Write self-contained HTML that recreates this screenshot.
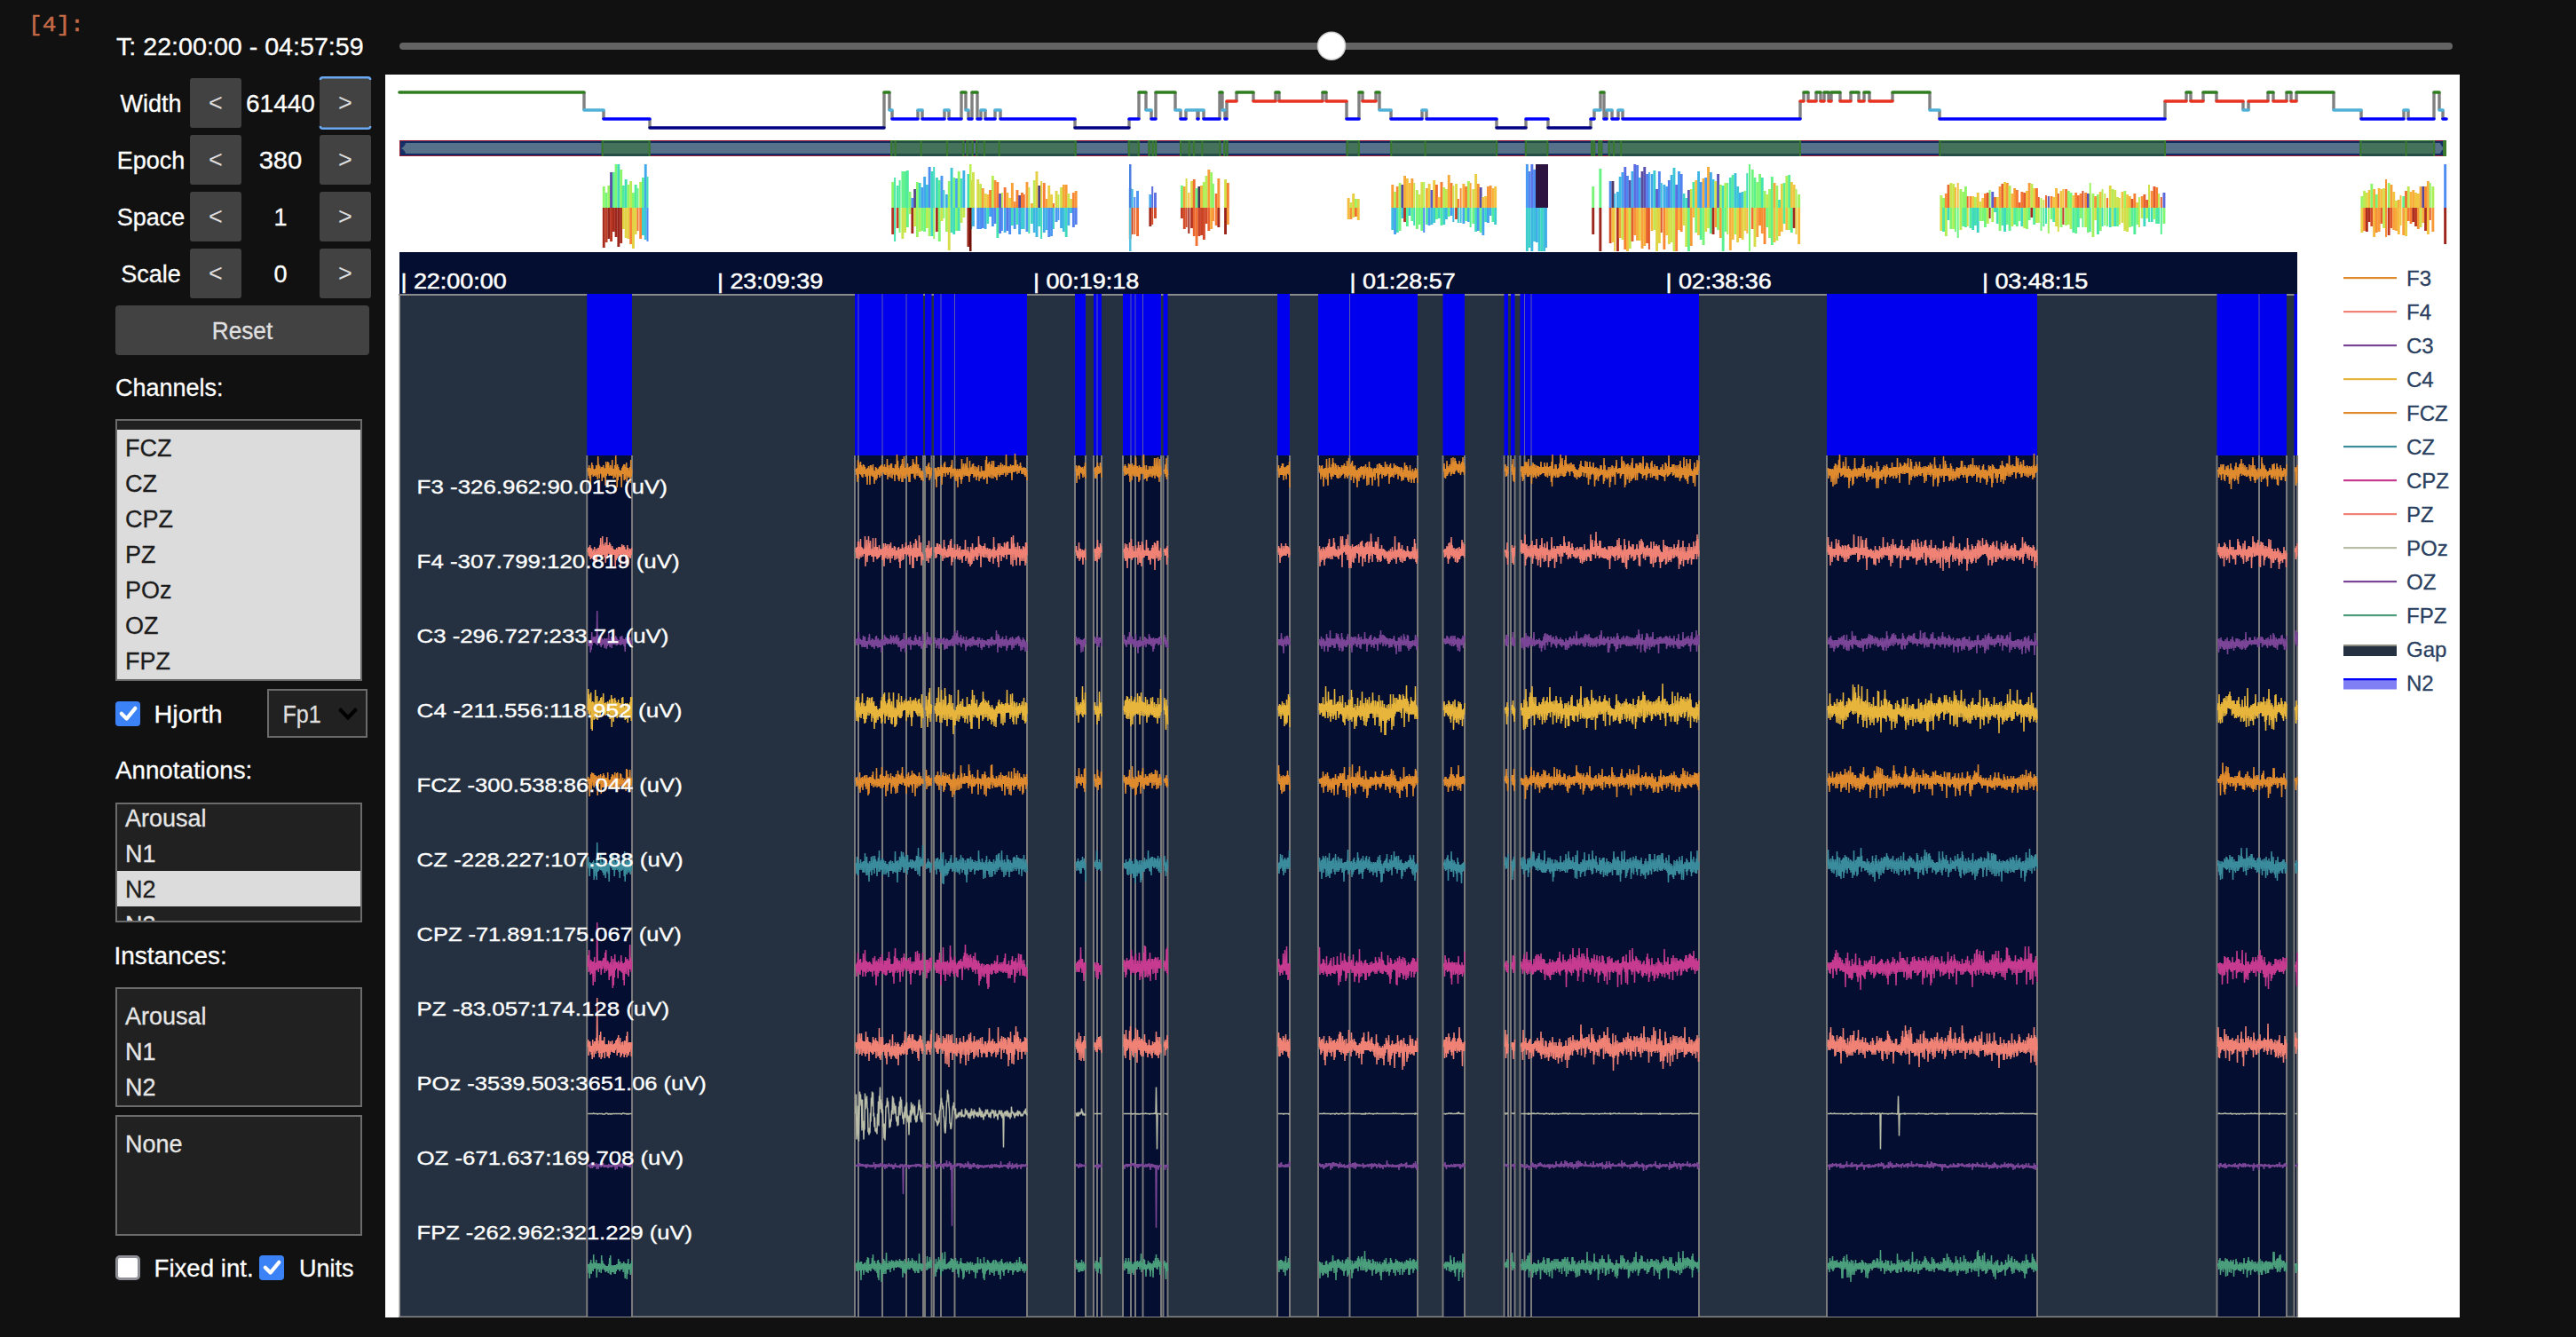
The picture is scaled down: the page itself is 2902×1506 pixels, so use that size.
<!DOCTYPE html><html><head><meta charset="utf-8"><style>html,body{margin:0;padding:0;background:#111111;width:2902px;height:1506px;overflow:hidden}svg{display:block}</style></head><body>
<svg width="2902" height="1506" viewBox="0 0 2902 1506">
<rect width="2902" height="1506" fill="#111111"/>
<text x="32" y="34.8" font-size="24.8" fill="#c46a47" font-family='"Liberation Mono", monospace' textLength="62.8" lengthAdjust="spacingAndGlyphs" stroke="#c46a47" stroke-width="0.5">[4]:</text>
<text x="131" y="62" font-size="27" fill="#ffffff" font-family='"Liberation Sans", sans-serif' stroke="#ffffff" stroke-width="0.3" textLength="278.7" lengthAdjust="spacingAndGlyphs" >T: 22:00:00 - 04:57:59</text>
<rect x="450" y="48" width="2313" height="8" rx="4" fill="#646464"/>
<circle cx="1500" cy="51.7" r="15.5" fill="#ffffff" stroke="#cfcfcf" stroke-width="1.5"/>
<text x="170" y="126.25" font-size="27" fill="#ffffff" font-family='"Liberation Sans", sans-serif' stroke="#ffffff" stroke-width="0.3" text-anchor="middle" >Width</text>
<rect x="214" y="88" width="58" height="56" rx="3" fill="#424242"/>
<rect x="360" y="88" width="58" height="56" rx="3" fill="#424242"/>
<text x="243" y="125.25" font-size="27" fill="#dddddd" font-family='"Liberation Sans", sans-serif' text-anchor="middle" >&lt;</text>
<text x="389" y="125.25" font-size="27" fill="#dddddd" font-family='"Liberation Sans", sans-serif' text-anchor="middle" >&gt;</text>
<text x="316" y="126.25" font-size="27" fill="#ffffff" font-family='"Liberation Sans", sans-serif' stroke="#ffffff" stroke-width="0.3" text-anchor="middle" textLength="77.9" lengthAdjust="spacingAndGlyphs" >61440</text>
<text x="170" y="190.25" font-size="27" fill="#ffffff" font-family='"Liberation Sans", sans-serif' stroke="#ffffff" stroke-width="0.3" text-anchor="middle" >Epoch</text>
<rect x="214" y="152" width="58" height="56" rx="3" fill="#424242"/>
<rect x="360" y="152" width="58" height="56" rx="3" fill="#424242"/>
<text x="243" y="189.25" font-size="27" fill="#dddddd" font-family='"Liberation Sans", sans-serif' text-anchor="middle" >&lt;</text>
<text x="389" y="189.25" font-size="27" fill="#dddddd" font-family='"Liberation Sans", sans-serif' text-anchor="middle" >&gt;</text>
<text x="316" y="190.25" font-size="27" fill="#ffffff" font-family='"Liberation Sans", sans-serif' stroke="#ffffff" stroke-width="0.3" text-anchor="middle" textLength="48.7" lengthAdjust="spacingAndGlyphs" >380</text>
<text x="170" y="254.25" font-size="27" fill="#ffffff" font-family='"Liberation Sans", sans-serif' stroke="#ffffff" stroke-width="0.3" text-anchor="middle" >Space</text>
<rect x="214" y="216" width="58" height="56" rx="3" fill="#424242"/>
<rect x="360" y="216" width="58" height="56" rx="3" fill="#424242"/>
<text x="243" y="253.25" font-size="27" fill="#dddddd" font-family='"Liberation Sans", sans-serif' text-anchor="middle" >&lt;</text>
<text x="389" y="253.25" font-size="27" fill="#dddddd" font-family='"Liberation Sans", sans-serif' text-anchor="middle" >&gt;</text>
<text x="316" y="254.25" font-size="27" fill="#ffffff" font-family='"Liberation Sans", sans-serif' stroke="#ffffff" stroke-width="0.3" text-anchor="middle" >1</text>
<text x="170" y="318.25" font-size="27" fill="#ffffff" font-family='"Liberation Sans", sans-serif' stroke="#ffffff" stroke-width="0.3" text-anchor="middle" >Scale</text>
<rect x="214" y="280" width="58" height="56" rx="3" fill="#424242"/>
<rect x="360" y="280" width="58" height="56" rx="3" fill="#424242"/>
<text x="243" y="317.25" font-size="27" fill="#dddddd" font-family='"Liberation Sans", sans-serif' text-anchor="middle" >&lt;</text>
<text x="389" y="317.25" font-size="27" fill="#dddddd" font-family='"Liberation Sans", sans-serif' text-anchor="middle" >&gt;</text>
<text x="316" y="318.25" font-size="27" fill="#ffffff" font-family='"Liberation Sans", sans-serif' stroke="#ffffff" stroke-width="0.3" text-anchor="middle" >0</text>
<path d="M360.8 90 Q360.8 87.3 363.5 87.3 H414.5 Q417.2 87.3 417.2 90 M360.8 142 Q360.8 144.7 363.5 144.7 H414.5 Q417.2 144.7 417.2 142" stroke="#6aa8f0" stroke-width="2.4" fill="none"/>
<rect x="360" y="86.5" width="58" height="59" rx="3" fill="none" stroke="#6aa8f0" stroke-width="0" />
<rect x="130" y="344" width="286" height="56" rx="4" fill="#424242"/>
<text x="273" y="382" font-size="27" fill="#e0e0e0" font-family='"Liberation Sans", sans-serif' stroke="#e0e0e0" stroke-width="0.3" text-anchor="middle" textLength="68.5" lengthAdjust="spacingAndGlyphs" >Reset</text>
<text x="130" y="446" font-size="27" fill="#ffffff" font-family='"Liberation Sans", sans-serif' stroke="#ffffff" stroke-width="0.3" >Channels:</text>
<rect x="131" y="473" width="276" height="293" fill="#dcdcdc" stroke="#6b6b6b" stroke-width="2"/>
<rect x="132" y="474" width="274" height="10" fill="#202020"/>
<text x="141" y="514" font-size="27" fill="#1c1c1c" font-family='"Liberation Sans", sans-serif' stroke="#1c1c1c" stroke-width="0.3" >FCZ</text>
<text x="141" y="554" font-size="27" fill="#1c1c1c" font-family='"Liberation Sans", sans-serif' stroke="#1c1c1c" stroke-width="0.3" >CZ</text>
<text x="141" y="594" font-size="27" fill="#1c1c1c" font-family='"Liberation Sans", sans-serif' stroke="#1c1c1c" stroke-width="0.3" >CPZ</text>
<text x="141" y="634" font-size="27" fill="#1c1c1c" font-family='"Liberation Sans", sans-serif' stroke="#1c1c1c" stroke-width="0.3" >PZ</text>
<text x="141" y="674" font-size="27" fill="#1c1c1c" font-family='"Liberation Sans", sans-serif' stroke="#1c1c1c" stroke-width="0.3" >POz</text>
<text x="141" y="714" font-size="27" fill="#1c1c1c" font-family='"Liberation Sans", sans-serif' stroke="#1c1c1c" stroke-width="0.3" >OZ</text>
<text x="141" y="754" font-size="27" fill="#1c1c1c" font-family='"Liberation Sans", sans-serif' stroke="#1c1c1c" stroke-width="0.3" >FPZ</text>
<rect x="130" y="790" width="28" height="28" rx="4" fill="#3b82f6"/>
<path d="M136.8 803.8 L142.6 809.6 L152.3 797.8" stroke="#ffffff" stroke-width="4.2" fill="none" stroke-linecap="round" stroke-linejoin="round"/>
<text x="173.5" y="814" font-size="27" fill="#ffffff" font-family='"Liberation Sans", sans-serif' stroke="#ffffff" stroke-width="0.3" textLength="77" lengthAdjust="spacingAndGlyphs" >Hjorth</text>
<rect x="302" y="777" width="111" height="53" fill="#212121" stroke="#6b6b6b" stroke-width="2"/>
<text x="318.5" y="814" font-size="27" fill="#dddddd" font-family='"Liberation Sans", sans-serif' stroke="#dddddd" stroke-width="0.3" textLength="43.3" lengthAdjust="spacingAndGlyphs" >Fp1</text>
<path d="M382.5 798.5 L392 808.5 L401.5 798.5" stroke="#000000" stroke-width="4" fill="none"/>
<text x="130" y="877" font-size="27" fill="#ffffff" font-family='"Liberation Sans", sans-serif' stroke="#ffffff" stroke-width="0.3" textLength="154.2" lengthAdjust="spacingAndGlyphs" >Annotations:</text>
<rect x="131" y="905" width="276" height="133" fill="#212121" stroke="#6b6b6b" stroke-width="2"/>
<svg x="132" y="906" width="274" height="131"><rect x="0" y="75" width="274" height="40" fill="#dcdcdc"/>
<text x="9" y="25" font-size="27" fill="#e6e6e6" font-family='"Liberation Sans", sans-serif' stroke="#e6e6e6" stroke-width="0.3" >Arousal</text>
<text x="9" y="65" font-size="27" fill="#e6e6e6" font-family='"Liberation Sans", sans-serif' stroke="#e6e6e6" stroke-width="0.3" >N1</text>
<text x="9" y="105" font-size="27" fill="#1c1c1c" font-family='"Liberation Sans", sans-serif' stroke="#1c1c1c" stroke-width="0.3" >N2</text>
<text x="9" y="145" font-size="27" fill="#e6e6e6" font-family='"Liberation Sans", sans-serif' stroke="#e6e6e6" stroke-width="0.3" >N3</text>
</svg>
<text x="128.5" y="1086" font-size="27" fill="#ffffff" font-family='"Liberation Sans", sans-serif' stroke="#ffffff" stroke-width="0.3" textLength="127.2" lengthAdjust="spacingAndGlyphs" >Instances:</text>
<rect x="131" y="1113" width="276" height="133" fill="#212121" stroke="#6b6b6b" stroke-width="2"/>
<text x="141" y="1154" font-size="27" fill="#e6e6e6" font-family='"Liberation Sans", sans-serif' stroke="#e6e6e6" stroke-width="0.3" >Arousal</text>
<text x="141" y="1194" font-size="27" fill="#e6e6e6" font-family='"Liberation Sans", sans-serif' stroke="#e6e6e6" stroke-width="0.3" >N1</text>
<text x="141" y="1234" font-size="27" fill="#e6e6e6" font-family='"Liberation Sans", sans-serif' stroke="#e6e6e6" stroke-width="0.3" >N2</text>
<rect x="131" y="1257" width="276" height="134" fill="#212121" stroke="#6b6b6b" stroke-width="2"/>
<text x="141" y="1298" font-size="27" fill="#e6e6e6" font-family='"Liberation Sans", sans-serif' stroke="#e6e6e6" stroke-width="0.3" >None</text>
<rect x="131.5" y="1415.5" width="25" height="25" rx="3.5" fill="#ffffff" stroke="#8e8e96" stroke-width="3"/>
<text x="173.5" y="1438" font-size="27" fill="#ffffff" font-family='"Liberation Sans", sans-serif' stroke="#ffffff" stroke-width="0.3" textLength="112.2" lengthAdjust="spacingAndGlyphs" >Fixed int.</text>
<rect x="292" y="1414" width="28" height="28" rx="4" fill="#3b82f6"/>
<path d="M298.8 1427.8 L304.6 1433.6 L314.3 1421.8" stroke="#ffffff" stroke-width="4.2" fill="none" stroke-linecap="round" stroke-linejoin="round"/>
<text x="337" y="1438" font-size="27" fill="#ffffff" font-family='"Liberation Sans", sans-serif' stroke="#ffffff" stroke-width="0.3" >Units</text>
<rect x="434" y="84" width="2337" height="1400" fill="#ffffff"/>
<rect x="450" y="284" width="2138" height="47" fill="#030e30"/>
<rect x="450" y="331" width="2138" height="1152" fill="#253141"/>
<rect x="449" y="331" width="2139" height="2" fill="#8a8a8a"/>
<rect x="449.5" y="331" width="1.5" height="1153" fill="#8a8a8a"/>
<rect x="449.5" y="1482.5" width="2139" height="1.5" fill="#8a8a8a"/>
<rect x="661.25" y="331" width="50.75" height="182" fill="#0000ee"/>
<rect x="661.25" y="513" width="50.75" height="970" fill="#030e30"/>
<rect x="963" y="331" width="77" height="182" fill="#0000ee"/>
<rect x="963" y="513" width="77" height="970" fill="#030e30"/>
<rect x="1042" y="331" width="7.5" height="182" fill="#0000ee"/>
<rect x="1042" y="513" width="7.5" height="970" fill="#030e30"/>
<rect x="1052" y="331" width="105" height="182" fill="#0000ee"/>
<rect x="1052" y="513" width="105" height="970" fill="#030e30"/>
<rect x="1211" y="331" width="12" height="182" fill="#0000ee"/>
<rect x="1211" y="513" width="12" height="970" fill="#030e30"/>
<rect x="1232" y="331" width="9" height="182" fill="#0000ee"/>
<rect x="1232" y="513" width="9" height="970" fill="#030e30"/>
<rect x="1265" y="331" width="43" height="182" fill="#0000ee"/>
<rect x="1265" y="513" width="43" height="970" fill="#030e30"/>
<rect x="1310.5" y="331" width="5.0" height="182" fill="#0000ee"/>
<rect x="1310.5" y="513" width="5.0" height="970" fill="#030e30"/>
<rect x="1439" y="331" width="14" height="182" fill="#0000ee"/>
<rect x="1439" y="513" width="14" height="970" fill="#030e30"/>
<rect x="1485" y="331" width="112" height="182" fill="#0000ee"/>
<rect x="1485" y="513" width="112" height="970" fill="#030e30"/>
<rect x="1625.5" y="331" width="24.5" height="182" fill="#0000ee"/>
<rect x="1625.5" y="513" width="24.5" height="970" fill="#030e30"/>
<rect x="1694.5" y="331" width="4.5" height="182" fill="#0000ee"/>
<rect x="1694.5" y="513" width="4.5" height="970" fill="#030e30"/>
<rect x="1702" y="331" width="4.5" height="182" fill="#0000ee"/>
<rect x="1702" y="513" width="4.5" height="970" fill="#030e30"/>
<rect x="1712.5" y="331" width="201.5" height="182" fill="#0000ee"/>
<rect x="1712.5" y="513" width="201.5" height="970" fill="#030e30"/>
<rect x="2058" y="331" width="237" height="182" fill="#0000ee"/>
<rect x="2058" y="513" width="237" height="970" fill="#030e30"/>
<rect x="2497.5" y="331" width="78.5" height="182" fill="#0000ee"/>
<rect x="2497.5" y="513" width="78.5" height="970" fill="#030e30"/>
<rect x="2584.5" y="331" width="3.5" height="182" fill="#0000ee"/>
<rect x="2584.5" y="513" width="3.5" height="970" fill="#030e30"/>
<rect x="660.25" y="513" width="2" height="970" fill="#7a7a7a"/>
<rect x="711" y="513" width="2" height="970" fill="#7a7a7a"/>
<rect x="962" y="513" width="2" height="970" fill="#7a7a7a"/>
<rect x="1039" y="513" width="2" height="970" fill="#7a7a7a"/>
<rect x="966" y="513" width="2" height="970" fill="#7a7a7a"/>
<rect x="993" y="513" width="2" height="970" fill="#7a7a7a"/>
<rect x="1020" y="513" width="2" height="970" fill="#7a7a7a"/>
<rect x="966.5" y="331" width="1" height="182" fill="#5a5aa8"/>
<rect x="993.5" y="331" width="1" height="182" fill="#5a5aa8"/>
<rect x="1020.5" y="331" width="1" height="182" fill="#5a5aa8"/>
<rect x="1041" y="513" width="2" height="970" fill="#7a7a7a"/>
<rect x="1048.5" y="513" width="2" height="970" fill="#7a7a7a"/>
<rect x="1051" y="513" width="2" height="970" fill="#7a7a7a"/>
<rect x="1156" y="513" width="2" height="970" fill="#7a7a7a"/>
<rect x="1059" y="513" width="2" height="970" fill="#7a7a7a"/>
<rect x="1074.5" y="513" width="2" height="970" fill="#7a7a7a"/>
<rect x="1059.5" y="331" width="1" height="182" fill="#5a5aa8"/>
<rect x="1075.0" y="331" width="1" height="182" fill="#5a5aa8"/>
<rect x="1210" y="513" width="2" height="970" fill="#7a7a7a"/>
<rect x="1222" y="513" width="2" height="970" fill="#7a7a7a"/>
<rect x="1231" y="513" width="2" height="970" fill="#7a7a7a"/>
<rect x="1240" y="513" width="2" height="970" fill="#7a7a7a"/>
<rect x="1235" y="513" width="2" height="970" fill="#7a7a7a"/>
<rect x="1235.5" y="331" width="1" height="182" fill="#5a5aa8"/>
<rect x="1264" y="513" width="2" height="970" fill="#7a7a7a"/>
<rect x="1307" y="513" width="2" height="970" fill="#7a7a7a"/>
<rect x="1273" y="513" width="2" height="970" fill="#7a7a7a"/>
<rect x="1278" y="513" width="2" height="970" fill="#7a7a7a"/>
<rect x="1286.5" y="513" width="2" height="970" fill="#7a7a7a"/>
<rect x="1273.5" y="331" width="1" height="182" fill="#5a5aa8"/>
<rect x="1278.5" y="331" width="1" height="182" fill="#5a5aa8"/>
<rect x="1287.0" y="331" width="1" height="182" fill="#5a5aa8"/>
<rect x="1309.5" y="513" width="2" height="970" fill="#7a7a7a"/>
<rect x="1314.5" y="513" width="2" height="970" fill="#7a7a7a"/>
<rect x="1438" y="513" width="2" height="970" fill="#7a7a7a"/>
<rect x="1452" y="513" width="2" height="970" fill="#7a7a7a"/>
<rect x="1484" y="513" width="2" height="970" fill="#7a7a7a"/>
<rect x="1596" y="513" width="2" height="970" fill="#7a7a7a"/>
<rect x="1519.5" y="513" width="2" height="970" fill="#7a7a7a"/>
<rect x="1520.0" y="331" width="1" height="182" fill="#5a5aa8"/>
<rect x="1624.5" y="513" width="2" height="970" fill="#7a7a7a"/>
<rect x="1649" y="513" width="2" height="970" fill="#7a7a7a"/>
<rect x="1693.5" y="513" width="2" height="970" fill="#7a7a7a"/>
<rect x="1698" y="513" width="2" height="970" fill="#7a7a7a"/>
<rect x="1701" y="513" width="2" height="970" fill="#7a7a7a"/>
<rect x="1705.5" y="513" width="2" height="970" fill="#7a7a7a"/>
<rect x="1711.5" y="513" width="2" height="970" fill="#7a7a7a"/>
<rect x="1913" y="513" width="2" height="970" fill="#7a7a7a"/>
<rect x="1716.5" y="513" width="2" height="970" fill="#7a7a7a"/>
<rect x="1724" y="513" width="2" height="970" fill="#7a7a7a"/>
<rect x="1717.0" y="331" width="1" height="182" fill="#5a5aa8"/>
<rect x="1724.5" y="331" width="1" height="182" fill="#5a5aa8"/>
<rect x="2057" y="513" width="2" height="970" fill="#7a7a7a"/>
<rect x="2294" y="513" width="2" height="970" fill="#7a7a7a"/>
<rect x="2496.5" y="513" width="2" height="970" fill="#7a7a7a"/>
<rect x="2575" y="513" width="2" height="970" fill="#7a7a7a"/>
<rect x="2544" y="513" width="2" height="970" fill="#7a7a7a"/>
<rect x="2544.5" y="331" width="1" height="182" fill="#5a5aa8"/>
<rect x="2583.5" y="513" width="2" height="970" fill="#7a7a7a"/>
<rect x="2587" y="513" width="2" height="970" fill="#7a7a7a"/>
<text x="451.4" y="325.3" font-size="24" fill="#ffffff" font-family='"Liberation Sans", sans-serif' stroke="#ffffff" stroke-width="0.5" textLength="119.4" lengthAdjust="spacingAndGlyphs" >| 22:00:00</text>
<text x="807.9" y="325.3" font-size="24" fill="#ffffff" font-family='"Liberation Sans", sans-serif' stroke="#ffffff" stroke-width="0.5" textLength="119.4" lengthAdjust="spacingAndGlyphs" >| 23:09:39</text>
<text x="1163.9" y="325.3" font-size="24" fill="#ffffff" font-family='"Liberation Sans", sans-serif' stroke="#ffffff" stroke-width="0.5" textLength="119.4" lengthAdjust="spacingAndGlyphs" >| 00:19:18</text>
<text x="1520.4" y="325.3" font-size="24" fill="#ffffff" font-family='"Liberation Sans", sans-serif' stroke="#ffffff" stroke-width="0.5" textLength="119.4" lengthAdjust="spacingAndGlyphs" >| 01:28:57</text>
<text x="1876.4" y="325.3" font-size="24" fill="#ffffff" font-family='"Liberation Sans", sans-serif' stroke="#ffffff" stroke-width="0.5" textLength="119.4" lengthAdjust="spacingAndGlyphs" >| 02:38:36</text>
<text x="2232.9" y="325.3" font-size="24" fill="#ffffff" font-family='"Liberation Sans", sans-serif' stroke="#ffffff" stroke-width="0.5" textLength="119.4" lengthAdjust="spacingAndGlyphs" >| 03:48:15</text>
<path d="M658.0 104V124M680.0 124V134M732.0 134V144M996.0 144V104M1002.0 104V124M1005.0 124V134M1034.0 134V124M1039.0 124V134M1064.0 134V124M1069.0 124V134M1083.0 134V104M1088.0 104V124M1091.0 124V134M1095.0 134V104M1101.0 104V134M1105.0 134V124M1110.0 124V134M1121.0 134V124M1127.0 124V134M1211.0 134V144M1272.0 144V134M1283.0 134V104M1291.0 104V124M1297.0 124V134M1302.0 134V104M1324.0 104V124M1330.0 124V134M1336.0 134V124M1349.0 124V134M1350.0 134V124M1356.0 124V134M1374.0 134V104M1377.0 104V124M1380.0 124V134M1382.0 134V114M1393.0 114V104M1412.0 104V114M1437.0 114V104M1441.0 104V114M1490.0 114V104M1494.0 104V114M1517.0 114V134M1531.0 134V104M1535.0 104V114M1550.0 114V104M1554.0 104V124M1567.0 124V134M1602.0 134V124M1607.0 124V134M1686.0 134V144M1719.0 144V134M1744.0 134V144M1792.0 144V134M1796.0 134V124M1803.0 124V104M1807.0 104V134M1810.0 134V124M1816.0 124V134M1823.0 134V124M1828.0 124V134M2028.0 134V114M2032.0 114V104M2037.0 104V114M2046.0 114V104M2051.0 104V114M2055.0 114V104M2060.0 104V114M2063.0 114V104M2073.0 104V114M2085.0 114V104M2094.0 104V114M2100.0 114V104M2106.0 104V114M2132.0 114V104M2174.0 104V124M2185.0 124V134M2439.0 134V114M2463.0 114V104M2468.0 104V114M2482.0 114V104M2497.0 104V114M2527.0 114V124M2533.0 124V114M2555.0 114V104M2561.0 104V114M2576.0 114V104M2581.0 104V114M2587.0 114V104M2629.0 104V124M2660.0 124V134M2708.0 134V124M2713.0 124V134M2742.0 134V104M2748.0 104V124M2752.0 124V134" stroke="#808080" stroke-width="3.4" fill="none"/>
<path d="M450.0 104H658.0M996.0 104H1002.0M1083.0 104H1088.0M1095.0 104H1101.0M1283.0 104H1291.0M1302.0 104H1324.0M1374.0 104H1377.0M1393.0 104H1412.0M1437.0 104H1441.0M1490.0 104H1494.0M1531.0 104H1535.0M1550.0 104H1554.0M1803.0 104H1807.0M2032.0 104H2037.0M2046.0 104H2051.0M2055.0 104H2060.0M2063.0 104H2073.0M2085.0 104H2094.0M2100.0 104H2106.0M2132.0 104H2174.0M2463.0 104H2468.0M2482.0 104H2497.0M2555.0 104H2561.0M2576.0 104H2581.0M2587.0 104H2629.0M2742.0 104H2748.0" stroke="#2e7d1f" stroke-width="3.6" fill="none" stroke-linecap="round"/>
<path d="M1382.0 114H1393.0M1412.0 114H1437.0M1441.0 114H1490.0M1494.0 114H1517.0M1535.0 114H1550.0M2028.0 114H2032.0M2037.0 114H2046.0M2051.0 114H2055.0M2060.0 114H2063.0M2073.0 114H2085.0M2094.0 114H2100.0M2106.0 114H2132.0M2439.0 114H2463.0M2468.0 114H2482.0M2497.0 114H2527.0M2533.0 114H2555.0M2561.0 114H2576.0M2581.0 114H2587.0" stroke="#e8321f" stroke-width="3.6" fill="none" stroke-linecap="round"/>
<path d="M658.0 124H680.0M1002.0 124H1005.0M1034.0 124H1039.0M1064.0 124H1069.0M1088.0 124H1091.0M1105.0 124H1110.0M1121.0 124H1127.0M1291.0 124H1297.0M1324.0 124H1330.0M1336.0 124H1349.0M1350.0 124H1356.0M1377.0 124H1380.0M1554.0 124H1567.0M1602.0 124H1607.0M1796.0 124H1803.0M1810.0 124H1816.0M1823.0 124H1828.0M2174.0 124H2185.0M2527.0 124H2533.0M2629.0 124H2660.0M2708.0 124H2713.0M2748.0 124H2752.0" stroke="#4fb0d8" stroke-width="3.6" fill="none" stroke-linecap="round"/>
<path d="M680.0 134H732.0M1005.0 134H1034.0M1039.0 134H1064.0M1069.0 134H1083.0M1091.0 134H1095.0M1101.0 134H1105.0M1110.0 134H1121.0M1127.0 134H1211.0M1272.0 134H1283.0M1297.0 134H1302.0M1330.0 134H1336.0M1349.0 134H1350.0M1356.0 134H1374.0M1380.0 134H1382.0M1517.0 134H1531.0M1567.0 134H1602.0M1607.0 134H1686.0M1719.0 134H1744.0M1792.0 134H1796.0M1807.0 134H1810.0M1816.0 134H1823.0M1828.0 134H2028.0M2185.0 134H2439.0M2660.0 134H2708.0M2713.0 134H2742.0M2752.0 134H2756.0" stroke="#0000ff" stroke-width="3.6" fill="none" stroke-linecap="round"/>
<path d="M732.0 144H996.0M1211.0 144H1272.0M1686.0 144H1719.0M1744.0 144H1792.0" stroke="#000080" stroke-width="3.6" fill="none" stroke-linecap="round"/>
<rect x="450" y="158" width="2306" height="18" fill="#9a1b32"/>
<rect x="451" y="159" width="2304" height="16" fill="#0f2b62"/>
<rect x="452" y="161" width="2302" height="12" fill="#567189"/>
<path d="M451 161 H457 Q456 165 452 167 Q456 169 457 173 H451 Z" fill="#17306a"/>
<path d="M2755 161 H2749 Q2750 165 2754 167 Q2750 169 2749 173 H2755 Z" fill="#17306a"/>
<rect x="677.8" y="158" width="54.7" height="18" fill="#244d45"/>
<rect x="677.8" y="161" width="54.7" height="12" fill="#44725a"/>
<rect x="677.8" y="158" width="54.7" height="1" fill="#3a7a2e"/>
<rect x="677.8" y="158" width="2" height="18" fill="#3a7a2e"/>
<rect x="730.6" y="158" width="2" height="18" fill="#3a7a2e"/>
<rect x="1003.3" y="158" width="83.1" height="18" fill="#244d45"/>
<rect x="1003.3" y="161" width="83.1" height="12" fill="#44725a"/>
<rect x="1003.3" y="158" width="83.1" height="1" fill="#3a7a2e"/>
<rect x="1003.3" y="158" width="2" height="18" fill="#3a7a2e"/>
<rect x="1084.4" y="158" width="2" height="18" fill="#3a7a2e"/>
<rect x="1007.6" y="158" width="2" height="18" fill="#3a7a2e"/>
<rect x="1036.7" y="158" width="2" height="18" fill="#3a7a2e"/>
<rect x="1065.9" y="158" width="2" height="18" fill="#3a7a2e"/>
<rect x="1088.5" y="158" width="8.1" height="18" fill="#244d45"/>
<rect x="1088.5" y="161" width="8.1" height="12" fill="#44725a"/>
<rect x="1088.5" y="158" width="8.1" height="1" fill="#3a7a2e"/>
<rect x="1088.5" y="158" width="2" height="18" fill="#3a7a2e"/>
<rect x="1094.6" y="158" width="2" height="18" fill="#3a7a2e"/>
<rect x="1099.3" y="158" width="113.3" height="18" fill="#244d45"/>
<rect x="1099.3" y="161" width="113.3" height="12" fill="#44725a"/>
<rect x="1099.3" y="158" width="113.3" height="1" fill="#3a7a2e"/>
<rect x="1099.3" y="158" width="2" height="18" fill="#3a7a2e"/>
<rect x="1210.6" y="158" width="2" height="18" fill="#3a7a2e"/>
<rect x="1107.9" y="158" width="2" height="18" fill="#3a7a2e"/>
<rect x="1124.7" y="158" width="2" height="18" fill="#3a7a2e"/>
<rect x="1270.8" y="158" width="12.9" height="18" fill="#244d45"/>
<rect x="1270.8" y="161" width="12.9" height="12" fill="#44725a"/>
<rect x="1270.8" y="158" width="12.9" height="1" fill="#3a7a2e"/>
<rect x="1270.8" y="158" width="2" height="18" fill="#3a7a2e"/>
<rect x="1281.7" y="158" width="2" height="18" fill="#3a7a2e"/>
<rect x="1293.4" y="158" width="9.7" height="18" fill="#244d45"/>
<rect x="1293.4" y="161" width="9.7" height="12" fill="#44725a"/>
<rect x="1293.4" y="158" width="9.7" height="1" fill="#3a7a2e"/>
<rect x="1293.4" y="158" width="2" height="18" fill="#3a7a2e"/>
<rect x="1301.2" y="158" width="2" height="18" fill="#3a7a2e"/>
<rect x="1297.8" y="158" width="2" height="18" fill="#3a7a2e"/>
<rect x="1329.0" y="158" width="46.4" height="18" fill="#244d45"/>
<rect x="1329.0" y="161" width="46.4" height="12" fill="#44725a"/>
<rect x="1329.0" y="158" width="46.4" height="1" fill="#3a7a2e"/>
<rect x="1329.0" y="158" width="2" height="18" fill="#3a7a2e"/>
<rect x="1373.4" y="158" width="2" height="18" fill="#3a7a2e"/>
<rect x="1338.7" y="158" width="2" height="18" fill="#3a7a2e"/>
<rect x="1344.1" y="158" width="2" height="18" fill="#3a7a2e"/>
<rect x="1353.3" y="158" width="2" height="18" fill="#3a7a2e"/>
<rect x="1378.1" y="158" width="5.4" height="18" fill="#244d45"/>
<rect x="1378.1" y="161" width="5.4" height="12" fill="#44725a"/>
<rect x="1378.1" y="158" width="5.4" height="1" fill="#3a7a2e"/>
<rect x="1378.1" y="158" width="2" height="18" fill="#3a7a2e"/>
<rect x="1381.5" y="158" width="2" height="18" fill="#3a7a2e"/>
<rect x="1516.7" y="158" width="15.1" height="18" fill="#244d45"/>
<rect x="1516.7" y="161" width="15.1" height="12" fill="#44725a"/>
<rect x="1516.7" y="158" width="15.1" height="1" fill="#3a7a2e"/>
<rect x="1516.7" y="158" width="2" height="18" fill="#3a7a2e"/>
<rect x="1529.8" y="158" width="2" height="18" fill="#3a7a2e"/>
<rect x="1566.3" y="158" width="120.8" height="18" fill="#244d45"/>
<rect x="1566.3" y="161" width="120.8" height="12" fill="#44725a"/>
<rect x="1566.3" y="158" width="120.8" height="1" fill="#3a7a2e"/>
<rect x="1566.3" y="158" width="2" height="18" fill="#3a7a2e"/>
<rect x="1685.1" y="158" width="2" height="18" fill="#3a7a2e"/>
<rect x="1604.6" y="158" width="2" height="18" fill="#3a7a2e"/>
<rect x="1717.9" y="158" width="26.4" height="18" fill="#244d45"/>
<rect x="1717.9" y="161" width="26.4" height="12" fill="#44725a"/>
<rect x="1717.9" y="158" width="26.4" height="1" fill="#3a7a2e"/>
<rect x="1717.9" y="158" width="2" height="18" fill="#3a7a2e"/>
<rect x="1742.3" y="158" width="2" height="18" fill="#3a7a2e"/>
<rect x="1792.3" y="158" width="4.9" height="18" fill="#244d45"/>
<rect x="1792.3" y="161" width="4.9" height="12" fill="#44725a"/>
<rect x="1792.3" y="158" width="4.9" height="1" fill="#3a7a2e"/>
<rect x="1792.3" y="158" width="2" height="18" fill="#3a7a2e"/>
<rect x="1795.1" y="158" width="2" height="18" fill="#3a7a2e"/>
<rect x="1800.4" y="158" width="4.9" height="18" fill="#244d45"/>
<rect x="1800.4" y="161" width="4.9" height="12" fill="#44725a"/>
<rect x="1800.4" y="158" width="4.9" height="1" fill="#3a7a2e"/>
<rect x="1800.4" y="158" width="2" height="18" fill="#3a7a2e"/>
<rect x="1803.2" y="158" width="2" height="18" fill="#3a7a2e"/>
<rect x="1811.7" y="158" width="217.3" height="18" fill="#244d45"/>
<rect x="1811.7" y="161" width="217.3" height="12" fill="#44725a"/>
<rect x="1811.7" y="158" width="217.3" height="1" fill="#3a7a2e"/>
<rect x="1811.7" y="158" width="2" height="18" fill="#3a7a2e"/>
<rect x="2027.0" y="158" width="2" height="18" fill="#3a7a2e"/>
<rect x="1817.1" y="158" width="2" height="18" fill="#3a7a2e"/>
<rect x="1825.2" y="158" width="2" height="18" fill="#3a7a2e"/>
<rect x="2184.4" y="158" width="255.6" height="18" fill="#244d45"/>
<rect x="2184.4" y="161" width="255.6" height="12" fill="#44725a"/>
<rect x="2184.4" y="158" width="255.6" height="1" fill="#3a7a2e"/>
<rect x="2184.4" y="158" width="2" height="18" fill="#3a7a2e"/>
<rect x="2438.0" y="158" width="2" height="18" fill="#3a7a2e"/>
<rect x="2658.4" y="158" width="84.7" height="18" fill="#244d45"/>
<rect x="2658.4" y="161" width="84.7" height="12" fill="#44725a"/>
<rect x="2658.4" y="158" width="84.7" height="1" fill="#3a7a2e"/>
<rect x="2658.4" y="158" width="2" height="18" fill="#3a7a2e"/>
<rect x="2741.1" y="158" width="2" height="18" fill="#3a7a2e"/>
<rect x="2709.6" y="158" width="2" height="18" fill="#3a7a2e"/>
<rect x="2752.2" y="158" width="3.8" height="18" fill="#244d45"/>
<rect x="2752.2" y="161" width="3.8" height="12" fill="#44725a"/>
<rect x="2752.2" y="158" width="3.8" height="1" fill="#3a7a2e"/>
<rect x="2752.2" y="158" width="2" height="18" fill="#3a7a2e"/>
<rect x="2754.0" y="158" width="2" height="18" fill="#3a7a2e"/>
<rect x="678.8" y="210" width="2.9" height="24" fill="#8cf569"/><rect x="678.8" y="234" width="2.9" height="45" fill="#a82c1e"/><rect x="681.6" y="217" width="2.9" height="17" fill="#73f57a"/><rect x="681.6" y="234" width="2.9" height="39" fill="#c13c24"/><rect x="684.4" y="209" width="2.9" height="25" fill="#98f463"/><rect x="684.4" y="234" width="2.9" height="35" fill="#97261c"/><rect x="687.1" y="194" width="2.9" height="40" fill="#594da8"/><rect x="687.1" y="234" width="2.9" height="38" fill="#ba3722"/><rect x="689.9" y="194" width="2.9" height="40" fill="#5af091"/><rect x="689.9" y="234" width="2.9" height="27" fill="#a72b1d"/><rect x="692.6" y="185" width="2.9" height="49" fill="#7bf674"/><rect x="692.6" y="234" width="2.9" height="33" fill="#9d271c"/><rect x="695.4" y="185" width="2.9" height="49" fill="#40dcb9"/><rect x="695.4" y="234" width="2.9" height="44" fill="#99251c"/><rect x="698.2" y="191" width="2.9" height="43" fill="#89f56b"/><rect x="698.2" y="234" width="2.9" height="40" fill="#a82c1e"/><rect x="700.9" y="209" width="2.9" height="25" fill="#4fea9e"/><rect x="700.9" y="234" width="2.9" height="24" fill="#e3d244"/><rect x="703.7" y="202" width="2.9" height="32" fill="#41deb6"/><rect x="703.7" y="234" width="2.9" height="34" fill="#e1d545"/><rect x="706.4" y="208" width="2.9" height="26" fill="#90f567"/><rect x="706.4" y="234" width="2.9" height="35" fill="#e7cf43"/><rect x="709.2" y="204" width="2.9" height="30" fill="#b8eb54"/><rect x="709.2" y="234" width="2.9" height="41" fill="#f78534"/><rect x="712.0" y="217" width="2.9" height="17" fill="#81f670"/><rect x="712.0" y="234" width="2.9" height="46" fill="#e4d143"/><rect x="714.7" y="208" width="2.9" height="26" fill="#51ec9a"/><rect x="714.7" y="234" width="2.9" height="30" fill="#e2d444"/><rect x="717.5" y="212" width="2.0" height="22" fill="#64f386"/><rect x="717.5" y="234" width="2.0" height="26" fill="#f27231"/><rect x="720.2" y="205" width="2.9" height="29" fill="#aeef58"/><rect x="720.2" y="234" width="2.9" height="35" fill="#f78333"/><rect x="723.0" y="200" width="2.9" height="34" fill="#57ef93"/><rect x="723.0" y="234" width="2.9" height="31" fill="#3ccdcd"/><rect x="725.8" y="185" width="2.9" height="49" fill="#42a8ec"/><rect x="725.8" y="234" width="2.9" height="36" fill="#3cc0db"/><rect x="728.5" y="199" width="2.0" height="35" fill="#43dfb3"/><rect x="728.5" y="234" width="2.0" height="38" fill="#4e8bf1"/><rect x="1004.3" y="205" width="2.9" height="29" fill="#88f56c"/><rect x="1004.3" y="234" width="2.9" height="30" fill="#b53421"/><rect x="1007.1" y="200" width="2.0" height="34" fill="#48e6a8"/><rect x="1007.1" y="234" width="2.0" height="38" fill="#45e2ae"/><rect x="1009.8" y="209" width="2.9" height="25" fill="#4ae7a5"/><rect x="1009.8" y="234" width="2.9" height="23" fill="#c64025"/><rect x="1012.6" y="203" width="2.0" height="31" fill="#51ec9b"/><rect x="1012.6" y="234" width="2.0" height="28" fill="#77f577"/><rect x="1015.4" y="193" width="2.9" height="41" fill="#62f289"/><rect x="1015.4" y="234" width="2.9" height="35" fill="#c9e44d"/><rect x="1018.1" y="193" width="2.9" height="41" fill="#58ef92"/><rect x="1018.1" y="234" width="2.9" height="28" fill="#c9e44d"/><rect x="1020.9" y="192" width="2.9" height="42" fill="#4feb9d"/><rect x="1020.9" y="234" width="2.9" height="22" fill="#65f385"/><rect x="1023.6" y="216" width="2.9" height="18" fill="#7ff671"/><rect x="1023.6" y="234" width="2.9" height="7" fill="#a8f05b"/><rect x="1026.4" y="223" width="2.9" height="11" fill="#4997f1"/><rect x="1026.4" y="234" width="2.9" height="29" fill="#a1291c"/><rect x="1029.2" y="213" width="2.9" height="21" fill="#534287"/><rect x="1029.2" y="234" width="2.9" height="21" fill="#cde24c"/><rect x="1031.9" y="205" width="2.9" height="29" fill="#85f66d"/><rect x="1031.9" y="234" width="2.9" height="33" fill="#9af362"/><rect x="1034.7" y="206" width="2.9" height="28" fill="#3dd4c3"/><rect x="1034.7" y="234" width="2.9" height="27" fill="#b7ec54"/><rect x="1037.4" y="211" width="2.9" height="23" fill="#44a1ef"/><rect x="1037.4" y="234" width="2.9" height="26" fill="#7af675"/><rect x="1040.2" y="199" width="2.9" height="35" fill="#42a8ec"/><rect x="1040.2" y="234" width="2.9" height="27" fill="#71f57b"/><rect x="1043.0" y="208" width="2.9" height="26" fill="#3bc2d8"/><rect x="1043.0" y="234" width="2.9" height="23" fill="#bee951"/><rect x="1045.7" y="188" width="2.9" height="46" fill="#4d8ef1"/><rect x="1045.7" y="234" width="2.9" height="32" fill="#a4f15d"/><rect x="1048.5" y="193" width="2.9" height="41" fill="#3ed8bf"/><rect x="1048.5" y="234" width="2.9" height="32" fill="#3ed7c0"/><rect x="1051.2" y="188" width="2.0" height="46" fill="#3ed7c0"/><rect x="1051.2" y="234" width="2.0" height="35" fill="#94f465"/><rect x="1054.0" y="200" width="2.9" height="34" fill="#40dabb"/><rect x="1054.0" y="234" width="2.9" height="27" fill="#a82c1d"/><rect x="1056.8" y="203" width="2.9" height="31" fill="#5af090"/><rect x="1056.8" y="234" width="2.9" height="38" fill="#7ef672"/><rect x="1059.5" y="198" width="2.9" height="36" fill="#4997f1"/><rect x="1059.5" y="234" width="2.9" height="15" fill="#cfe14b"/><rect x="1062.3" y="214" width="2.0" height="20" fill="#3cccce"/><rect x="1062.3" y="234" width="2.0" height="12" fill="#88f56c"/><rect x="1065.0" y="219" width="2.9" height="15" fill="#40afe8"/><rect x="1065.0" y="234" width="2.9" height="27" fill="#a6f15b"/><rect x="1067.8" y="204" width="2.9" height="30" fill="#97f463"/><rect x="1067.8" y="234" width="2.9" height="48" fill="#d7dc48"/><rect x="1070.6" y="189" width="2.9" height="45" fill="#3bc8d3"/><rect x="1070.6" y="234" width="2.9" height="28" fill="#41deb6"/><rect x="1073.3" y="200" width="2.9" height="34" fill="#70f57c"/><rect x="1073.3" y="234" width="2.9" height="30" fill="#40dcb9"/><rect x="1076.1" y="201" width="2.9" height="33" fill="#44a4ee"/><rect x="1076.1" y="234" width="2.9" height="26" fill="#7df672"/><rect x="1078.8" y="193" width="2.9" height="41" fill="#8ff567"/><rect x="1078.8" y="234" width="2.9" height="26" fill="#42deb5"/><rect x="1081.6" y="201" width="2.9" height="33" fill="#43e0b1"/><rect x="1081.6" y="234" width="2.9" height="17" fill="#bfe951"/><rect x="1084.4" y="192" width="2.9" height="42" fill="#3fafe8"/><rect x="1084.4" y="234" width="2.9" height="11" fill="#c0e850"/><rect x="1089.5" y="196" width="2.9" height="38" fill="#42deb5"/><rect x="1089.5" y="234" width="2.9" height="44" fill="#97261c"/><rect x="1092.3" y="203" width="2.9" height="31" fill="#f0c540"/><rect x="1092.3" y="234" width="2.9" height="24" fill="#3bcbcf"/><rect x="1095.0" y="194" width="2.9" height="40" fill="#d0e04b"/><rect x="1095.0" y="234" width="2.9" height="21" fill="#3fb2e6"/><rect x="1100.3" y="202" width="2.9" height="32" fill="#d8db48"/><rect x="1100.3" y="234" width="2.9" height="24" fill="#4d8ef1"/><rect x="1103.1" y="207" width="2.9" height="27" fill="#c2e750"/><rect x="1103.1" y="234" width="2.9" height="24" fill="#4b93f2"/><rect x="1105.8" y="212" width="2.9" height="22" fill="#f79e38"/><rect x="1105.8" y="234" width="2.9" height="23" fill="#5184f0"/><rect x="1108.6" y="218" width="2.9" height="16" fill="#e1d445"/><rect x="1108.6" y="234" width="2.9" height="24" fill="#41abea"/><rect x="1111.3" y="219" width="2.9" height="15" fill="#f4bf3e"/><rect x="1111.3" y="234" width="2.9" height="18" fill="#3fdabb"/><rect x="1114.1" y="214" width="2.9" height="20" fill="#f77f33"/><rect x="1114.1" y="234" width="2.9" height="10" fill="#469ef0"/><rect x="1116.9" y="198" width="2.9" height="36" fill="#b6ec54"/><rect x="1116.9" y="234" width="2.9" height="21" fill="#4a94f1"/><rect x="1119.6" y="203" width="2.9" height="31" fill="#f79336"/><rect x="1119.6" y="234" width="2.9" height="18" fill="#5185f0"/><rect x="1122.4" y="205" width="2.9" height="29" fill="#f77d32"/><rect x="1122.4" y="234" width="2.9" height="34" fill="#46e3ac"/><rect x="1125.1" y="218" width="2.9" height="16" fill="#5b53b7"/><rect x="1125.1" y="234" width="2.9" height="29" fill="#547ded"/><rect x="1127.9" y="217" width="2.0" height="17" fill="#c0e850"/><rect x="1127.9" y="234" width="2.0" height="26" fill="#4c8ff2"/><rect x="1130.7" y="211" width="2.9" height="23" fill="#f47631"/><rect x="1130.7" y="234" width="2.9" height="28" fill="#3fb1e7"/><rect x="1133.4" y="217" width="2.9" height="17" fill="#f7b43c"/><rect x="1133.4" y="234" width="2.9" height="26" fill="#5775e7"/><rect x="1136.2" y="223" width="2.9" height="11" fill="#e5d143"/><rect x="1136.2" y="234" width="2.9" height="30" fill="#4d8ef1"/><rect x="1138.9" y="206" width="2.9" height="28" fill="#f7a238"/><rect x="1138.9" y="234" width="2.9" height="20" fill="#40dbba"/><rect x="1141.7" y="227" width="2.9" height="7" fill="#f79036"/><rect x="1141.7" y="234" width="2.9" height="24" fill="#4997f1"/><rect x="1144.5" y="214" width="2.9" height="20" fill="#f78033"/><rect x="1144.5" y="234" width="2.9" height="19" fill="#41ddb7"/><rect x="1147.2" y="220" width="2.9" height="14" fill="#564693"/><rect x="1147.2" y="234" width="2.9" height="30" fill="#44a2ee"/><rect x="1150.0" y="217" width="2.9" height="17" fill="#f47731"/><rect x="1150.0" y="234" width="2.9" height="24" fill="#3bc9d2"/><rect x="1152.7" y="219" width="2.0" height="15" fill="#ef6d30"/><rect x="1152.7" y="234" width="2.0" height="24" fill="#3bc6d5"/><rect x="1155.5" y="205" width="2.9" height="29" fill="#f79c37"/><rect x="1155.5" y="234" width="2.9" height="27" fill="#4997f1"/><rect x="1158.3" y="211" width="2.0" height="23" fill="#cce24c"/><rect x="1158.3" y="234" width="2.0" height="29" fill="#42dfb4"/><rect x="1161.0" y="229" width="2.9" height="5" fill="#f7ae3a"/><rect x="1161.0" y="234" width="2.9" height="18" fill="#3ed7c0"/><rect x="1163.8" y="203" width="2.9" height="31" fill="#bbea52"/><rect x="1163.8" y="234" width="2.9" height="28" fill="#3fb2e6"/><rect x="1166.5" y="193" width="2.9" height="41" fill="#e7cf43"/><rect x="1166.5" y="234" width="2.9" height="33" fill="#3db9e1"/><rect x="1169.3" y="209" width="2.9" height="25" fill="#503e79"/><rect x="1169.3" y="234" width="2.9" height="21" fill="#3ccecc"/><rect x="1172.1" y="204" width="2.0" height="30" fill="#e3d344"/><rect x="1172.1" y="234" width="2.0" height="35" fill="#42deb5"/><rect x="1174.8" y="206" width="2.9" height="28" fill="#f77e33"/><rect x="1174.8" y="234" width="2.9" height="28" fill="#40ade9"/><rect x="1177.6" y="224" width="2.9" height="10" fill="#f79f38"/><rect x="1177.6" y="234" width="2.9" height="25" fill="#3fb2e6"/><rect x="1180.3" y="209" width="2.9" height="25" fill="#ecca41"/><rect x="1180.3" y="234" width="2.9" height="33" fill="#4c8ff2"/><rect x="1183.1" y="219" width="2.9" height="15" fill="#ecca41"/><rect x="1183.1" y="234" width="2.9" height="32" fill="#4997f1"/><rect x="1185.9" y="229" width="2.0" height="5" fill="#f47631"/><rect x="1185.9" y="234" width="2.0" height="24" fill="#3ccfca"/><rect x="1188.6" y="215" width="2.9" height="19" fill="#ded645"/><rect x="1188.6" y="234" width="2.9" height="16" fill="#4899f1"/><rect x="1191.4" y="219" width="2.0" height="15" fill="#c1e850"/><rect x="1191.4" y="234" width="2.0" height="14" fill="#4996f1"/><rect x="1194.1" y="211" width="2.9" height="23" fill="#d0e04b"/><rect x="1194.1" y="234" width="2.9" height="23" fill="#40ade9"/><rect x="1196.9" y="208" width="2.9" height="26" fill="#f7a739"/><rect x="1196.9" y="234" width="2.9" height="27" fill="#3cbcdf"/><rect x="1199.7" y="208" width="2.9" height="26" fill="#f79b37"/><rect x="1199.7" y="234" width="2.9" height="33" fill="#3fd9bd"/><rect x="1202.4" y="218" width="2.9" height="16" fill="#c6e64e"/><rect x="1202.4" y="234" width="2.9" height="20" fill="#40ace9"/><rect x="1205.2" y="224" width="2.9" height="10" fill="#d9da47"/><rect x="1205.2" y="234" width="2.9" height="6" fill="#3cbbdf"/><rect x="1207.9" y="217" width="2.9" height="17" fill="#f78434"/><rect x="1207.9" y="234" width="2.9" height="22" fill="#547eed"/><rect x="1210.7" y="215" width="2.9" height="19" fill="#f79636"/><rect x="1210.7" y="234" width="2.9" height="19" fill="#547eed"/><rect x="1271.8" y="212" width="2.9" height="22" fill="#3db8e2"/><rect x="1271.8" y="234" width="2.9" height="35" fill="#f47631"/><rect x="1274.6" y="213" width="2.0" height="21" fill="#3db9e1"/><rect x="1274.6" y="234" width="2.0" height="30" fill="#cc4627"/><rect x="1277.3" y="222" width="2.0" height="12" fill="#4e8cf1"/><rect x="1277.3" y="234" width="2.0" height="30" fill="#f17030"/><rect x="1280.1" y="215" width="2.9" height="19" fill="#4b93f1"/><rect x="1280.1" y="234" width="2.9" height="32" fill="#eb682f"/><rect x="1294.4" y="219" width="2.9" height="15" fill="#42a7ec"/><rect x="1294.4" y="234" width="2.9" height="21" fill="#a2291c"/><rect x="1297.2" y="210" width="2.0" height="24" fill="#5a6add"/><rect x="1297.2" y="234" width="2.0" height="19" fill="#d54e29"/><rect x="1300.0" y="217" width="2.9" height="17" fill="#596fe2"/><rect x="1300.0" y="234" width="2.9" height="12" fill="#d04928"/><rect x="1330.0" y="209" width="2.9" height="25" fill="#70f57c"/><rect x="1330.0" y="234" width="2.9" height="12" fill="#c13d24"/><rect x="1332.8" y="210" width="2.9" height="24" fill="#f7a539"/><rect x="1332.8" y="234" width="2.9" height="24" fill="#d44d29"/><rect x="1335.6" y="201" width="2.0" height="33" fill="#d9da47"/><rect x="1335.6" y="234" width="2.0" height="22" fill="#d24a28"/><rect x="1338.3" y="217" width="2.0" height="17" fill="#f6bb3d"/><rect x="1338.3" y="234" width="2.0" height="29" fill="#a0281c"/><rect x="1341.1" y="204" width="2.9" height="30" fill="#dfd645"/><rect x="1341.1" y="234" width="2.9" height="23" fill="#b43321"/><rect x="1343.8" y="202" width="2.9" height="32" fill="#f06f30"/><rect x="1343.8" y="234" width="2.9" height="32" fill="#ea652e"/><rect x="1346.6" y="212" width="2.9" height="22" fill="#6af481"/><rect x="1346.6" y="234" width="2.9" height="43" fill="#f17131"/><rect x="1349.4" y="210" width="2.9" height="24" fill="#453655"/><rect x="1349.4" y="234" width="2.9" height="32" fill="#ca4326"/><rect x="1352.1" y="209" width="2.9" height="25" fill="#f7b03b"/><rect x="1352.1" y="234" width="2.9" height="31" fill="#c84226"/><rect x="1354.9" y="205" width="2.9" height="29" fill="#acef59"/><rect x="1354.9" y="234" width="2.9" height="36" fill="#d04928"/><rect x="1357.6" y="198" width="2.9" height="36" fill="#b4ed55"/><rect x="1357.6" y="234" width="2.9" height="18" fill="#d04928"/><rect x="1360.4" y="191" width="2.9" height="43" fill="#f79d38"/><rect x="1360.4" y="234" width="2.9" height="26" fill="#e9642e"/><rect x="1363.2" y="194" width="2.9" height="40" fill="#98f463"/><rect x="1363.2" y="234" width="2.9" height="24" fill="#f7a739"/><rect x="1365.9" y="207" width="2.0" height="27" fill="#82f66f"/><rect x="1365.9" y="234" width="2.0" height="15" fill="#f78d35"/><rect x="1368.7" y="218" width="2.9" height="16" fill="#f06f30"/><rect x="1368.7" y="234" width="2.9" height="20" fill="#f57932"/><rect x="1371.4" y="201" width="2.9" height="33" fill="#f79236"/><rect x="1371.4" y="234" width="2.9" height="22" fill="#a42a1c"/><rect x="1379.1" y="202" width="2.9" height="32" fill="#d4de49"/><rect x="1379.1" y="234" width="2.9" height="30" fill="#98251c"/><rect x="1381.9" y="206" width="2.9" height="28" fill="#f78133"/><rect x="1381.9" y="234" width="2.9" height="19" fill="#f79937"/><rect x="1517.7" y="223" width="2.9" height="11" fill="#f6bb3d"/><rect x="1517.7" y="234" width="2.9" height="13" fill="#f5bd3e"/><rect x="1520.5" y="228" width="2.9" height="6" fill="#cae34d"/><rect x="1520.5" y="234" width="2.9" height="13" fill="#f79336"/><rect x="1523.2" y="218" width="2.9" height="16" fill="#e9cc42"/><rect x="1523.2" y="234" width="2.9" height="11" fill="#dcd846"/><rect x="1526.0" y="224" width="2.9" height="10" fill="#9df360"/><rect x="1526.0" y="234" width="2.9" height="10" fill="#ef6e30"/><rect x="1528.8" y="224" width="2.9" height="10" fill="#dfd645"/><rect x="1528.8" y="234" width="2.9" height="14" fill="#f4bf3e"/><rect x="1567.3" y="208" width="2.9" height="26" fill="#f79e38"/><rect x="1567.3" y="234" width="2.9" height="25" fill="#3cbdde"/><rect x="1570.1" y="216" width="2.9" height="18" fill="#aeef58"/><rect x="1570.1" y="234" width="2.9" height="30" fill="#469ef0"/><rect x="1572.8" y="210" width="2.9" height="24" fill="#f78b35"/><rect x="1572.8" y="234" width="2.9" height="28" fill="#42dfb4"/><rect x="1575.6" y="206" width="2.9" height="28" fill="#aaf05a"/><rect x="1575.6" y="234" width="2.9" height="26" fill="#6cf480"/><rect x="1578.4" y="208" width="2.9" height="26" fill="#57499c"/><rect x="1578.4" y="234" width="2.9" height="12" fill="#3cbddd"/><rect x="1581.1" y="198" width="2.9" height="36" fill="#f7aa3a"/><rect x="1581.1" y="234" width="2.9" height="16" fill="#b13120"/><rect x="1583.9" y="201" width="2.9" height="33" fill="#f2c23f"/><rect x="1583.9" y="234" width="2.9" height="21" fill="#57ef94"/><rect x="1586.6" y="206" width="2.9" height="28" fill="#f5bc3d"/><rect x="1586.6" y="234" width="2.9" height="9" fill="#3cc0da"/><rect x="1589.4" y="201" width="2.9" height="33" fill="#f7a038"/><rect x="1589.4" y="234" width="2.9" height="15" fill="#5ef18c"/><rect x="1592.2" y="206" width="2.0" height="28" fill="#cbe34c"/><rect x="1592.2" y="234" width="2.0" height="20" fill="#41ddb7"/><rect x="1594.9" y="214" width="2.9" height="20" fill="#b4ed55"/><rect x="1594.9" y="234" width="2.9" height="24" fill="#75f578"/><rect x="1597.7" y="219" width="2.9" height="15" fill="#cfe14b"/><rect x="1597.7" y="234" width="2.9" height="19" fill="#6af481"/><rect x="1600.4" y="205" width="2.9" height="29" fill="#d3de49"/><rect x="1600.4" y="234" width="2.9" height="26" fill="#68f483"/><rect x="1603.2" y="205" width="2.0" height="29" fill="#abf059"/><rect x="1603.2" y="234" width="2.0" height="28" fill="#4e8bf1"/><rect x="1606.0" y="212" width="2.9" height="22" fill="#f7a839"/><rect x="1606.0" y="234" width="2.9" height="19" fill="#50eb9c"/><rect x="1608.7" y="207" width="2.9" height="27" fill="#edc840"/><rect x="1608.7" y="234" width="2.9" height="20" fill="#469fef"/><rect x="1611.5" y="214" width="2.9" height="20" fill="#5c5bc7"/><rect x="1611.5" y="234" width="2.9" height="19" fill="#3cbddd"/><rect x="1614.2" y="203" width="2.9" height="31" fill="#edc840"/><rect x="1614.2" y="234" width="2.9" height="17" fill="#3bc9d2"/><rect x="1617.0" y="208" width="2.9" height="26" fill="#ef6e30"/><rect x="1617.0" y="234" width="2.9" height="13" fill="#5ef18c"/><rect x="1619.8" y="222" width="2.9" height="12" fill="#f3c03e"/><rect x="1619.8" y="234" width="2.9" height="12" fill="#3ed7c0"/><rect x="1622.5" y="205" width="2.9" height="29" fill="#f77f33"/><rect x="1622.5" y="234" width="2.9" height="20" fill="#50eb9d"/><rect x="1625.3" y="211" width="2.9" height="23" fill="#b4ed55"/><rect x="1625.3" y="234" width="2.9" height="19" fill="#3ccdcc"/><rect x="1628.0" y="213" width="2.9" height="21" fill="#cae34d"/><rect x="1628.0" y="234" width="2.9" height="13" fill="#3db9e1"/><rect x="1630.8" y="197" width="2.9" height="37" fill="#f7a93a"/><rect x="1630.8" y="234" width="2.9" height="10" fill="#63f288"/><rect x="1633.6" y="206" width="2.9" height="28" fill="#f77f33"/><rect x="1633.6" y="234" width="2.9" height="9" fill="#4997f1"/><rect x="1636.3" y="209" width="2.0" height="25" fill="#cbe34c"/><rect x="1636.3" y="234" width="2.0" height="16" fill="#3db8e1"/><rect x="1639.1" y="207" width="2.9" height="27" fill="#ded746"/><rect x="1639.1" y="234" width="2.9" height="13" fill="#c53f25"/><rect x="1641.8" y="224" width="2.0" height="10" fill="#f17130"/><rect x="1641.8" y="234" width="2.0" height="17" fill="#3cd1c8"/><rect x="1644.6" y="212" width="2.0" height="22" fill="#f78a35"/><rect x="1644.6" y="234" width="2.0" height="17" fill="#3cc0da"/><rect x="1647.4" y="207" width="2.9" height="27" fill="#f7af3b"/><rect x="1647.4" y="234" width="2.9" height="18" fill="#42a7ec"/><rect x="1650.1" y="210" width="2.9" height="24" fill="#f77f33"/><rect x="1650.1" y="234" width="2.9" height="15" fill="#63f387"/><rect x="1652.9" y="204" width="2.9" height="30" fill="#abef59"/><rect x="1652.9" y="234" width="2.9" height="16" fill="#41acea"/><rect x="1655.6" y="206" width="2.0" height="28" fill="#f7a93a"/><rect x="1655.6" y="234" width="2.0" height="22" fill="#57ef93"/><rect x="1658.4" y="213" width="2.9" height="21" fill="#d5dd49"/><rect x="1658.4" y="234" width="2.9" height="18" fill="#6df47f"/><rect x="1661.2" y="196" width="2.9" height="38" fill="#eacc42"/><rect x="1661.2" y="234" width="2.9" height="27" fill="#3ed7bf"/><rect x="1663.9" y="207" width="2.9" height="27" fill="#f79136"/><rect x="1663.9" y="234" width="2.9" height="26" fill="#4a95f1"/><rect x="1666.7" y="211" width="2.9" height="23" fill="#594da7"/><rect x="1666.7" y="234" width="2.9" height="28" fill="#68f483"/><rect x="1669.4" y="222" width="2.9" height="12" fill="#f1c33f"/><rect x="1669.4" y="234" width="2.9" height="31" fill="#43a5ed"/><rect x="1672.2" y="221" width="2.9" height="13" fill="#f2c13f"/><rect x="1672.2" y="234" width="2.9" height="16" fill="#3dd5c3"/><rect x="1675.0" y="210" width="2.9" height="24" fill="#f79536"/><rect x="1675.0" y="234" width="2.9" height="17" fill="#44a2ee"/><rect x="1677.7" y="209" width="2.9" height="25" fill="#f79336"/><rect x="1677.7" y="234" width="2.9" height="9" fill="#40aee8"/><rect x="1680.5" y="212" width="2.9" height="22" fill="#f7b43c"/><rect x="1680.5" y="234" width="2.9" height="16" fill="#4eeaa0"/><rect x="1683.2" y="210" width="2.9" height="24" fill="#f0c43f"/><rect x="1683.2" y="234" width="2.9" height="19" fill="#3bccce"/><rect x="1718.9" y="185" width="2.9" height="49" fill="#479af1"/><rect x="1718.9" y="234" width="2.9" height="49" fill="#3cccce"/><rect x="1721.6" y="193" width="2.9" height="41" fill="#5184ef"/><rect x="1721.6" y="234" width="2.9" height="45" fill="#3cd1c8"/><rect x="1724.4" y="185" width="2.9" height="49" fill="#5677e9"/><rect x="1724.4" y="234" width="2.9" height="49" fill="#3db7e2"/><rect x="1727.1" y="191" width="2.9" height="43" fill="#4e8cf1"/><rect x="1727.1" y="234" width="2.9" height="38" fill="#3cc0db"/><rect x="1729.9" y="212" width="2.9" height="22" fill="#3cbcde"/><rect x="1729.9" y="234" width="2.9" height="39" fill="#40afe8"/><rect x="1732.7" y="200" width="2.9" height="34" fill="#5774e7"/><rect x="1732.7" y="234" width="2.9" height="49" fill="#3cc2d9"/><rect x="1735.4" y="185" width="2.9" height="49" fill="#41abea"/><rect x="1735.4" y="234" width="2.9" height="49" fill="#3ed8be"/><rect x="1738.2" y="191" width="2.9" height="43" fill="#3db8e1"/><rect x="1738.2" y="234" width="2.9" height="49" fill="#3cc0db"/><rect x="1740.9" y="185" width="2.0" height="49" fill="#45a1ef"/><rect x="1740.9" y="234" width="2.0" height="45" fill="#42a8ec"/><rect x="1793.3" y="210" width="2.9" height="24" fill="#78f576"/><rect x="1793.3" y="234" width="2.9" height="30" fill="#9b261c"/><rect x="1801.4" y="190" width="2.9" height="44" fill="#67f383"/><rect x="1801.4" y="234" width="2.9" height="49" fill="#9a261c"/><rect x="1812.7" y="204" width="2.9" height="30" fill="#4d8cf1"/><rect x="1812.7" y="234" width="2.9" height="40" fill="#d9512a"/><rect x="1815.5" y="204" width="2.9" height="30" fill="#4b3a69"/><rect x="1815.5" y="234" width="2.9" height="39" fill="#f4bf3e"/><rect x="1818.2" y="218" width="2.0" height="16" fill="#3fb2e6"/><rect x="1818.2" y="234" width="2.0" height="49" fill="#e9cd42"/><rect x="1821.0" y="216" width="2.9" height="18" fill="#3eb4e5"/><rect x="1821.0" y="234" width="2.9" height="49" fill="#b13120"/><rect x="1823.7" y="199" width="2.9" height="35" fill="#3dbae0"/><rect x="1823.7" y="234" width="2.9" height="34" fill="#f7a639"/><rect x="1826.5" y="194" width="2.9" height="40" fill="#44a2ee"/><rect x="1826.5" y="234" width="2.9" height="36" fill="#c3e74f"/><rect x="1829.3" y="188" width="2.9" height="46" fill="#5870e3"/><rect x="1829.3" y="234" width="2.9" height="47" fill="#f78133"/><rect x="1832.0" y="198" width="2.9" height="36" fill="#5086f0"/><rect x="1832.0" y="234" width="2.9" height="49" fill="#f6bb3d"/><rect x="1834.8" y="203" width="2.9" height="31" fill="#5a50ae"/><rect x="1834.8" y="234" width="2.9" height="46" fill="#c1e850"/><rect x="1837.5" y="193" width="2.9" height="41" fill="#40ace9"/><rect x="1837.5" y="234" width="2.9" height="38" fill="#e45e2d"/><rect x="1840.3" y="185" width="2.9" height="49" fill="#5a6cdf"/><rect x="1840.3" y="234" width="2.9" height="31" fill="#f79236"/><rect x="1843.1" y="186" width="2.9" height="48" fill="#557aeb"/><rect x="1843.1" y="234" width="2.9" height="37" fill="#f7a93a"/><rect x="1845.8" y="200" width="2.9" height="34" fill="#41acea"/><rect x="1845.8" y="234" width="2.9" height="37" fill="#e5d043"/><rect x="1848.6" y="193" width="2.9" height="41" fill="#57489a"/><rect x="1848.6" y="234" width="2.9" height="46" fill="#f7a038"/><rect x="1851.3" y="188" width="2.9" height="46" fill="#5b52b3"/><rect x="1851.3" y="234" width="2.9" height="43" fill="#f7aa3a"/><rect x="1854.1" y="196" width="2.9" height="38" fill="#547ded"/><rect x="1854.1" y="234" width="2.9" height="40" fill="#e8632e"/><rect x="1856.9" y="194" width="2.0" height="40" fill="#43a5ed"/><rect x="1856.9" y="234" width="2.0" height="47" fill="#df582b"/><rect x="1859.6" y="196" width="2.9" height="38" fill="#43a6ed"/><rect x="1859.6" y="234" width="2.9" height="26" fill="#f7b83c"/><rect x="1862.4" y="192" width="2.9" height="42" fill="#3bcad0"/><rect x="1862.4" y="234" width="2.9" height="25" fill="#c4e64f"/><rect x="1865.1" y="213" width="2.9" height="21" fill="#5c60ce"/><rect x="1865.1" y="234" width="2.9" height="49" fill="#ded645"/><rect x="1867.9" y="193" width="2.9" height="41" fill="#5184f0"/><rect x="1867.9" y="234" width="2.9" height="40" fill="#e5d043"/><rect x="1870.7" y="206" width="2.0" height="28" fill="#3cc1da"/><rect x="1870.7" y="234" width="2.0" height="28" fill="#dd552b"/><rect x="1873.4" y="208" width="2.9" height="26" fill="#3fb0e7"/><rect x="1873.4" y="234" width="2.9" height="47" fill="#f78834"/><rect x="1876.2" y="210" width="2.9" height="24" fill="#469df0"/><rect x="1876.2" y="234" width="2.9" height="31" fill="#f4be3e"/><rect x="1878.9" y="203" width="2.9" height="31" fill="#557aeb"/><rect x="1878.9" y="234" width="2.9" height="41" fill="#dcd846"/><rect x="1881.7" y="197" width="2.9" height="37" fill="#3fb1e7"/><rect x="1881.7" y="234" width="2.9" height="39" fill="#d1df4a"/><rect x="1884.5" y="189" width="2.9" height="45" fill="#3bc6d5"/><rect x="1884.5" y="234" width="2.9" height="49" fill="#c7e54e"/><rect x="1887.2" y="208" width="2.9" height="26" fill="#596fe2"/><rect x="1887.2" y="234" width="2.9" height="49" fill="#f78233"/><rect x="1890.0" y="193" width="2.9" height="41" fill="#469ef0"/><rect x="1890.0" y="234" width="2.9" height="25" fill="#f7b63c"/><rect x="1892.7" y="196" width="2.9" height="38" fill="#5282ef"/><rect x="1892.7" y="234" width="2.9" height="27" fill="#f78b35"/><rect x="1895.5" y="218" width="2.9" height="16" fill="#3cd1c8"/><rect x="1895.5" y="234" width="2.9" height="20" fill="#d5dd49"/><rect x="1898.3" y="223" width="2.9" height="11" fill="#3dd3c5"/><rect x="1898.3" y="234" width="2.9" height="44" fill="#c6e54e"/><rect x="1901.0" y="214" width="2.9" height="20" fill="#5b52b5"/><rect x="1901.0" y="234" width="2.9" height="49" fill="#60f28b"/><rect x="1903.8" y="213" width="2.9" height="21" fill="#d5dd49"/><rect x="1903.8" y="234" width="2.9" height="43" fill="#f79937"/><rect x="1906.5" y="205" width="2.9" height="29" fill="#4de9a0"/><rect x="1906.5" y="234" width="2.9" height="11" fill="#f5bd3e"/><rect x="1909.3" y="203" width="2.9" height="31" fill="#f5bd3e"/><rect x="1909.3" y="234" width="2.9" height="28" fill="#83f66f"/><rect x="1912.1" y="193" width="2.9" height="41" fill="#3fb3e6"/><rect x="1912.1" y="234" width="2.9" height="31" fill="#e9cc42"/><rect x="1914.8" y="205" width="2.9" height="29" fill="#4996f1"/><rect x="1914.8" y="234" width="2.9" height="36" fill="#53ed98"/><rect x="1917.6" y="201" width="2.9" height="33" fill="#f7aa3a"/><rect x="1917.6" y="234" width="2.9" height="42" fill="#75f579"/><rect x="1920.3" y="200" width="2.9" height="34" fill="#4898f1"/><rect x="1920.3" y="234" width="2.9" height="27" fill="#d9da47"/><rect x="1923.1" y="188" width="2.9" height="46" fill="#f7ab3a"/><rect x="1923.1" y="234" width="2.9" height="23" fill="#bcea52"/><rect x="1925.9" y="194" width="2.9" height="40" fill="#41abea"/><rect x="1925.9" y="234" width="2.9" height="29" fill="#56ee95"/><rect x="1928.6" y="202" width="2.9" height="32" fill="#3bc5d6"/><rect x="1928.6" y="234" width="2.9" height="30" fill="#a52a1d"/><rect x="1931.4" y="204" width="2.9" height="30" fill="#d6dd48"/><rect x="1931.4" y="234" width="2.9" height="22" fill="#f79c37"/><rect x="1934.1" y="196" width="2.9" height="38" fill="#5b55ba"/><rect x="1934.1" y="234" width="2.9" height="25" fill="#82f66f"/><rect x="1936.9" y="208" width="2.9" height="26" fill="#a3f25d"/><rect x="1936.9" y="234" width="2.9" height="34" fill="#f7a038"/><rect x="1939.7" y="209" width="2.9" height="25" fill="#42deb5"/><rect x="1939.7" y="234" width="2.9" height="49" fill="#5af091"/><rect x="1942.4" y="206" width="2.9" height="28" fill="#acef59"/><rect x="1942.4" y="234" width="2.9" height="27" fill="#6ef57e"/><rect x="1945.2" y="206" width="2.0" height="28" fill="#6cf47f"/><rect x="1945.2" y="234" width="2.0" height="30" fill="#b1ee57"/><rect x="1947.9" y="200" width="2.9" height="34" fill="#42deb5"/><rect x="1947.9" y="234" width="2.9" height="48" fill="#f7af3b"/><rect x="1950.7" y="197" width="2.9" height="37" fill="#52ec9a"/><rect x="1950.7" y="234" width="2.9" height="36" fill="#f6ba3d"/><rect x="1953.5" y="195" width="2.9" height="39" fill="#3cbedd"/><rect x="1953.5" y="234" width="2.9" height="30" fill="#a3f25d"/><rect x="1956.2" y="210" width="2.9" height="24" fill="#3bc6d5"/><rect x="1956.2" y="234" width="2.9" height="39" fill="#e8ce42"/><rect x="1959.0" y="217" width="2.9" height="17" fill="#41aaeb"/><rect x="1959.0" y="234" width="2.9" height="34" fill="#f79937"/><rect x="1961.7" y="216" width="2.9" height="18" fill="#3bcad0"/><rect x="1961.7" y="234" width="2.9" height="36" fill="#e5d143"/><rect x="1964.5" y="215" width="2.9" height="19" fill="#8bf56a"/><rect x="1964.5" y="234" width="2.9" height="26" fill="#e3d244"/><rect x="1967.3" y="195" width="2.0" height="39" fill="#41ddb8"/><rect x="1967.3" y="234" width="2.0" height="29" fill="#f7b33b"/><rect x="1970.0" y="185" width="2.0" height="49" fill="#68f482"/><rect x="1970.0" y="234" width="2.0" height="49" fill="#7ef672"/><rect x="1972.8" y="191" width="2.9" height="43" fill="#6ff57d"/><rect x="1972.8" y="234" width="2.9" height="24" fill="#f06f30"/><rect x="1975.5" y="200" width="2.9" height="34" fill="#5df18d"/><rect x="1975.5" y="234" width="2.9" height="44" fill="#d6dd48"/><rect x="1978.3" y="205" width="2.9" height="29" fill="#7ef672"/><rect x="1978.3" y="234" width="2.9" height="33" fill="#f7a639"/><rect x="1981.1" y="196" width="2.9" height="38" fill="#7cf674"/><rect x="1981.1" y="234" width="2.9" height="20" fill="#f78734"/><rect x="1983.8" y="200" width="2.9" height="34" fill="#45e3ad"/><rect x="1983.8" y="234" width="2.9" height="29" fill="#f79236"/><rect x="1986.6" y="215" width="2.9" height="19" fill="#94f465"/><rect x="1986.6" y="234" width="2.9" height="41" fill="#f78834"/><rect x="1989.3" y="219" width="2.9" height="15" fill="#bde952"/><rect x="1989.3" y="234" width="2.9" height="22" fill="#73f57a"/><rect x="1992.1" y="213" width="2.9" height="21" fill="#99f362"/><rect x="1992.1" y="234" width="2.9" height="34" fill="#8bf56a"/><rect x="1994.9" y="199" width="2.9" height="35" fill="#61f289"/><rect x="1994.9" y="234" width="2.9" height="42" fill="#62f288"/><rect x="1997.6" y="206" width="2.9" height="28" fill="#f7aa3a"/><rect x="1997.6" y="234" width="2.9" height="39" fill="#f4be3e"/><rect x="2000.4" y="209" width="2.9" height="25" fill="#99f362"/><rect x="2000.4" y="234" width="2.9" height="37" fill="#b7ec54"/><rect x="2003.1" y="225" width="2.9" height="9" fill="#45e3ad"/><rect x="2003.1" y="234" width="2.9" height="32" fill="#f6bb3d"/><rect x="2005.9" y="207" width="2.9" height="27" fill="#e4d143"/><rect x="2005.9" y="234" width="2.9" height="27" fill="#f2c13f"/><rect x="2008.7" y="206" width="2.9" height="28" fill="#5cf08e"/><rect x="2008.7" y="234" width="2.9" height="18" fill="#53ed98"/><rect x="2011.4" y="198" width="2.9" height="36" fill="#b1ee57"/><rect x="2011.4" y="234" width="2.9" height="25" fill="#f2c23f"/><rect x="2014.2" y="197" width="2.9" height="37" fill="#55ee96"/><rect x="2014.2" y="234" width="2.9" height="25" fill="#9ef360"/><rect x="2016.9" y="205" width="2.9" height="29" fill="#eec740"/><rect x="2016.9" y="234" width="2.9" height="28" fill="#58ef92"/><rect x="2019.7" y="208" width="2.9" height="26" fill="#eec640"/><rect x="2019.7" y="234" width="2.9" height="23" fill="#a0281c"/><rect x="2022.5" y="213" width="2.0" height="21" fill="#a8f05b"/><rect x="2022.5" y="234" width="2.0" height="30" fill="#e6d043"/><rect x="2025.2" y="219" width="2.9" height="15" fill="#a0f25e"/><rect x="2025.2" y="234" width="2.9" height="41" fill="#f6bc3d"/><rect x="2185.4" y="220" width="2.9" height="14" fill="#b4ed55"/><rect x="2185.4" y="234" width="2.9" height="26" fill="#d9db47"/><rect x="2188.1" y="223" width="2.9" height="11" fill="#90f567"/><rect x="2188.1" y="234" width="2.9" height="27" fill="#48e6a8"/><rect x="2190.9" y="218" width="2.9" height="16" fill="#f79036"/><rect x="2190.9" y="234" width="2.9" height="32" fill="#b1ee56"/><rect x="2193.6" y="208" width="2.9" height="26" fill="#ec682f"/><rect x="2193.6" y="234" width="2.9" height="14" fill="#3ed7c0"/><rect x="2196.4" y="206" width="2.9" height="28" fill="#cae44d"/><rect x="2196.4" y="234" width="2.9" height="24" fill="#7cf674"/><rect x="2199.2" y="207" width="2.9" height="27" fill="#c8e54d"/><rect x="2199.2" y="234" width="2.9" height="24" fill="#b2ee56"/><rect x="2201.9" y="211" width="2.0" height="23" fill="#f7b83c"/><rect x="2201.9" y="234" width="2.0" height="27" fill="#73f57a"/><rect x="2204.7" y="206" width="2.0" height="28" fill="#f4be3e"/><rect x="2204.7" y="234" width="2.0" height="34" fill="#69f482"/><rect x="2207.4" y="213" width="2.9" height="21" fill="#a3f15d"/><rect x="2207.4" y="234" width="2.9" height="25" fill="#baeb53"/><rect x="2210.2" y="216" width="2.9" height="18" fill="#97f463"/><rect x="2210.2" y="234" width="2.9" height="21" fill="#59ef92"/><rect x="2213.0" y="210" width="2.9" height="24" fill="#8ff568"/><rect x="2213.0" y="234" width="2.9" height="22" fill="#53ed98"/><rect x="2215.7" y="221" width="2.0" height="13" fill="#ed6a2f"/><rect x="2215.7" y="234" width="2.0" height="21" fill="#d2df4a"/><rect x="2218.5" y="221" width="2.9" height="13" fill="#f78e35"/><rect x="2218.5" y="234" width="2.9" height="23" fill="#53ed99"/><rect x="2221.2" y="221" width="2.9" height="13" fill="#e9cd42"/><rect x="2221.2" y="234" width="2.9" height="25" fill="#3fdabc"/><rect x="2224.0" y="222" width="2.9" height="12" fill="#b6ec55"/><rect x="2224.0" y="234" width="2.9" height="20" fill="#43dfb3"/><rect x="2226.8" y="217" width="2.9" height="17" fill="#efc640"/><rect x="2226.8" y="234" width="2.9" height="28" fill="#3dd5c2"/><rect x="2229.5" y="227" width="2.9" height="7" fill="#d8db48"/><rect x="2229.5" y="234" width="2.9" height="15" fill="#8df568"/><rect x="2232.3" y="223" width="2.9" height="11" fill="#f0c43f"/><rect x="2232.3" y="234" width="2.9" height="15" fill="#7df672"/><rect x="2235.0" y="218" width="2.9" height="16" fill="#f78033"/><rect x="2235.0" y="234" width="2.9" height="22" fill="#6df47f"/><rect x="2237.8" y="217" width="2.9" height="17" fill="#db542b"/><rect x="2237.8" y="234" width="2.9" height="18" fill="#bcea52"/><rect x="2240.6" y="214" width="2.0" height="20" fill="#89f56b"/><rect x="2240.6" y="234" width="2.0" height="12" fill="#a0281c"/><rect x="2243.3" y="216" width="2.9" height="18" fill="#5c60cf"/><rect x="2243.3" y="234" width="2.9" height="16" fill="#adef59"/><rect x="2246.1" y="222" width="2.9" height="12" fill="#e8632e"/><rect x="2246.1" y="234" width="2.9" height="5" fill="#41ddb7"/><rect x="2248.8" y="222" width="2.9" height="12" fill="#e7cf43"/><rect x="2248.8" y="234" width="2.9" height="18" fill="#44e1b0"/><rect x="2251.6" y="210" width="2.9" height="24" fill="#f79f38"/><rect x="2251.6" y="234" width="2.9" height="26" fill="#83f66e"/><rect x="2254.4" y="207" width="2.9" height="27" fill="#e7622e"/><rect x="2254.4" y="234" width="2.9" height="20" fill="#4de9a0"/><rect x="2257.1" y="205" width="2.9" height="29" fill="#edc941"/><rect x="2257.1" y="234" width="2.9" height="27" fill="#3ed8bf"/><rect x="2259.9" y="206" width="2.9" height="28" fill="#f79a37"/><rect x="2259.9" y="234" width="2.9" height="19" fill="#66f384"/><rect x="2262.6" y="209" width="2.9" height="25" fill="#b0ee57"/><rect x="2262.6" y="234" width="2.9" height="26" fill="#5ff28b"/><rect x="2265.4" y="218" width="2.9" height="16" fill="#f7b43c"/><rect x="2265.4" y="234" width="2.9" height="21" fill="#bee951"/><rect x="2268.2" y="212" width="2.9" height="22" fill="#f79837"/><rect x="2268.2" y="234" width="2.9" height="19" fill="#50eb9d"/><rect x="2270.9" y="214" width="2.9" height="20" fill="#f57932"/><rect x="2270.9" y="234" width="2.9" height="21" fill="#64f386"/><rect x="2273.7" y="228" width="2.9" height="6" fill="#e9652e"/><rect x="2273.7" y="234" width="2.9" height="15" fill="#72f57b"/><rect x="2276.4" y="216" width="2.9" height="18" fill="#f37431"/><rect x="2276.4" y="234" width="2.9" height="21" fill="#3fd8be"/><rect x="2279.2" y="217" width="2.9" height="17" fill="#e25b2c"/><rect x="2279.2" y="234" width="2.9" height="23" fill="#afee57"/><rect x="2282.0" y="215" width="2.9" height="19" fill="#f5bc3d"/><rect x="2282.0" y="234" width="2.9" height="24" fill="#90f567"/><rect x="2284.7" y="206" width="2.9" height="28" fill="#f79a37"/><rect x="2284.7" y="234" width="2.9" height="14" fill="#62f288"/><rect x="2287.5" y="207" width="2.9" height="27" fill="#c0e850"/><rect x="2287.5" y="234" width="2.9" height="11" fill="#a52a1c"/><rect x="2290.2" y="212" width="2.9" height="22" fill="#eec640"/><rect x="2290.2" y="234" width="2.9" height="19" fill="#55ee96"/><rect x="2293.0" y="212" width="2.9" height="22" fill="#f17130"/><rect x="2293.0" y="234" width="2.9" height="17" fill="#c1e850"/><rect x="2295.8" y="222" width="2.0" height="12" fill="#e8622e"/><rect x="2295.8" y="234" width="2.0" height="17" fill="#b1ee57"/><rect x="2298.5" y="223" width="2.0" height="11" fill="#b8eb54"/><rect x="2298.5" y="234" width="2.0" height="26" fill="#71f57b"/><rect x="2301.3" y="225" width="2.0" height="9" fill="#d5dd49"/><rect x="2301.3" y="234" width="2.0" height="21" fill="#50eb9d"/><rect x="2304.0" y="220" width="2.0" height="14" fill="#eb672f"/><rect x="2304.0" y="234" width="2.0" height="18" fill="#43e0b3"/><rect x="2306.8" y="221" width="2.0" height="13" fill="#5b54b9"/><rect x="2306.8" y="234" width="2.0" height="29" fill="#9bf361"/><rect x="2309.6" y="221" width="2.9" height="13" fill="#f78333"/><rect x="2309.6" y="234" width="2.9" height="13" fill="#7ef672"/><rect x="2312.3" y="222" width="2.9" height="12" fill="#f1c43f"/><rect x="2312.3" y="234" width="2.9" height="16" fill="#4ce8a3"/><rect x="2315.1" y="212" width="2.9" height="22" fill="#f7b83c"/><rect x="2315.1" y="234" width="2.9" height="21" fill="#d6dc48"/><rect x="2317.8" y="218" width="2.0" height="16" fill="#e45e2d"/><rect x="2317.8" y="234" width="2.0" height="27" fill="#d7dc48"/><rect x="2320.6" y="215" width="2.9" height="19" fill="#efc540"/><rect x="2320.6" y="234" width="2.9" height="22" fill="#8cf569"/><rect x="2323.4" y="213" width="2.0" height="21" fill="#f3c03e"/><rect x="2323.4" y="234" width="2.0" height="19" fill="#bf3b24"/><rect x="2326.1" y="213" width="2.9" height="21" fill="#f57832"/><rect x="2326.1" y="234" width="2.9" height="20" fill="#a0f25f"/><rect x="2328.9" y="215" width="2.9" height="19" fill="#8cf569"/><rect x="2328.9" y="234" width="2.9" height="19" fill="#b5ec55"/><rect x="2331.6" y="217" width="2.9" height="17" fill="#7ef672"/><rect x="2331.6" y="234" width="2.9" height="24" fill="#b0ee57"/><rect x="2334.4" y="220" width="2.9" height="14" fill="#eacc42"/><rect x="2334.4" y="234" width="2.9" height="28" fill="#50eb9d"/><rect x="2337.2" y="217" width="2.9" height="17" fill="#f78333"/><rect x="2337.2" y="234" width="2.9" height="29" fill="#5df18d"/><rect x="2339.9" y="220" width="2.9" height="14" fill="#ef6c30"/><rect x="2339.9" y="234" width="2.9" height="22" fill="#4ae7a5"/><rect x="2342.7" y="218" width="2.9" height="16" fill="#f78133"/><rect x="2342.7" y="234" width="2.9" height="12" fill="#82f66f"/><rect x="2345.4" y="215" width="2.0" height="19" fill="#da522a"/><rect x="2345.4" y="234" width="2.0" height="22" fill="#63f387"/><rect x="2348.2" y="217" width="2.9" height="17" fill="#f78233"/><rect x="2348.2" y="234" width="2.9" height="22" fill="#b3ed56"/><rect x="2351.0" y="218" width="2.9" height="16" fill="#5a4fae"/><rect x="2351.0" y="234" width="2.9" height="28" fill="#76f578"/><rect x="2353.7" y="206" width="2.0" height="28" fill="#a0f25e"/><rect x="2353.7" y="234" width="2.0" height="27" fill="#4ce9a1"/><rect x="2356.5" y="218" width="2.9" height="16" fill="#a0f25f"/><rect x="2356.5" y="234" width="2.9" height="33" fill="#a5f15c"/><rect x="2359.2" y="221" width="2.9" height="13" fill="#f79136"/><rect x="2359.2" y="234" width="2.9" height="14" fill="#d2df4a"/><rect x="2362.0" y="219" width="2.9" height="15" fill="#8df569"/><rect x="2362.0" y="234" width="2.9" height="30" fill="#4ae7a5"/><rect x="2364.8" y="216" width="2.9" height="18" fill="#f4be3e"/><rect x="2364.8" y="234" width="2.9" height="26" fill="#82f66f"/><rect x="2367.5" y="213" width="2.0" height="21" fill="#b6ec55"/><rect x="2367.5" y="234" width="2.0" height="21" fill="#41ddb7"/><rect x="2370.3" y="218" width="2.0" height="16" fill="#d1e04a"/><rect x="2370.3" y="234" width="2.0" height="20" fill="#87f56c"/><rect x="2373.0" y="223" width="2.0" height="11" fill="#f37431"/><rect x="2373.0" y="234" width="2.0" height="21" fill="#74f579"/><rect x="2375.8" y="209" width="2.9" height="25" fill="#e0d545"/><rect x="2375.8" y="234" width="2.9" height="22" fill="#3fdabb"/><rect x="2378.6" y="213" width="2.9" height="21" fill="#b5ec55"/><rect x="2378.6" y="234" width="2.9" height="21" fill="#b6ec55"/><rect x="2381.3" y="214" width="2.9" height="20" fill="#cae34d"/><rect x="2381.3" y="234" width="2.9" height="21" fill="#3fd9bd"/><rect x="2384.1" y="222" width="2.9" height="12" fill="#cde24b"/><rect x="2384.1" y="234" width="2.9" height="21" fill="#61f289"/><rect x="2386.8" y="223" width="2.0" height="11" fill="#d1e04a"/><rect x="2386.8" y="234" width="2.0" height="19" fill="#cce34c"/><rect x="2389.6" y="216" width="2.9" height="18" fill="#f2c23f"/><rect x="2389.6" y="234" width="2.9" height="17" fill="#d8db48"/><rect x="2392.4" y="215" width="2.9" height="19" fill="#a4f15c"/><rect x="2392.4" y="234" width="2.9" height="26" fill="#d2df4a"/><rect x="2395.1" y="219" width="2.9" height="15" fill="#f0c43f"/><rect x="2395.1" y="234" width="2.9" height="27" fill="#cde24b"/><rect x="2397.9" y="221" width="2.9" height="13" fill="#f7b43c"/><rect x="2397.9" y="234" width="2.9" height="22" fill="#94f465"/><rect x="2400.6" y="224" width="2.9" height="10" fill="#de572b"/><rect x="2400.6" y="234" width="2.9" height="21" fill="#56ee95"/><rect x="2403.4" y="218" width="2.9" height="16" fill="#f78033"/><rect x="2403.4" y="234" width="2.9" height="30" fill="#52ec99"/><rect x="2406.2" y="228" width="2.9" height="6" fill="#efc540"/><rect x="2406.2" y="234" width="2.9" height="19" fill="#77f577"/><rect x="2408.9" y="222" width="2.0" height="12" fill="#b4ed56"/><rect x="2408.9" y="234" width="2.0" height="22" fill="#bde952"/><rect x="2411.7" y="221" width="2.9" height="13" fill="#f79536"/><rect x="2411.7" y="234" width="2.9" height="12" fill="#b8eb54"/><rect x="2414.4" y="219" width="2.9" height="15" fill="#e8622e"/><rect x="2414.4" y="234" width="2.9" height="21" fill="#3ed7c0"/><rect x="2417.2" y="225" width="2.9" height="9" fill="#e55f2d"/><rect x="2417.2" y="234" width="2.9" height="12" fill="#97f463"/><rect x="2420.0" y="208" width="2.0" height="26" fill="#cce34c"/><rect x="2420.0" y="234" width="2.0" height="16" fill="#4ae7a5"/><rect x="2422.7" y="215" width="2.9" height="19" fill="#f79136"/><rect x="2422.7" y="234" width="2.9" height="16" fill="#40dbba"/><rect x="2425.5" y="210" width="2.9" height="24" fill="#e35d2d"/><rect x="2425.5" y="234" width="2.9" height="13" fill="#96f464"/><rect x="2428.2" y="211" width="2.9" height="23" fill="#f78033"/><rect x="2428.2" y="234" width="2.9" height="18" fill="#4feb9d"/><rect x="2431.0" y="218" width="2.0" height="16" fill="#c3e74f"/><rect x="2431.0" y="234" width="2.0" height="18" fill="#4ae7a4"/><rect x="2433.8" y="222" width="2.0" height="12" fill="#e9642e"/><rect x="2433.8" y="234" width="2.0" height="30" fill="#57ef93"/><rect x="2436.5" y="217" width="2.9" height="17" fill="#5a69dc"/><rect x="2436.5" y="234" width="2.9" height="18" fill="#7ef672"/><rect x="2659.4" y="221" width="2.9" height="13" fill="#9bf361"/><rect x="2659.4" y="234" width="2.9" height="28" fill="#e9cd42"/><rect x="2662.1" y="215" width="2.9" height="19" fill="#b8eb54"/><rect x="2662.1" y="234" width="2.9" height="26" fill="#f78534"/><rect x="2664.9" y="217" width="2.9" height="17" fill="#d5dd49"/><rect x="2664.9" y="234" width="2.9" height="27" fill="#aa2d1e"/><rect x="2667.7" y="214" width="2.9" height="20" fill="#f3c03e"/><rect x="2667.7" y="234" width="2.9" height="16" fill="#ae2f1f"/><rect x="2670.4" y="207" width="2.9" height="27" fill="#8bf56a"/><rect x="2670.4" y="234" width="2.9" height="21" fill="#d44d29"/><rect x="2673.2" y="213" width="2.9" height="21" fill="#f7ae3b"/><rect x="2673.2" y="234" width="2.9" height="33" fill="#f7b53c"/><rect x="2675.9" y="219" width="2.9" height="15" fill="#76f578"/><rect x="2675.9" y="234" width="2.9" height="28" fill="#f79136"/><rect x="2678.7" y="212" width="2.9" height="22" fill="#f7b53c"/><rect x="2678.7" y="234" width="2.9" height="27" fill="#f79a37"/><rect x="2681.5" y="213" width="2.9" height="21" fill="#f4bf3e"/><rect x="2681.5" y="234" width="2.9" height="18" fill="#e5602d"/><rect x="2684.2" y="212" width="2.9" height="22" fill="#d5dd49"/><rect x="2684.2" y="234" width="2.9" height="23" fill="#c1e850"/><rect x="2687.0" y="202" width="2.0" height="32" fill="#f79136"/><rect x="2687.0" y="234" width="2.0" height="33" fill="#f78f35"/><rect x="2689.7" y="206" width="2.9" height="28" fill="#93f465"/><rect x="2689.7" y="234" width="2.9" height="31" fill="#be3a23"/><rect x="2692.5" y="208" width="2.9" height="26" fill="#f79f38"/><rect x="2692.5" y="234" width="2.9" height="23" fill="#e0592c"/><rect x="2695.3" y="216" width="2.9" height="18" fill="#f1c43f"/><rect x="2695.3" y="234" width="2.9" height="25" fill="#f7a138"/><rect x="2698.0" y="226" width="2.9" height="8" fill="#d0e04a"/><rect x="2698.0" y="234" width="2.9" height="26" fill="#f7a93a"/><rect x="2700.8" y="225" width="2.9" height="9" fill="#f7ab3a"/><rect x="2700.8" y="234" width="2.9" height="30" fill="#f6ba3d"/><rect x="2703.5" y="220" width="2.0" height="14" fill="#f4be3e"/><rect x="2703.5" y="234" width="2.0" height="20" fill="#edc840"/><rect x="2706.3" y="221" width="2.9" height="13" fill="#61f289"/><rect x="2706.3" y="234" width="2.9" height="31" fill="#f79f38"/><rect x="2709.1" y="215" width="2.9" height="19" fill="#f06e30"/><rect x="2709.1" y="234" width="2.9" height="32" fill="#e8cd42"/><rect x="2711.8" y="210" width="2.9" height="24" fill="#c1e850"/><rect x="2711.8" y="234" width="2.9" height="15" fill="#f47531"/><rect x="2714.6" y="216" width="2.9" height="18" fill="#f7b33b"/><rect x="2714.6" y="234" width="2.9" height="18" fill="#f77c32"/><rect x="2717.3" y="214" width="2.9" height="20" fill="#f7ae3b"/><rect x="2717.3" y="234" width="2.9" height="16" fill="#ab2e1e"/><rect x="2720.1" y="217" width="2.9" height="17" fill="#f1c33f"/><rect x="2720.1" y="234" width="2.9" height="21" fill="#b73522"/><rect x="2722.9" y="218" width="2.9" height="16" fill="#eec740"/><rect x="2722.9" y="234" width="2.9" height="24" fill="#f79536"/><rect x="2725.6" y="210" width="2.9" height="24" fill="#f7a739"/><rect x="2725.6" y="234" width="2.9" height="22" fill="#cfe14b"/><rect x="2728.4" y="210" width="2.9" height="24" fill="#564796"/><rect x="2728.4" y="234" width="2.9" height="17" fill="#f7ad3a"/><rect x="2731.1" y="210" width="2.9" height="24" fill="#f78c35"/><rect x="2731.1" y="234" width="2.9" height="26" fill="#af301f"/><rect x="2733.9" y="204" width="2.9" height="30" fill="#f7ab3a"/><rect x="2733.9" y="234" width="2.9" height="30" fill="#f3c13e"/><rect x="2736.7" y="206" width="2.0" height="28" fill="#91f566"/><rect x="2736.7" y="234" width="2.0" height="14" fill="#e15b2c"/><rect x="2739.4" y="210" width="2.9" height="24" fill="#acef59"/><rect x="2739.4" y="234" width="2.9" height="27" fill="#f79937"/><rect x="2753.2" y="185" width="2.9" height="49" fill="#4e8cf1"/><rect x="2753.2" y="234" width="2.9" height="41" fill="#99251c"/><rect x="1730" y="185" width="14" height="49" fill="#2d1340"/><rect x="1092" y="185" width="2.5" height="49" fill="#b8f050"/><rect x="1092" y="234" width="2.5" height="49" fill="#700e08"/><rect x="1272" y="185" width="2.5" height="49" fill="#4a80e0"/><rect x="1272" y="234" width="2.5" height="49" fill="#58c0e0"/>
<path d="M662.2 531l.5 -4l.5 9l.5 -12l.5 15l.5 -12l.5 22l.5 -21l.5 7l.5 -14l.5 13l.5 -10l.5 13l.5 -9l.5 8l.5 -7l.5 6l.5 -7l.5 9l.5 -13l.5 11l.5 -8l.5 13l.5 -26l.5 20l.5 -11l.5 16l.5 -14l.5 8l.5 -5l.5 6l.5 -8l.5 16l.5 -16l.5 11l.5 -13l.5 14l.5 -11l.5 7l.5 -6l.5 19l.5 -27l.5 16l.5 -13l.5 10l.5 -13l.5 14l.5 -13l.5 15l.5 -9l.5 8l.5 -11l.5 12l.5 -9l.5 9l.5 -18l.5 17l.5 -7l.5 11l.5 -11l.5 8l.5 -12l.5 14l.5 -25l.5 21l.5 -9l.5 24l.5 -26l.5 18l.5 -15l.5 9l.5 -6l.5 8l.5 -7l.5 6l.5 -6l.5 19l.5 -22l.5 7l.5 -9l.5 9l.5 -11l.5 18l.5 -18l.5 17l.5 -14l.5 9l.5 -14l.5 22l.5 -16l.5 9l.5 -9l.5 11l.5 -8l.5 7l.5 -11l.5 18l.5 -26l.5 19l.5 -8M964.0 531l.5 -3l.5 7l.5 -8l.5 16l.5 -25l.5 21l.5 -18l.5 13l.5 -10l.5 10l.5 -14l.5 15l.5 -11l.5 13l.5 -11l.5 12l.5 -15l.5 11l.5 -10l.5 10l.5 -8l.5 11l.5 -8l.5 6l.5 -7l.5 18l.5 -19l.5 9l.5 -11l.5 8l.5 -5l.5 18l.5 -22l.5 12l.5 -12l.5 11l.5 -8l.5 10l.5 -14l.5 14l.5 -7l.5 15l.5 -14l.5 8l.5 -13l.5 15l.5 -14l.5 12l.5 -10l.5 5l.5 -6l.5 7l.5 -9l.5 12l.5 -13l.5 8l.5 -9l.5 12l.5 -13l.5 9l.5 -7l.5 7l.5 -6l.5 8l.5 -11l.5 12l.5 -9l.5 9l.5 -8l.5 5l.5 -15l.5 23l.5 -16l.5 13l.5 -9l.5 6l.5 -10l.5 14l.5 -16l.5 11l.5 -11l.5 17l.5 -12l.5 6l.5 -6l.5 8l.5 -7l.5 14l.5 -19l.5 12l.5 -7l.5 6l.5 -22l.5 24l.5 -17l.5 21l.5 -13l.5 15l.5 -13l.5 10l.5 -14l.5 9l.5 -11l.5 20l.5 -26l.5 26l.5 -17l.5 10l.5 -22l.5 25l.5 -12l.5 12l.5 -12l.5 8l.5 -9l.5 8l.5 -12l.5 15l.5 -10l.5 16l.5 -17l.5 17l.5 -18l.5 9l.5 -6l.5 5l.5 -9l.5 10l.5 -17l.5 16l.5 -12l.5 17l.5 -15l.5 17l.5 -17l.5 10l.5 -19l.5 22l.5 -9l.5 6l.5 -10l.5 13l.5 -7l.5 9l.5 -11l.5 11l.5 -7l.5 10l.5 -11l.5 9l.5 -8l.5 11M1043.0 531l.5 -6l.5 13l.5 -11l.5 7l.5 -11l.5 11l.5 -13l.5 20l.5 -15l.5 13l.5 -9l.5 6l.5 -9M1053.0 531l.5 -4l.5 13l.5 -13l.5 22l.5 -19l.5 6l.5 -10l.5 11l.5 -11l.5 10l.5 -7l.5 7l.5 -10l.5 8l.5 -10l.5 22l.5 -20l.5 11l.5 -10l.5 6l.5 -11l.5 11l.5 -13l.5 17l.5 -11l.5 6l.5 -5l.5 6l.5 -7l.5 9l.5 -8l.5 5l.5 -6l.5 6l.5 -6l.5 13l.5 -15l.5 9l.5 -15l.5 19l.5 -9l.5 5l.5 -5l.5 8l.5 -9l.5 13l.5 -12l.5 14l.5 -12l.5 5l.5 -7l.5 21l.5 -19l.5 7l.5 -9l.5 9l.5 -9l.5 12l.5 -10l.5 15l.5 -28l.5 23l.5 -14l.5 8l.5 -12l.5 15l.5 -9l.5 7l.5 -13l.5 14l.5 -11l.5 11l.5 -21l.5 21l.5 -9l.5 10l.5 -7l.5 13l.5 -24l.5 17l.5 -9l.5 7l.5 -8l.5 8l.5 -11l.5 11l.5 -12l.5 16l.5 -8l.5 6l.5 -11l.5 12l.5 -7l.5 11l.5 -15l.5 11l.5 -9l.5 7l.5 -11l.5 18l.5 -11l.5 7l.5 -6l.5 7l.5 -14l.5 12l.5 -6l.5 5l.5 -6l.5 10l.5 -9l.5 9l.5 -10l.5 8l.5 -20l.5 20l.5 -24l.5 31l.5 -22l.5 13l.5 -14l.5 15l.5 -17l.5 18l.5 -11l.5 7l.5 -11l.5 16l.5 -20l.5 16l.5 -10l.5 14l.5 -20l.5 17l.5 -8l.5 9l.5 -11l.5 12l.5 -12l.5 15l.5 -15l.5 9l.5 -11l.5 9l.5 -6l.5 10l.5 -13l.5 11l.5 -14l.5 14l.5 -7l.5 5l.5 -10l.5 12l.5 -10l.5 8l.5 -9l.5 8l.5 -6l.5 11l.5 -25l.5 20l.5 -7l.5 10l.5 -9l.5 6l.5 -7l.5 8l.5 -7l.5 5l.5 -8l.5 10l.5 -8l.5 16l.5 -17l.5 8l.5 -8l.5 7l.5 -6l.5 7l.5 -21l.5 20l.5 -13l.5 12l.5 -5l.5 9l.5 -11l.5 7l.5 -4l.5 7l.5 -8l.5 5l.5 -9l.5 9l.5 -5l.5 9l.5 -7l.5 7l.5 -7l.5 5l.5 -6l.5 9l.5 -8l.5 10l.5 -10l.5 8l.5 -6l.5 12M1212.0 531l.5 -7l.5 20l.5 -16l.5 8l.5 -11l.5 10l.5 -11l.5 16l.5 -15l.5 8l.5 -7l.5 6l.5 -5l.5 7l.5 -8l.5 12l.5 -10l.5 6l.5 -9l.5 12l.5 -16l.5 18M1233.0 531l.5 -4l.5 12l.5 -13l.5 13l.5 -14l.5 10l.5 -14l.5 12l.5 -8l.5 9l.5 -7l.5 6l.5 -12l.5 11l.5 -6l.5 12M1266.0 531l.5 -6l.5 11l.5 -13l.5 11l.5 -9l.5 10l.5 -8l.5 7l.5 -7l.5 6l.5 -11l.5 14l.5 -13l.5 20l.5 -20l.5 12l.5 -10l.5 16l.5 -19l.5 12l.5 -8l.5 10l.5 -12l.5 13l.5 -13l.5 10l.5 -19l.5 21l.5 -11l.5 12l.5 -12l.5 12l.5 -10l.5 16l.5 -19l.5 17l.5 -15l.5 7l.5 -7l.5 8l.5 -6l.5 4l.5 -6l.5 8l.5 -22l.5 28l.5 -16l.5 15l.5 -10l.5 10l.5 -15l.5 18l.5 -13l.5 9l.5 -9l.5 8l.5 -12l.5 9l.5 -6l.5 9l.5 -12l.5 9l.5 -6l.5 10l.5 -13l.5 11l.5 -10l.5 9l.5 -19l.5 23l.5 -10l.5 5l.5 -18l.5 20l.5 -9l.5 10l.5 -22l.5 23l.5 -12l.5 17l.5 -26l.5 20l.5 -12l.5 10M1311.5 531l.5 -2l.5 5l.5 -11l.5 14l.5 -21l.5 24l.5 -11l.5 6M1440.0 531l.5 -7l.5 14l.5 -10l.5 7l.5 -8l.5 8l.5 -10l.5 10l.5 -13l.5 13l.5 -13l.5 19l.5 -15l.5 10l.5 -9l.5 7l.5 -8l.5 14l.5 -15l.5 9l.5 -10l.5 9l.5 -9l.5 11l.5 -15l.5 29M1486.0 531l.5 -7l.5 9l.5 -5l.5 12l.5 -15l.5 10l.5 -11l.5 13l.5 -9l.5 20l.5 -20l.5 10l.5 -11l.5 10l.5 -10l.5 13l.5 -23l.5 16l.5 -5l.5 19l.5 -20l.5 6l.5 -17l.5 17l.5 -7l.5 11l.5 -10l.5 13l.5 -17l.5 13l.5 -20l.5 21l.5 -16l.5 13l.5 -5l.5 6l.5 -13l.5 13l.5 -11l.5 14l.5 -9l.5 10l.5 -15l.5 15l.5 -13l.5 8l.5 -8l.5 12l.5 -10l.5 8l.5 -12l.5 11l.5 -10l.5 8l.5 -9l.5 10l.5 -12l.5 17l.5 -14l.5 10l.5 -10l.5 12l.5 -18l.5 20l.5 -13l.5 10l.5 -20l.5 19l.5 -6l.5 5l.5 -11l.5 18l.5 -20l.5 16l.5 -18l.5 16l.5 -10l.5 19l.5 -18l.5 10l.5 -12l.5 14l.5 -9l.5 11l.5 -10l.5 19l.5 -20l.5 9l.5 -11l.5 15l.5 -14l.5 8l.5 -10l.5 12l.5 -13l.5 10l.5 -9l.5 8l.5 -8l.5 14l.5 -15l.5 14l.5 -10l.5 4l.5 -10l.5 13l.5 -9l.5 20l.5 -21l.5 9l.5 -6l.5 17l.5 -26l.5 17l.5 -11l.5 12l.5 -10l.5 10l.5 -11l.5 20l.5 -15l.5 4l.5 -8l.5 9l.5 -10l.5 14l.5 -13l.5 5l.5 -6l.5 6l.5 -10l.5 16l.5 -11l.5 20l.5 -26l.5 13l.5 -13l.5 12l.5 -10l.5 8l.5 -8l.5 15l.5 -13l.5 9l.5 -9l.5 9l.5 -7l.5 9l.5 -17l.5 16l.5 -9l.5 9l.5 -13l.5 11l.5 -8l.5 7l.5 -7l.5 19l.5 -21l.5 14l.5 -16l.5 15l.5 -10l.5 10l.5 -9l.5 7l.5 -8l.5 11l.5 -16l.5 10l.5 -7l.5 10l.5 -11l.5 10l.5 -8l.5 6l.5 -7l.5 15l.5 -14l.5 8l.5 -8l.5 10l.5 -6l.5 7l.5 -11l.5 16l.5 -15l.5 13l.5 -8l.5 9l.5 -12l.5 7l.5 -15l.5 17l.5 -13l.5 12l.5 -13l.5 14l.5 -12l.5 15l.5 -11l.5 13l.5 -13l.5 7l.5 -13l.5 16l.5 -10l.5 14l.5 -12l.5 5l.5 -9l.5 12l.5 -8l.5 12l.5 -14l.5 9l.5 -12l.5 11l.5 -8l.5 8l.5 -10l.5 16M1626.5 531l.5 -9l.5 16l.5 -10l.5 11l.5 -11l.5 8l.5 -17l.5 17l.5 -11l.5 9l.5 -7l.5 5l.5 -9l.5 8l.5 -5l.5 10l.5 -20l.5 18l.5 -10l.5 8l.5 -17l.5 19l.5 -14l.5 14l.5 -18l.5 15l.5 -12l.5 10l.5 -7l.5 8l.5 -7l.5 9l.5 -9l.5 10l.5 -14l.5 11l.5 -6l.5 11l.5 -13l.5 10l.5 -12l.5 11l.5 -16l.5 17l.5 -11l.5 14l.5 -10M1695.5 531l.5 -8l.5 14l.5 -9l.5 8l.5 -11l.5 9l.5 -8M1703.0 531l.5 -8l.5 12l.5 -18l.5 25l.5 -13l.5 14l.5 -17M1713.5 531l.5 -6l.5 12l.5 -11l.5 16l.5 -17l.5 15l.5 -13l.5 6l.5 -13l.5 15l.5 -14l.5 12l.5 -13l.5 17l.5 -14l.5 14l.5 -20l.5 20l.5 -10l.5 8l.5 -10l.5 7l.5 -8l.5 21l.5 -19l.5 7l.5 -12l.5 17l.5 -15l.5 12l.5 -12l.5 14l.5 -10l.5 12l.5 -15l.5 9l.5 -8l.5 11l.5 -11l.5 12l.5 -11l.5 8l.5 -8l.5 9l.5 -15l.5 14l.5 -8l.5 7l.5 -7l.5 7l.5 -7l.5 7l.5 -12l.5 15l.5 -11l.5 12l.5 -11l.5 9l.5 -14l.5 17l.5 -12l.5 6l.5 -6l.5 10l.5 -11l.5 7l.5 -7l.5 18l.5 -23l.5 28l.5 -36l.5 26l.5 -10l.5 7l.5 -7l.5 8l.5 -13l.5 15l.5 -15l.5 11l.5 -5l.5 9l.5 -10l.5 10l.5 -11l.5 10l.5 -15l.5 11l.5 -21l.5 24l.5 -13l.5 10l.5 -17l.5 20l.5 -12l.5 13l.5 -11l.5 11l.5 -19l.5 18l.5 -23l.5 20l.5 -11l.5 8l.5 -6l.5 7l.5 -8l.5 9l.5 -10l.5 14l.5 -11l.5 6l.5 -10l.5 10l.5 -7l.5 7l.5 -8l.5 10l.5 -10l.5 14l.5 -11l.5 12l.5 -10l.5 7l.5 -6l.5 11l.5 -11l.5 8l.5 -7l.5 7l.5 -10l.5 11l.5 -15l.5 14l.5 -18l.5 17l.5 -11l.5 7l.5 -7l.5 7l.5 -6l.5 11l.5 -11l.5 7l.5 -14l.5 14l.5 -7l.5 12l.5 -18l.5 13l.5 -7l.5 20l.5 -20l.5 8l.5 -14l.5 20l.5 -15l.5 10l.5 -9l.5 8l.5 -6l.5 5l.5 -12l.5 14l.5 -8l.5 21l.5 -21l.5 14l.5 -15l.5 14l.5 -12l.5 8l.5 -9l.5 15l.5 -12l.5 7l.5 -9l.5 8l.5 -12l.5 11l.5 -11l.5 10l.5 -5l.5 6l.5 -6l.5 16l.5 -29l.5 26l.5 -18l.5 14l.5 -7l.5 7l.5 -9l.5 11l.5 -9l.5 7l.5 -12l.5 10l.5 -7l.5 20l.5 -23l.5 17l.5 -15l.5 7l.5 -11l.5 13l.5 -12l.5 10l.5 -6l.5 8l.5 -10l.5 19l.5 -21l.5 7l.5 -14l.5 14l.5 -4l.5 6l.5 -6l.5 5l.5 -6l.5 6l.5 -6l.5 12l.5 -11l.5 8l.5 -22l.5 20l.5 -8l.5 8l.5 -15l.5 15l.5 -13l.5 28l.5 -23l.5 20l.5 -23l.5 14l.5 -14l.5 17l.5 -18l.5 12l.5 -8l.5 18l.5 -20l.5 11l.5 -8l.5 15l.5 -21l.5 19l.5 -24l.5 23l.5 -12l.5 11l.5 -10l.5 6l.5 -7l.5 14l.5 -19l.5 11l.5 -11l.5 19l.5 -16l.5 8l.5 -9l.5 8l.5 -11l.5 12l.5 -12l.5 13l.5 -12l.5 12l.5 -7l.5 12l.5 -25l.5 22l.5 -6l.5 5l.5 -7l.5 7l.5 -10l.5 16l.5 -20l.5 17l.5 -16l.5 12l.5 -8l.5 7l.5 -5l.5 5l.5 -5l.5 10l.5 -17l.5 12l.5 -14l.5 19l.5 -12l.5 10l.5 -8l.5 8l.5 -13l.5 13l.5 -7l.5 11l.5 -15l.5 11l.5 -11l.5 16l.5 -12l.5 4l.5 -4l.5 6l.5 -6l.5 6l.5 -9l.5 10l.5 -8l.5 8l.5 -13l.5 14l.5 -8l.5 8l.5 -8l.5 13l.5 -21l.5 14l.5 -13l.5 11l.5 -5l.5 9l.5 -12l.5 11l.5 -23l.5 22l.5 -9l.5 8l.5 -8l.5 6l.5 -6l.5 6l.5 -9l.5 13l.5 -13l.5 12l.5 -12l.5 10l.5 -4l.5 9l.5 -14l.5 13l.5 -9l.5 10l.5 -14l.5 14l.5 -9l.5 7l.5 -13l.5 19l.5 -23l.5 20l.5 -13l.5 12l.5 -11l.5 8l.5 -5l.5 5l.5 -20l.5 23l.5 -13l.5 15l.5 -13l.5 12l.5 -22l.5 25l.5 -13l.5 16l.5 -23l.5 15l.5 -8l.5 6l.5 -18l.5 19l.5 -8l.5 8l.5 -6l.5 6l.5 -5l.5 13l.5 -16l.5 9l.5 -16l.5 27l.5 -19l.5 3l.5 -6l.5 9l.5 -17l.5 17l.5 -12l.5 7l.5 -11M2059.0 531l.5 -4l.5 12l.5 -11l.5 7l.5 -7l.5 8l.5 -8l.5 15l.5 -14l.5 9l.5 -10l.5 20l.5 -19l.5 10l.5 -14l.5 21l.5 -24l.5 13l.5 -12l.5 22l.5 -18l.5 5l.5 -8l.5 15l.5 -21l.5 14l.5 -20l.5 21l.5 -6l.5 10l.5 -9l.5 8l.5 -9l.5 8l.5 -15l.5 14l.5 -9l.5 13l.5 -10l.5 9l.5 -22l.5 22l.5 -9l.5 10l.5 -10l.5 10l.5 -13l.5 25l.5 -22l.5 14l.5 -14l.5 10l.5 -8l.5 4l.5 -4l.5 17l.5 -19l.5 17l.5 -15l.5 6l.5 -20l.5 21l.5 -10l.5 9l.5 -8l.5 11l.5 -9l.5 6l.5 -9l.5 10l.5 -10l.5 8l.5 -7l.5 9l.5 -10l.5 9l.5 -11l.5 8l.5 -10l.5 15l.5 -22l.5 17l.5 -6l.5 6l.5 -7l.5 12l.5 -9l.5 14l.5 -15l.5 7l.5 -10l.5 16l.5 -11l.5 7l.5 -9l.5 9l.5 -13l.5 12l.5 -11l.5 15l.5 -8l.5 6l.5 -6l.5 7l.5 -12l.5 12l.5 -9l.5 8l.5 -8l.5 20l.5 -30l.5 16l.5 -8l.5 22l.5 -25l.5 15l.5 -9l.5 8l.5 -8l.5 7l.5 -9l.5 12l.5 -12l.5 5l.5 -8l.5 11l.5 -13l.5 10l.5 -6l.5 17l.5 -20l.5 13l.5 -15l.5 14l.5 -11l.5 8l.5 -4l.5 5l.5 -8l.5 11l.5 -11l.5 10l.5 -10l.5 9l.5 -15l.5 15l.5 -9l.5 12l.5 -13l.5 9l.5 -9l.5 10l.5 -10l.5 13l.5 -13l.5 12l.5 -22l.5 17l.5 -6l.5 8l.5 -9l.5 18l.5 -23l.5 12l.5 -10l.5 10l.5 -7l.5 8l.5 -9l.5 6l.5 -7l.5 10l.5 -13l.5 13l.5 -12l.5 10l.5 -7l.5 8l.5 -11l.5 11l.5 -17l.5 16l.5 -6l.5 20l.5 -19l.5 8l.5 -18l.5 24l.5 -21l.5 17l.5 -9l.5 6l.5 -5l.5 7l.5 -11l.5 13l.5 -9l.5 7l.5 -16l.5 16l.5 -13l.5 14l.5 -10l.5 8l.5 -10l.5 9l.5 -14l.5 16l.5 -10l.5 10l.5 -8l.5 5l.5 -7l.5 7l.5 -5l.5 9l.5 -12l.5 19l.5 -17l.5 9l.5 -11l.5 17l.5 -16l.5 9l.5 -9l.5 6l.5 -8l.5 11l.5 -9l.5 9l.5 -14l.5 16l.5 -12l.5 8l.5 -10l.5 12l.5 -7l.5 20l.5 -20l.5 7l.5 -20l.5 25l.5 -16l.5 14l.5 -11l.5 9l.5 -8l.5 20l.5 -21l.5 17l.5 -15l.5 6l.5 -12l.5 13l.5 -7l.5 9l.5 -10l.5 7l.5 -7l.5 8l.5 -22l.5 29l.5 -14l.5 7l.5 -17l.5 17l.5 -13l.5 13l.5 -7l.5 6l.5 -8l.5 10l.5 -10l.5 15l.5 -13l.5 12l.5 -19l.5 18l.5 -15l.5 11l.5 -5l.5 11l.5 -14l.5 11l.5 -8l.5 5l.5 -5l.5 10l.5 -13l.5 10l.5 -12l.5 10l.5 -9l.5 11l.5 -11l.5 12l.5 -12l.5 9l.5 -10l.5 7l.5 -14l.5 16l.5 -16l.5 16l.5 -6l.5 9l.5 -12l.5 9l.5 -11l.5 10l.5 -8l.5 12l.5 -10l.5 16l.5 -17l.5 10l.5 -13l.5 12l.5 -9l.5 7l.5 -11l.5 13l.5 -13l.5 13l.5 -7l.5 9l.5 -22l.5 20l.5 -8l.5 8l.5 -12l.5 10l.5 -7l.5 7l.5 -10l.5 19l.5 -17l.5 9l.5 -8l.5 11l.5 -14l.5 13l.5 -8l.5 15l.5 -14l.5 9l.5 -10l.5 8l.5 -12l.5 13l.5 -15l.5 16l.5 -9l.5 10l.5 -11l.5 10l.5 -10l.5 17l.5 -15l.5 12l.5 -13l.5 5l.5 -11l.5 12l.5 -10l.5 13l.5 -14l.5 12l.5 -8l.5 20l.5 -26l.5 21l.5 -20l.5 9l.5 -7l.5 7l.5 -5l.5 11l.5 -11l.5 8l.5 -8l.5 16l.5 -15l.5 9l.5 -10l.5 6l.5 -6l.5 6l.5 -10l.5 19l.5 -18l.5 15l.5 -21l.5 21l.5 -16l.5 21l.5 -20l.5 9l.5 -7l.5 14l.5 -15l.5 10l.5 -14l.5 14l.5 -14l.5 9l.5 -7l.5 13l.5 -24l.5 21l.5 -7l.5 10l.5 -13l.5 9l.5 -6l.5 8l.5 -12l.5 9l.5 -7l.5 7l.5 -7l.5 7l.5 -6l.5 13l.5 -25l.5 19l.5 -7l.5 6l.5 -16l.5 16l.5 -5l.5 7l.5 -10l.5 9l.5 -13l.5 18l.5 -15l.5 14l.5 -10l.5 6l.5 -15l.5 15l.5 -8l.5 11l.5 -11l.5 8l.5 -6l.5 10l.5 -13l.5 10l.5 -9l.5 13l.5 -11l.5 6l.5 -8l.5 11l.5 -10l.5 9l.5 -10l.5 8l.5 -6l.5 13l.5 -16l.5 13l.5 -26l.5 27l.5 -12l.5 7l.5 -8l.5 7l.5 -9l.5 8M2498.5 531l.5 -2l.5 9l.5 -12l.5 8l.5 -7l.5 8l.5 -12l.5 18l.5 -15l.5 8l.5 -11l.5 11l.5 -11l.5 17l.5 -10l.5 12l.5 -13l.5 6l.5 -10l.5 10l.5 -8l.5 10l.5 -13l.5 11l.5 -5l.5 15l.5 -17l.5 12l.5 -18l.5 29l.5 -24l.5 13l.5 -11l.5 9l.5 -8l.5 9l.5 -10l.5 13l.5 -17l.5 15l.5 -19l.5 14l.5 -6l.5 12l.5 -15l.5 19l.5 -18l.5 10l.5 -14l.5 11l.5 -12l.5 11l.5 -16l.5 19l.5 -10l.5 8l.5 -12l.5 13l.5 -8l.5 9l.5 -12l.5 11l.5 -5l.5 7l.5 -11l.5 11l.5 -7l.5 4l.5 -5l.5 7l.5 -13l.5 16l.5 -9l.5 12l.5 -18l.5 12l.5 -9l.5 10l.5 -22l.5 22l.5 -7l.5 11l.5 -17l.5 20l.5 -16l.5 13l.5 -12l.5 8l.5 -5l.5 8l.5 -13l.5 11l.5 -9l.5 8l.5 -9l.5 8l.5 -7l.5 14l.5 -28l.5 21l.5 -14l.5 18l.5 -13l.5 12l.5 -15l.5 14l.5 -10l.5 8l.5 -7l.5 11l.5 -9l.5 17l.5 -17l.5 5l.5 -6l.5 5l.5 -8l.5 7l.5 -4l.5 8l.5 -9l.5 11l.5 -17l.5 15l.5 -15l.5 13l.5 -14l.5 18l.5 -10l.5 6l.5 -8l.5 12l.5 -18l.5 24l.5 -20l.5 21l.5 -19l.5 7l.5 -5l.5 7l.5 -13l.5 17l.5 -14l.5 14l.5 -10l.5 6l.5 -7l.5 7l.5 -10l.5 7l.5 -5l.5 13l.5 -14l.5 8l.5 -13M2585.5 531l.5 -5l.5 21l.5 -20l.5 17l.5 -20" stroke="#e08a2e" stroke-width="1.5" fill="none" stroke-linejoin="bevel"/>
<path d="M662.2 622l.5 -5l.5 9l.5 -10l.5 11l.5 -13l.5 16l.5 -13l.5 12l.5 -11l.5 9l.5 -6l.5 9l.5 -11l.5 14l.5 -17l.5 12l.5 -6l.5 11l.5 -15l.5 15l.5 -13l.5 6l.5 -9l.5 8l.5 -8l.5 8l.5 -11l.5 11l.5 -19l.5 22l.5 -11l.5 9l.5 -22l.5 21l.5 -12l.5 12l.5 -10l.5 13l.5 -17l.5 23l.5 -20l.5 13l.5 -22l.5 24l.5 -15l.5 9l.5 -9l.5 10l.5 -13l.5 15l.5 -13l.5 13l.5 -9l.5 10l.5 -12l.5 10l.5 -7l.5 7l.5 -6l.5 6l.5 -6l.5 20l.5 -20l.5 12l.5 -14l.5 12l.5 -10l.5 8l.5 -11l.5 8l.5 -8l.5 12l.5 -12l.5 23l.5 -22l.5 8l.5 -12l.5 11l.5 -9l.5 10l.5 -11l.5 12l.5 -10l.5 10l.5 -7l.5 17l.5 -17l.5 10l.5 -15l.5 12l.5 -9l.5 10l.5 -7l.5 8l.5 -10l.5 11l.5 -10l.5 6l.5 -8M964.0 622l.5 -5l.5 12l.5 -13l.5 13l.5 -19l.5 15l.5 -15l.5 20l.5 -14l.5 10l.5 -19l.5 21l.5 -12l.5 9l.5 -8l.5 10l.5 -8l.5 5l.5 -6l.5 6l.5 -20l.5 34l.5 -20l.5 8l.5 -18l.5 25l.5 -14l.5 6l.5 -21l.5 22l.5 -14l.5 13l.5 -16l.5 16l.5 -5l.5 7l.5 -9l.5 9l.5 -21l.5 27l.5 -12l.5 5l.5 -10l.5 11l.5 -21l.5 21l.5 -11l.5 14l.5 -14l.5 13l.5 -9l.5 8l.5 -14l.5 13l.5 -9l.5 7l.5 -6l.5 6l.5 -7l.5 13l.5 -13l.5 12l.5 -18l.5 26l.5 -22l.5 11l.5 -15l.5 17l.5 -14l.5 10l.5 -12l.5 17l.5 -12l.5 9l.5 -14l.5 16l.5 -14l.5 19l.5 -23l.5 15l.5 -8l.5 11l.5 -12l.5 9l.5 -7l.5 6l.5 -10l.5 16l.5 -15l.5 10l.5 -6l.5 10l.5 -10l.5 5l.5 -8l.5 12l.5 -13l.5 17l.5 -14l.5 21l.5 -22l.5 14l.5 -14l.5 7l.5 -12l.5 18l.5 -14l.5 13l.5 -11l.5 5l.5 -8l.5 8l.5 -13l.5 15l.5 -11l.5 10l.5 -8l.5 7l.5 -10l.5 13l.5 -10l.5 19l.5 -26l.5 16l.5 -12l.5 11l.5 -6l.5 21l.5 -23l.5 23l.5 -28l.5 15l.5 -9l.5 10l.5 -21l.5 21l.5 -19l.5 23l.5 -15l.5 10l.5 -9l.5 9l.5 -24l.5 23l.5 -5l.5 6l.5 -16l.5 26l.5 -15l.5 8l.5 -6l.5 7M1043.0 622l.5 -5l.5 15l.5 -18l.5 14l.5 -10l.5 16l.5 -25l.5 19l.5 -9l.5 10l.5 -12l.5 9l.5 -10M1053.0 622l.5 -6l.5 13l.5 -13l.5 12l.5 -16l.5 12l.5 -12l.5 12l.5 -8l.5 8l.5 -11l.5 12l.5 -11l.5 9l.5 -6l.5 9l.5 -8l.5 14l.5 -14l.5 7l.5 -17l.5 21l.5 -13l.5 10l.5 -7l.5 9l.5 -7l.5 7l.5 -10l.5 10l.5 -14l.5 13l.5 -9l.5 8l.5 -17l.5 18l.5 -20l.5 30l.5 -20l.5 16l.5 -16l.5 11l.5 -8l.5 8l.5 -15l.5 17l.5 -10l.5 7l.5 -8l.5 7l.5 -13l.5 17l.5 -10l.5 8l.5 -11l.5 14l.5 -16l.5 13l.5 -6l.5 8l.5 -11l.5 15l.5 -15l.5 8l.5 -8l.5 7l.5 -7l.5 7l.5 -18l.5 24l.5 -13l.5 10l.5 -8l.5 6l.5 -11l.5 19l.5 -14l.5 12l.5 -10l.5 15l.5 -22l.5 20l.5 -18l.5 17l.5 -23l.5 17l.5 -10l.5 13l.5 -12l.5 6l.5 -9l.5 10l.5 -11l.5 14l.5 -14l.5 15l.5 -13l.5 9l.5 -23l.5 19l.5 -10l.5 13l.5 -12l.5 25l.5 -24l.5 9l.5 -6l.5 9l.5 -12l.5 13l.5 -13l.5 13l.5 -16l.5 12l.5 -7l.5 11l.5 -9l.5 5l.5 -7l.5 12l.5 -10l.5 13l.5 -14l.5 15l.5 -15l.5 11l.5 -8l.5 6l.5 -8l.5 8l.5 -9l.5 17l.5 -30l.5 23l.5 -12l.5 13l.5 -9l.5 5l.5 -5l.5 7l.5 -9l.5 15l.5 -21l.5 27l.5 -23l.5 9l.5 -13l.5 13l.5 -6l.5 13l.5 -17l.5 11l.5 -10l.5 11l.5 -10l.5 11l.5 -17l.5 14l.5 -8l.5 8l.5 -13l.5 18l.5 -20l.5 14l.5 -14l.5 15l.5 -7l.5 6l.5 -6l.5 7l.5 -7l.5 18l.5 -31l.5 19l.5 -11l.5 25l.5 -35l.5 21l.5 -12l.5 19l.5 -13l.5 10l.5 -12l.5 21l.5 -18l.5 7l.5 -15l.5 17l.5 -8l.5 8l.5 -13l.5 22l.5 -18l.5 6l.5 -7l.5 14l.5 -12l.5 9l.5 -14l.5 17l.5 -16l.5 10l.5 -8l.5 19l.5 -26l.5 23l.5 -23l.5 14M1212.0 622l.5 -7l.5 11l.5 -6l.5 9l.5 -7l.5 6l.5 -17l.5 21l.5 -14l.5 12l.5 -12l.5 9l.5 -6l.5 7l.5 -9l.5 17l.5 -16l.5 8l.5 -8l.5 8l.5 -10l.5 13M1233.0 622l.5 -4l.5 14l.5 -14l.5 13l.5 -15l.5 17l.5 -25l.5 17l.5 -9l.5 14l.5 -13l.5 11l.5 -16l.5 11l.5 -8l.5 7M1266.0 622l.5 -4l.5 11l.5 -17l.5 20l.5 -16l.5 15l.5 -18l.5 27l.5 -23l.5 11l.5 -7l.5 8l.5 -18l.5 18l.5 -10l.5 10l.5 -22l.5 24l.5 -11l.5 9l.5 -14l.5 13l.5 -7l.5 7l.5 -7l.5 6l.5 -13l.5 14l.5 -7l.5 7l.5 -11l.5 19l.5 -26l.5 15l.5 -8l.5 17l.5 -20l.5 20l.5 -13l.5 17l.5 -28l.5 19l.5 -16l.5 15l.5 -9l.5 9l.5 -8l.5 6l.5 -6l.5 6l.5 -18l.5 18l.5 -7l.5 7l.5 -9l.5 14l.5 -11l.5 10l.5 -9l.5 15l.5 -16l.5 9l.5 -12l.5 12l.5 -15l.5 16l.5 -13l.5 12l.5 -18l.5 31l.5 -30l.5 13l.5 -9l.5 13l.5 -20l.5 18l.5 -18l.5 23l.5 -12l.5 6l.5 -5l.5 10l.5 -14l.5 10M1311.5 622l.5 -4l.5 8l.5 -7l.5 6l.5 -8l.5 19l.5 -21l.5 13M1440.0 622l.5 -7l.5 10l.5 -8l.5 17l.5 -16l.5 10l.5 -16l.5 15l.5 -7l.5 6l.5 -11l.5 11l.5 -8l.5 7l.5 -10l.5 11l.5 -14l.5 14l.5 -11l.5 8l.5 -8l.5 9l.5 -8l.5 12l.5 -11l.5 8M1486.0 622l.5 -7l.5 23l.5 -18l.5 13l.5 -15l.5 12l.5 -9l.5 10l.5 -15l.5 11l.5 -9l.5 19l.5 -17l.5 10l.5 -14l.5 13l.5 -12l.5 10l.5 -12l.5 14l.5 -17l.5 17l.5 -22l.5 20l.5 -11l.5 14l.5 -14l.5 10l.5 -10l.5 14l.5 -15l.5 10l.5 -19l.5 20l.5 -15l.5 16l.5 -9l.5 9l.5 -8l.5 7l.5 -6l.5 8l.5 -13l.5 15l.5 -11l.5 7l.5 -8l.5 7l.5 -21l.5 20l.5 -16l.5 31l.5 -35l.5 19l.5 -9l.5 7l.5 -5l.5 6l.5 -8l.5 11l.5 -18l.5 17l.5 -8l.5 15l.5 -29l.5 22l.5 -10l.5 26l.5 -24l.5 22l.5 -23l.5 25l.5 -22l.5 8l.5 -13l.5 20l.5 -17l.5 18l.5 -18l.5 10l.5 -11l.5 14l.5 -14l.5 8l.5 -9l.5 9l.5 -7l.5 8l.5 -11l.5 21l.5 -18l.5 10l.5 -15l.5 16l.5 -17l.5 14l.5 -15l.5 29l.5 -23l.5 14l.5 -12l.5 12l.5 -13l.5 17l.5 -21l.5 13l.5 -14l.5 13l.5 -14l.5 14l.5 -8l.5 18l.5 -24l.5 20l.5 -15l.5 11l.5 -25l.5 22l.5 -13l.5 23l.5 -17l.5 8l.5 -8l.5 8l.5 -5l.5 6l.5 -15l.5 15l.5 -15l.5 19l.5 -16l.5 20l.5 -28l.5 25l.5 -11l.5 12l.5 -13l.5 15l.5 -15l.5 14l.5 -18l.5 12l.5 -7l.5 6l.5 -7l.5 10l.5 -9l.5 11l.5 -10l.5 7l.5 -5l.5 7l.5 -8l.5 11l.5 -10l.5 13l.5 -15l.5 15l.5 -14l.5 12l.5 -15l.5 12l.5 -8l.5 9l.5 -15l.5 12l.5 -6l.5 7l.5 -9l.5 10l.5 -26l.5 23l.5 -8l.5 16l.5 -15l.5 7l.5 -8l.5 9l.5 -17l.5 16l.5 -16l.5 20l.5 -13l.5 15l.5 -15l.5 9l.5 -13l.5 20l.5 -13l.5 8l.5 -10l.5 13l.5 -12l.5 12l.5 -11l.5 7l.5 -7l.5 6l.5 -12l.5 12l.5 -7l.5 8l.5 -7l.5 9l.5 -8l.5 7l.5 -8l.5 9l.5 -9l.5 6l.5 -11l.5 13l.5 -8l.5 9l.5 -23l.5 22l.5 -17l.5 21l.5 -12l.5 14l.5 -17l.5 11M1626.5 622l.5 -3l.5 9l.5 -10l.5 9l.5 -9l.5 7l.5 -10l.5 14l.5 -13l.5 19l.5 -23l.5 18l.5 -19l.5 18l.5 -14l.5 10l.5 -20l.5 22l.5 -13l.5 12l.5 -8l.5 11l.5 -12l.5 10l.5 -7l.5 13l.5 -15l.5 10l.5 -10l.5 16l.5 -17l.5 16l.5 -12l.5 9l.5 -14l.5 14l.5 -12l.5 9l.5 -9l.5 8l.5 -18l.5 18l.5 -15l.5 15l.5 -9l.5 11l.5 -15M1695.5 622l.5 -3l.5 8l.5 -6l.5 8l.5 -18l.5 25l.5 -15M1703.0 622l.5 -8l.5 20l.5 -17l.5 19l.5 -19l.5 10l.5 -12M1713.5 622l.5 -14l.5 16l.5 -12l.5 11l.5 -11l.5 11l.5 -10l.5 12l.5 -23l.5 35l.5 -23l.5 16l.5 -17l.5 15l.5 -10l.5 9l.5 -12l.5 11l.5 -7l.5 9l.5 -14l.5 12l.5 -13l.5 14l.5 -18l.5 26l.5 -18l.5 12l.5 -15l.5 10l.5 -10l.5 12l.5 -12l.5 16l.5 -23l.5 19l.5 -9l.5 20l.5 -19l.5 13l.5 -13l.5 8l.5 -12l.5 25l.5 -22l.5 6l.5 -17l.5 23l.5 -13l.5 10l.5 -8l.5 15l.5 -21l.5 18l.5 -13l.5 15l.5 -14l.5 7l.5 -15l.5 15l.5 -4l.5 18l.5 -20l.5 13l.5 -11l.5 11l.5 -13l.5 8l.5 -22l.5 25l.5 -13l.5 12l.5 -10l.5 9l.5 -13l.5 25l.5 -22l.5 9l.5 -9l.5 15l.5 -18l.5 8l.5 -8l.5 9l.5 -6l.5 9l.5 -12l.5 8l.5 -10l.5 22l.5 -20l.5 11l.5 -11l.5 12l.5 -12l.5 7l.5 -18l.5 19l.5 -12l.5 11l.5 -5l.5 8l.5 -10l.5 9l.5 -9l.5 15l.5 -20l.5 18l.5 -18l.5 17l.5 -10l.5 12l.5 -12l.5 7l.5 -12l.5 12l.5 -8l.5 11l.5 -7l.5 7l.5 -7l.5 9l.5 -12l.5 10l.5 -5l.5 7l.5 -13l.5 11l.5 -8l.5 7l.5 -8l.5 12l.5 -14l.5 18l.5 -17l.5 12l.5 -13l.5 19l.5 -16l.5 12l.5 -10l.5 12l.5 -20l.5 18l.5 -11l.5 7l.5 -8l.5 13l.5 -12l.5 7l.5 -9l.5 9l.5 -7l.5 8l.5 -9l.5 13l.5 -30l.5 30l.5 -20l.5 12l.5 -16l.5 16l.5 -8l.5 9l.5 -9l.5 8l.5 -15l.5 20l.5 -30l.5 23l.5 -10l.5 14l.5 -11l.5 10l.5 -10l.5 14l.5 -20l.5 19l.5 -19l.5 17l.5 -8l.5 10l.5 -11l.5 11l.5 -10l.5 11l.5 -12l.5 12l.5 -13l.5 13l.5 -11l.5 11l.5 -10l.5 11l.5 -10l.5 11l.5 -16l.5 14l.5 -13l.5 25l.5 -26l.5 14l.5 -10l.5 6l.5 -10l.5 11l.5 -10l.5 11l.5 -10l.5 11l.5 -12l.5 16l.5 -17l.5 11l.5 -8l.5 7l.5 -17l.5 23l.5 -14l.5 12l.5 -23l.5 23l.5 -10l.5 6l.5 -11l.5 14l.5 -9l.5 15l.5 -13l.5 12l.5 -14l.5 15l.5 -27l.5 19l.5 -12l.5 25l.5 -20l.5 22l.5 -22l.5 10l.5 -11l.5 13l.5 -22l.5 16l.5 -10l.5 9l.5 -8l.5 13l.5 -12l.5 10l.5 -14l.5 13l.5 -13l.5 19l.5 -13l.5 12l.5 -12l.5 11l.5 -12l.5 7l.5 -12l.5 12l.5 -7l.5 10l.5 -9l.5 18l.5 -28l.5 29l.5 -24l.5 11l.5 -18l.5 17l.5 -15l.5 13l.5 -11l.5 18l.5 -13l.5 8l.5 -6l.5 13l.5 -14l.5 10l.5 -12l.5 10l.5 -11l.5 13l.5 -9l.5 7l.5 -8l.5 10l.5 -10l.5 18l.5 -25l.5 25l.5 -17l.5 10l.5 -9l.5 20l.5 -29l.5 17l.5 -12l.5 19l.5 -19l.5 18l.5 -20l.5 15l.5 -13l.5 11l.5 -10l.5 11l.5 -13l.5 19l.5 -14l.5 21l.5 -19l.5 12l.5 -11l.5 11l.5 -11l.5 10l.5 -24l.5 22l.5 -9l.5 8l.5 -15l.5 22l.5 -20l.5 19l.5 -20l.5 12l.5 -11l.5 17l.5 -12l.5 10l.5 -15l.5 15l.5 -12l.5 14l.5 -17l.5 13l.5 -10l.5 6l.5 -7l.5 11l.5 -16l.5 15l.5 -11l.5 8l.5 -5l.5 7l.5 -11l.5 10l.5 -13l.5 16l.5 -21l.5 33l.5 -20l.5 14l.5 -18l.5 19l.5 -20l.5 16l.5 -11l.5 8l.5 -20l.5 29l.5 -15l.5 7l.5 -14l.5 15l.5 -8l.5 7l.5 -9l.5 10l.5 -15l.5 19l.5 -14l.5 10l.5 -19l.5 17l.5 -9l.5 8l.5 -12l.5 20l.5 -20l.5 14l.5 -10l.5 10l.5 -20l.5 20l.5 -12l.5 6l.5 -9l.5 9l.5 -15l.5 21l.5 -28l.5 22l.5 -17l.5 20l.5 -7M2059.0 622l.5 -17l.5 20l.5 -11l.5 11l.5 -9l.5 21l.5 -21l.5 8l.5 -14l.5 23l.5 -15l.5 5l.5 -5l.5 9l.5 -9l.5 10l.5 -10l.5 7l.5 -18l.5 18l.5 -7l.5 13l.5 -19l.5 20l.5 -24l.5 18l.5 -11l.5 9l.5 -8l.5 10l.5 -8l.5 10l.5 -14l.5 12l.5 -11l.5 14l.5 -9l.5 13l.5 -19l.5 13l.5 -12l.5 18l.5 -14l.5 8l.5 -13l.5 16l.5 -17l.5 16l.5 -13l.5 9l.5 -8l.5 9l.5 -7l.5 5l.5 -7l.5 8l.5 -6l.5 6l.5 -23l.5 22l.5 -6l.5 7l.5 -9l.5 7l.5 -7l.5 7l.5 -6l.5 16l.5 -29l.5 27l.5 -13l.5 12l.5 -13l.5 8l.5 -21l.5 21l.5 -10l.5 10l.5 -17l.5 21l.5 -12l.5 8l.5 -8l.5 9l.5 -18l.5 21l.5 -23l.5 36l.5 -26l.5 12l.5 -9l.5 9l.5 -9l.5 8l.5 -7l.5 7l.5 -9l.5 11l.5 -10l.5 10l.5 -8l.5 8l.5 -9l.5 16l.5 -13l.5 12l.5 -20l.5 22l.5 -17l.5 9l.5 -10l.5 10l.5 -9l.5 10l.5 -9l.5 13l.5 -19l.5 13l.5 -9l.5 8l.5 -10l.5 13l.5 -12l.5 7l.5 -20l.5 23l.5 -11l.5 8l.5 -9l.5 9l.5 -6l.5 7l.5 -10l.5 9l.5 -14l.5 15l.5 -9l.5 14l.5 -16l.5 11l.5 -7l.5 19l.5 -25l.5 12l.5 -6l.5 15l.5 -27l.5 18l.5 -11l.5 11l.5 -9l.5 10l.5 -13l.5 11l.5 -7l.5 12l.5 -11l.5 10l.5 -11l.5 9l.5 -9l.5 8l.5 -10l.5 25l.5 -26l.5 10l.5 -16l.5 23l.5 -12l.5 5l.5 -9l.5 12l.5 -8l.5 7l.5 -8l.5 8l.5 -6l.5 11l.5 -14l.5 14l.5 -13l.5 13l.5 -16l.5 11l.5 -5l.5 6l.5 -6l.5 5l.5 -14l.5 15l.5 -19l.5 21l.5 -10l.5 10l.5 -21l.5 20l.5 -17l.5 17l.5 -12l.5 20l.5 -18l.5 14l.5 -25l.5 24l.5 -19l.5 17l.5 -13l.5 15l.5 -13l.5 9l.5 -17l.5 18l.5 -12l.5 14l.5 -14l.5 7l.5 -9l.5 8l.5 -13l.5 25l.5 -26l.5 29l.5 -22l.5 10l.5 -8l.5 11l.5 -8l.5 5l.5 -11l.5 16l.5 -11l.5 15l.5 -26l.5 26l.5 -16l.5 10l.5 -11l.5 15l.5 -14l.5 13l.5 -14l.5 14l.5 -17l.5 14l.5 -9l.5 16l.5 -14l.5 5l.5 -9l.5 17l.5 -12l.5 7l.5 -11l.5 22l.5 -22l.5 10l.5 -8l.5 6l.5 -9l.5 26l.5 -34l.5 17l.5 -7l.5 11l.5 -14l.5 18l.5 -19l.5 16l.5 -13l.5 15l.5 -13l.5 5l.5 -9l.5 24l.5 -23l.5 10l.5 -16l.5 14l.5 -8l.5 7l.5 -12l.5 21l.5 -29l.5 22l.5 -7l.5 11l.5 -13l.5 15l.5 -13l.5 6l.5 -9l.5 13l.5 -10l.5 11l.5 -12l.5 19l.5 -25l.5 21l.5 -14l.5 8l.5 -6l.5 14l.5 -15l.5 10l.5 -10l.5 6l.5 -8l.5 11l.5 -13l.5 14l.5 -12l.5 12l.5 -10l.5 23l.5 -37l.5 29l.5 -21l.5 15l.5 -7l.5 8l.5 -11l.5 14l.5 -12l.5 14l.5 -22l.5 21l.5 -19l.5 17l.5 -13l.5 8l.5 -9l.5 11l.5 -14l.5 19l.5 -16l.5 7l.5 -13l.5 18l.5 -22l.5 21l.5 -11l.5 10l.5 -19l.5 18l.5 -12l.5 11l.5 -9l.5 7l.5 -18l.5 19l.5 -11l.5 10l.5 -10l.5 10l.5 -11l.5 11l.5 -16l.5 18l.5 -15l.5 17l.5 -15l.5 24l.5 -20l.5 13l.5 -14l.5 15l.5 -17l.5 14l.5 -13l.5 22l.5 -25l.5 22l.5 -24l.5 17l.5 -13l.5 13l.5 -7l.5 13l.5 -17l.5 17l.5 -24l.5 18l.5 -8l.5 11l.5 -12l.5 8l.5 -6l.5 8l.5 -8l.5 9l.5 -18l.5 18l.5 -14l.5 16l.5 -13l.5 12l.5 -17l.5 12l.5 -8l.5 11l.5 -19l.5 16l.5 -10l.5 17l.5 -20l.5 14l.5 -8l.5 12l.5 -11l.5 5l.5 -6l.5 11l.5 -14l.5 11l.5 -12l.5 17l.5 -14l.5 7l.5 -6l.5 14l.5 -20l.5 15l.5 -13l.5 13l.5 -7l.5 9l.5 -9l.5 6l.5 -6l.5 6l.5 -5l.5 10l.5 -12l.5 11l.5 -13l.5 11l.5 -9l.5 8l.5 -22l.5 30l.5 -16l.5 8l.5 -15l.5 12l.5 -14l.5 12l.5 -9l.5 11l.5 -9l.5 14l.5 -13l.5 7l.5 -9l.5 17l.5 -14l.5 6l.5 -7l.5 10l.5 -9l.5 15l.5 -14l.5 9l.5 -13l.5 13l.5 -11l.5 24l.5 -20l.5 13l.5 -12l.5 7l.5 -9l.5 18M2498.5 622l.5 -6l.5 9l.5 -13l.5 15l.5 -11l.5 13l.5 -13l.5 10l.5 -9l.5 12l.5 -13l.5 9l.5 -10l.5 23l.5 -27l.5 17l.5 -15l.5 13l.5 -8l.5 13l.5 -15l.5 13l.5 -11l.5 7l.5 -6l.5 15l.5 -26l.5 16l.5 -8l.5 9l.5 -9l.5 10l.5 -6l.5 10l.5 -14l.5 12l.5 -8l.5 10l.5 -11l.5 17l.5 -17l.5 6l.5 -6l.5 6l.5 -18l.5 19l.5 -16l.5 14l.5 -10l.5 11l.5 -10l.5 13l.5 -10l.5 9l.5 -7l.5 10l.5 -18l.5 23l.5 -18l.5 8l.5 -16l.5 17l.5 -7l.5 14l.5 -14l.5 11l.5 -12l.5 14l.5 -17l.5 13l.5 -13l.5 12l.5 -10l.5 10l.5 -11l.5 24l.5 -23l.5 11l.5 -24l.5 19l.5 -13l.5 17l.5 -16l.5 16l.5 -9l.5 7l.5 -13l.5 14l.5 -15l.5 14l.5 -17l.5 18l.5 -9l.5 21l.5 -24l.5 25l.5 -29l.5 14l.5 -13l.5 15l.5 -15l.5 14l.5 -11l.5 23l.5 -19l.5 13l.5 -16l.5 13l.5 -13l.5 12l.5 -9l.5 8l.5 -10l.5 13l.5 -22l.5 21l.5 -7l.5 9l.5 -22l.5 32l.5 -22l.5 11l.5 -11l.5 16l.5 -13l.5 13l.5 -13l.5 8l.5 -11l.5 13l.5 -10l.5 8l.5 -8l.5 7l.5 -11l.5 16l.5 -14l.5 22l.5 -18l.5 12l.5 -14l.5 11l.5 -9l.5 8l.5 -6l.5 9l.5 -11l.5 7l.5 -14l.5 14l.5 -6l.5 6l.5 -10l.5 19l.5 -16M2585.5 622l.5 -5l.5 13l.5 -15l.5 12l.5 -15" stroke="#ef8274" stroke-width="1.5" fill="none" stroke-linejoin="bevel"/>
<path d="M662.2 723l.5 -2l.5 7l.5 -7l.5 6l.5 -6l.5 14l.5 -14l.5 11l.5 -20l.5 15l.5 -8l.5 5l.5 -7l.5 7l.5 -7l.5 7l.5 -6l.5 7l.5 -9l.5 10l.5 -38l.5 39l.5 -12l.5 10l.5 -5l.5 4l.5 -4l.5 7l.5 -8l.5 10l.5 -11l.5 9l.5 -7l.5 5l.5 -4l.5 5l.5 -7l.5 11l.5 -11l.5 7l.5 -6l.5 11l.5 -12l.5 9l.5 -7l.5 5l.5 -13l.5 14l.5 -7l.5 9l.5 -8l.5 5l.5 -9l.5 13l.5 -12l.5 6l.5 -5l.5 7l.5 -8l.5 8l.5 -5l.5 3l.5 -8l.5 11l.5 -9l.5 9l.5 -7l.5 6l.5 -5l.5 5l.5 -5l.5 5l.5 -9l.5 10l.5 -10l.5 9l.5 -10l.5 9l.5 -6l.5 7l.5 -6l.5 8l.5 -8l.5 14l.5 -16l.5 6l.5 -4l.5 5l.5 -5l.5 5l.5 -8l.5 7l.5 -6l.5 6l.5 -6l.5 11l.5 -8l.5 5l.5 -4M964.0 723l.5 -3l.5 7l.5 -8l.5 5l.5 -5l.5 7l.5 -14l.5 12l.5 -5l.5 7l.5 -6l.5 6l.5 -5l.5 8l.5 -8l.5 6l.5 -11l.5 13l.5 -11l.5 11l.5 -12l.5 12l.5 -7l.5 5l.5 -5l.5 9l.5 -9l.5 4l.5 -8l.5 7l.5 -11l.5 13l.5 -5l.5 4l.5 -5l.5 8l.5 -10l.5 9l.5 -8l.5 9l.5 -8l.5 10l.5 -10l.5 5l.5 -9l.5 11l.5 -12l.5 12l.5 -7l.5 9l.5 -11l.5 10l.5 -8l.5 8l.5 -7l.5 7l.5 -9l.5 15l.5 -15l.5 8l.5 -8l.5 6l.5 -4l.5 5l.5 -12l.5 12l.5 -10l.5 8l.5 -7l.5 7l.5 -6l.5 7l.5 -7l.5 6l.5 -4l.5 4l.5 -5l.5 5l.5 -10l.5 11l.5 -9l.5 7l.5 -5l.5 5l.5 -8l.5 10l.5 -7l.5 5l.5 -6l.5 7l.5 -9l.5 10l.5 -11l.5 10l.5 -4l.5 8l.5 -11l.5 9l.5 -5l.5 7l.5 -7l.5 12l.5 -13l.5 6l.5 -7l.5 11l.5 -11l.5 10l.5 -17l.5 14l.5 -6l.5 14l.5 -14l.5 5l.5 -6l.5 6l.5 -5l.5 4l.5 -7l.5 9l.5 -7l.5 5l.5 -8l.5 15l.5 -11l.5 5l.5 -5l.5 5l.5 -4l.5 5l.5 -5l.5 4l.5 -8l.5 9l.5 -12l.5 11l.5 -7l.5 7l.5 -5l.5 5l.5 -5l.5 7l.5 -11l.5 11l.5 -11l.5 9l.5 -4l.5 9l.5 -9l.5 8l.5 -16l.5 11M1043.0 723l.5 -2l.5 9l.5 -18l.5 13l.5 -4l.5 5l.5 -9l.5 9l.5 -4l.5 5l.5 -9l.5 7l.5 -4M1053.0 723l.5 -5l.5 7l.5 -4l.5 9l.5 -9l.5 6l.5 -8l.5 8l.5 -8l.5 12l.5 -12l.5 6l.5 -6l.5 5l.5 -4l.5 4l.5 -4l.5 6l.5 -7l.5 7l.5 -8l.5 14l.5 -10l.5 9l.5 -11l.5 10l.5 -11l.5 12l.5 -11l.5 8l.5 -6l.5 4l.5 -5l.5 7l.5 -7l.5 6l.5 -7l.5 4l.5 -5l.5 9l.5 -12l.5 11l.5 -8l.5 9l.5 -17l.5 14l.5 -7l.5 7l.5 -12l.5 13l.5 -16l.5 17l.5 -10l.5 6l.5 -4l.5 5l.5 -6l.5 9l.5 -12l.5 14l.5 -10l.5 6l.5 -5l.5 5l.5 -8l.5 7l.5 -3l.5 5l.5 -5l.5 12l.5 -16l.5 12l.5 -8l.5 7l.5 -7l.5 6l.5 -7l.5 7l.5 -8l.5 10l.5 -10l.5 7l.5 -7l.5 9l.5 -11l.5 8l.5 -8l.5 10l.5 -7l.5 6l.5 -4l.5 5l.5 -6l.5 5l.5 -5l.5 6l.5 -9l.5 11l.5 -9l.5 5l.5 -7l.5 7l.5 -4l.5 9l.5 -9l.5 11l.5 -13l.5 10l.5 -8l.5 7l.5 -7l.5 8l.5 -8l.5 4l.5 -3l.5 4l.5 -4l.5 5l.5 -7l.5 7l.5 -7l.5 10l.5 -10l.5 7l.5 -6l.5 5l.5 -8l.5 10l.5 -11l.5 9l.5 -6l.5 5l.5 -4l.5 6l.5 -6l.5 5l.5 -5l.5 4l.5 -15l.5 15l.5 -4l.5 14l.5 -21l.5 13l.5 -11l.5 13l.5 -9l.5 7l.5 -7l.5 10l.5 -11l.5 7l.5 -9l.5 11l.5 -7l.5 6l.5 -7l.5 8l.5 -8l.5 6l.5 -10l.5 17l.5 -13l.5 10l.5 -8l.5 5l.5 -6l.5 5l.5 -7l.5 8l.5 -9l.5 8l.5 -6l.5 12l.5 -15l.5 8l.5 -6l.5 11l.5 -9l.5 6l.5 -7l.5 4l.5 -6l.5 9l.5 -9l.5 7l.5 -8l.5 8l.5 -9l.5 12l.5 -10l.5 9l.5 -7l.5 13l.5 -10l.5 6l.5 -8l.5 11l.5 -14l.5 11l.5 -9l.5 8l.5 -7l.5 13l.5 -11l.5 7l.5 -7l.5 10M1212.0 723l.5 -6l.5 10l.5 -8l.5 6l.5 -4l.5 4l.5 -7l.5 8l.5 -5l.5 5l.5 -6l.5 15l.5 -14l.5 6l.5 -6l.5 13l.5 -14l.5 9l.5 -10l.5 8l.5 -7l.5 5M1233.0 723l.5 -6l.5 8l.5 -6l.5 6l.5 -6l.5 9l.5 -12l.5 11l.5 -8l.5 10l.5 -11l.5 6l.5 -6l.5 5l.5 -3l.5 8M1266.0 723l.5 -8l.5 10l.5 -5l.5 7l.5 -6l.5 8l.5 -8l.5 3l.5 -7l.5 9l.5 -6l.5 5l.5 -13l.5 14l.5 -7l.5 5l.5 -7l.5 9l.5 -9l.5 8l.5 -5l.5 9l.5 -9l.5 6l.5 -5l.5 8l.5 -15l.5 12l.5 -4l.5 7l.5 -7l.5 14l.5 -15l.5 7l.5 -7l.5 8l.5 -12l.5 11l.5 -6l.5 5l.5 -5l.5 5l.5 -6l.5 8l.5 -8l.5 6l.5 -10l.5 8l.5 -7l.5 11l.5 -10l.5 6l.5 -5l.5 5l.5 -4l.5 5l.5 -12l.5 12l.5 -9l.5 9l.5 -7l.5 9l.5 -9l.5 5l.5 -5l.5 15l.5 -16l.5 13l.5 -11l.5 7l.5 -8l.5 6l.5 -6l.5 6l.5 -6l.5 5l.5 -5l.5 8l.5 -9l.5 8l.5 -9l.5 8l.5 -6l.5 8M1311.5 723l.5 -8l.5 11l.5 -8l.5 11l.5 -8l.5 4l.5 -4l.5 9M1440.0 723l.5 -3l.5 7l.5 -7l.5 7l.5 -7l.5 6l.5 -13l.5 15l.5 -9l.5 9l.5 -7l.5 15l.5 -16l.5 5l.5 -8l.5 9l.5 -6l.5 8l.5 -12l.5 9l.5 -9l.5 10l.5 -6l.5 7l.5 -9l.5 9M1486.0 723l.5 -3l.5 7l.5 -5l.5 6l.5 -11l.5 14l.5 -10l.5 5l.5 -7l.5 9l.5 -8l.5 14l.5 -12l.5 4l.5 -4l.5 6l.5 -14l.5 13l.5 -9l.5 16l.5 -15l.5 9l.5 -9l.5 10l.5 -19l.5 19l.5 -10l.5 7l.5 -6l.5 7l.5 -8l.5 8l.5 -7l.5 10l.5 -11l.5 11l.5 -10l.5 5l.5 -12l.5 12l.5 -9l.5 10l.5 -12l.5 15l.5 -11l.5 15l.5 -13l.5 7l.5 -4l.5 7l.5 -17l.5 21l.5 -16l.5 15l.5 -12l.5 7l.5 -8l.5 7l.5 -5l.5 7l.5 -8l.5 8l.5 -12l.5 10l.5 -13l.5 12l.5 -5l.5 3l.5 -3l.5 5l.5 -8l.5 12l.5 -13l.5 18l.5 -17l.5 8l.5 -8l.5 9l.5 -10l.5 8l.5 -6l.5 6l.5 -8l.5 11l.5 -6l.5 7l.5 -10l.5 7l.5 -12l.5 12l.5 -8l.5 12l.5 -9l.5 10l.5 -14l.5 9l.5 -6l.5 5l.5 -4l.5 4l.5 -5l.5 6l.5 -14l.5 13l.5 -5l.5 5l.5 -6l.5 15l.5 -14l.5 7l.5 -7l.5 4l.5 -6l.5 8l.5 -10l.5 9l.5 -10l.5 14l.5 -8l.5 5l.5 -5l.5 6l.5 -8l.5 11l.5 -13l.5 8l.5 -7l.5 8l.5 -6l.5 5l.5 -6l.5 14l.5 -14l.5 6l.5 -6l.5 4l.5 -8l.5 11l.5 -16l.5 14l.5 -7l.5 6l.5 -8l.5 13l.5 -13l.5 11l.5 -10l.5 8l.5 -7l.5 11l.5 -10l.5 8l.5 -7l.5 6l.5 -6l.5 7l.5 -5l.5 9l.5 -11l.5 9l.5 -9l.5 10l.5 -9l.5 9l.5 -9l.5 6l.5 -7l.5 6l.5 -9l.5 12l.5 -7l.5 9l.5 -8l.5 15l.5 -15l.5 5l.5 -5l.5 4l.5 -8l.5 16l.5 -16l.5 10l.5 -8l.5 14l.5 -18l.5 9l.5 -4l.5 6l.5 -5l.5 5l.5 -13l.5 13l.5 -10l.5 9l.5 -4l.5 6l.5 -8l.5 6l.5 -11l.5 15l.5 -14l.5 17l.5 -11l.5 5l.5 -5l.5 9l.5 -9l.5 7l.5 -7l.5 6l.5 -7l.5 6l.5 -3l.5 3l.5 -6l.5 7l.5 -13l.5 13l.5 -5l.5 9l.5 -15l.5 11M1626.5 723l.5 -4l.5 6l.5 -5l.5 6l.5 -7l.5 6l.5 -9l.5 9l.5 -8l.5 8l.5 -6l.5 6l.5 -4l.5 6l.5 -10l.5 7l.5 -8l.5 12l.5 -7l.5 4l.5 -9l.5 12l.5 -9l.5 8l.5 -11l.5 10l.5 -6l.5 5l.5 -4l.5 8l.5 -11l.5 15l.5 -14l.5 8l.5 -8l.5 15l.5 -14l.5 4l.5 -3l.5 6l.5 -8l.5 7l.5 -10l.5 14l.5 -12l.5 6l.5 -8M1695.5 723l.5 -3l.5 7l.5 -12l.5 13l.5 -13l.5 12l.5 -10M1703.0 723l.5 -5l.5 9l.5 -15l.5 16l.5 -7l.5 7l.5 -9M1713.5 723l.5 -4l.5 11l.5 -12l.5 7l.5 -7l.5 14l.5 -14l.5 11l.5 -8l.5 7l.5 -15l.5 16l.5 -8l.5 7l.5 -12l.5 14l.5 -12l.5 10l.5 -11l.5 9l.5 -7l.5 8l.5 -8l.5 8l.5 -5l.5 6l.5 -9l.5 7l.5 -14l.5 16l.5 -7l.5 6l.5 -5l.5 4l.5 -6l.5 6l.5 -5l.5 4l.5 -4l.5 4l.5 -6l.5 11l.5 -9l.5 6l.5 -5l.5 12l.5 -12l.5 8l.5 -9l.5 6l.5 -10l.5 10l.5 -13l.5 18l.5 -19l.5 11l.5 -6l.5 5l.5 -9l.5 13l.5 -12l.5 7l.5 -6l.5 7l.5 -7l.5 7l.5 -8l.5 14l.5 -10l.5 7l.5 -8l.5 6l.5 -7l.5 8l.5 -5l.5 6l.5 -5l.5 7l.5 -12l.5 14l.5 -12l.5 8l.5 -5l.5 3l.5 -4l.5 5l.5 -5l.5 7l.5 -9l.5 9l.5 -6l.5 8l.5 -9l.5 7l.5 -6l.5 6l.5 -4l.5 4l.5 -4l.5 9l.5 -13l.5 10l.5 -8l.5 11l.5 -10l.5 3l.5 -4l.5 9l.5 -12l.5 8l.5 -9l.5 9l.5 -7l.5 9l.5 -8l.5 5l.5 -6l.5 7l.5 -10l.5 9l.5 -4l.5 5l.5 -7l.5 8l.5 -16l.5 16l.5 -5l.5 4l.5 -7l.5 5l.5 -3l.5 6l.5 -8l.5 6l.5 -7l.5 6l.5 -4l.5 5l.5 -7l.5 10l.5 -8l.5 4l.5 -8l.5 13l.5 -15l.5 13l.5 -8l.5 3l.5 -7l.5 9l.5 -6l.5 10l.5 -14l.5 10l.5 -6l.5 11l.5 -11l.5 9l.5 -8l.5 7l.5 -7l.5 10l.5 -10l.5 7l.5 -5l.5 7l.5 -10l.5 8l.5 -8l.5 11l.5 -12l.5 8l.5 -5l.5 4l.5 -4l.5 8l.5 -13l.5 12l.5 -6l.5 5l.5 -16l.5 16l.5 -6l.5 6l.5 -7l.5 8l.5 -10l.5 10l.5 -8l.5 7l.5 -6l.5 4l.5 -5l.5 5l.5 -7l.5 18l.5 -18l.5 18l.5 -14l.5 9l.5 -9l.5 4l.5 -8l.5 8l.5 -5l.5 5l.5 -6l.5 6l.5 -8l.5 11l.5 -9l.5 9l.5 -7l.5 13l.5 -17l.5 14l.5 -18l.5 18l.5 -15l.5 10l.5 -6l.5 5l.5 -5l.5 10l.5 -9l.5 5l.5 -8l.5 8l.5 -5l.5 4l.5 -9l.5 10l.5 -6l.5 5l.5 -6l.5 8l.5 -10l.5 11l.5 -12l.5 10l.5 -4l.5 6l.5 -11l.5 10l.5 -5l.5 6l.5 -10l.5 7l.5 -5l.5 8l.5 -10l.5 8l.5 -7l.5 7l.5 -6l.5 7l.5 -9l.5 9l.5 -9l.5 7l.5 -10l.5 16l.5 -14l.5 10l.5 -18l.5 16l.5 -11l.5 12l.5 -7l.5 16l.5 -15l.5 7l.5 -13l.5 12l.5 -5l.5 4l.5 -4l.5 12l.5 -12l.5 14l.5 -17l.5 9l.5 -14l.5 18l.5 -17l.5 10l.5 -7l.5 11l.5 -8l.5 12l.5 -14l.5 8l.5 -9l.5 12l.5 -11l.5 10l.5 -16l.5 14l.5 -4l.5 7l.5 -9l.5 7l.5 -7l.5 5l.5 -4l.5 5l.5 -8l.5 8l.5 -5l.5 15l.5 -18l.5 7l.5 -8l.5 8l.5 -8l.5 8l.5 -6l.5 6l.5 -5l.5 5l.5 -7l.5 6l.5 -4l.5 5l.5 -8l.5 8l.5 -9l.5 15l.5 -14l.5 11l.5 -10l.5 8l.5 -6l.5 7l.5 -11l.5 13l.5 -10l.5 6l.5 -5l.5 7l.5 -8l.5 7l.5 -5l.5 9l.5 -14l.5 10l.5 -4l.5 4l.5 -4l.5 5l.5 -8l.5 10l.5 -8l.5 10l.5 -17l.5 13l.5 -5l.5 9l.5 -10l.5 5l.5 -4l.5 6l.5 -7l.5 7l.5 -16l.5 17l.5 -9l.5 7l.5 -8l.5 8l.5 -8l.5 7l.5 -9l.5 8l.5 -4l.5 4l.5 -9l.5 12l.5 -9l.5 9l.5 -8l.5 14l.5 -18l.5 11l.5 -15l.5 13l.5 -5l.5 5l.5 -4l.5 6l.5 -9l.5 8l.5 -6l.5 7l.5 -17l.5 24l.5 -14l.5 6l.5 -11l.5 12l.5 -11M2059.0 723l.5 -2l.5 5l.5 -8l.5 8l.5 -7l.5 11l.5 -14l.5 10l.5 -6l.5 10l.5 -9l.5 7l.5 -6l.5 12l.5 -13l.5 10l.5 -10l.5 6l.5 -6l.5 7l.5 -7l.5 9l.5 -9l.5 8l.5 -11l.5 9l.5 -8l.5 6l.5 -6l.5 7l.5 -9l.5 10l.5 -8l.5 6l.5 -9l.5 15l.5 -16l.5 14l.5 -8l.5 6l.5 -6l.5 11l.5 -17l.5 18l.5 -11l.5 7l.5 -7l.5 11l.5 -13l.5 7l.5 -6l.5 5l.5 -5l.5 8l.5 -18l.5 20l.5 -12l.5 6l.5 -9l.5 10l.5 -4l.5 4l.5 -10l.5 11l.5 -6l.5 6l.5 -6l.5 8l.5 -6l.5 6l.5 -8l.5 9l.5 -8l.5 5l.5 -5l.5 8l.5 -11l.5 7l.5 -6l.5 14l.5 -14l.5 7l.5 -8l.5 7l.5 -6l.5 5l.5 -6l.5 12l.5 -12l.5 8l.5 -10l.5 8l.5 -11l.5 11l.5 -7l.5 12l.5 -15l.5 10l.5 -9l.5 10l.5 -10l.5 9l.5 -6l.5 5l.5 -4l.5 7l.5 -10l.5 7l.5 -4l.5 5l.5 -7l.5 10l.5 -9l.5 10l.5 -8l.5 7l.5 -6l.5 5l.5 -8l.5 8l.5 -4l.5 6l.5 -11l.5 14l.5 -9l.5 10l.5 -14l.5 10l.5 -7l.5 5l.5 -8l.5 14l.5 -22l.5 14l.5 -9l.5 14l.5 -9l.5 6l.5 -7l.5 8l.5 -9l.5 5l.5 -7l.5 10l.5 -13l.5 9l.5 -8l.5 13l.5 -15l.5 10l.5 -5l.5 8l.5 -11l.5 8l.5 -4l.5 5l.5 -4l.5 7l.5 -7l.5 6l.5 -7l.5 6l.5 -5l.5 5l.5 -4l.5 10l.5 -12l.5 13l.5 -19l.5 14l.5 -11l.5 11l.5 -8l.5 12l.5 -11l.5 7l.5 -6l.5 6l.5 -9l.5 8l.5 -9l.5 5l.5 -7l.5 7l.5 -4l.5 6l.5 -8l.5 6l.5 -6l.5 8l.5 -6l.5 8l.5 -12l.5 11l.5 -12l.5 11l.5 -5l.5 6l.5 -6l.5 6l.5 -5l.5 8l.5 -8l.5 5l.5 -4l.5 3l.5 -5l.5 6l.5 -15l.5 16l.5 -6l.5 6l.5 -7l.5 5l.5 -11l.5 12l.5 -5l.5 10l.5 -18l.5 15l.5 -7l.5 6l.5 -8l.5 11l.5 -10l.5 6l.5 -4l.5 8l.5 -9l.5 5l.5 -6l.5 6l.5 -11l.5 10l.5 -6l.5 7l.5 -13l.5 13l.5 -5l.5 11l.5 -12l.5 8l.5 -8l.5 7l.5 -5l.5 3l.5 -3l.5 5l.5 -9l.5 10l.5 -10l.5 8l.5 -5l.5 9l.5 -10l.5 7l.5 -10l.5 10l.5 -14l.5 13l.5 -8l.5 9l.5 -8l.5 12l.5 -13l.5 10l.5 -8l.5 6l.5 -6l.5 7l.5 -7l.5 9l.5 -13l.5 14l.5 -12l.5 9l.5 -7l.5 8l.5 -6l.5 4l.5 -5l.5 6l.5 -8l.5 17l.5 -13l.5 5l.5 -6l.5 7l.5 -6l.5 7l.5 -10l.5 9l.5 -9l.5 16l.5 -15l.5 8l.5 -9l.5 9l.5 -7l.5 5l.5 -3l.5 10l.5 -14l.5 9l.5 -10l.5 13l.5 -13l.5 14l.5 -15l.5 11l.5 -8l.5 6l.5 -6l.5 8l.5 -8l.5 9l.5 -7l.5 11l.5 -16l.5 13l.5 -6l.5 8l.5 -10l.5 9l.5 -10l.5 8l.5 -7l.5 7l.5 -5l.5 5l.5 -8l.5 6l.5 -6l.5 6l.5 -4l.5 13l.5 -20l.5 10l.5 -11l.5 11l.5 -4l.5 5l.5 -6l.5 9l.5 -8l.5 5l.5 -6l.5 6l.5 -8l.5 10l.5 -10l.5 8l.5 -6l.5 15l.5 -21l.5 18l.5 -13l.5 11l.5 -14l.5 6l.5 -8l.5 17l.5 -19l.5 13l.5 -9l.5 8l.5 -5l.5 7l.5 -10l.5 9l.5 -6l.5 7l.5 -7l.5 5l.5 -5l.5 9l.5 -10l.5 7l.5 -5l.5 5l.5 -9l.5 7l.5 -9l.5 9l.5 -9l.5 9l.5 -5l.5 9l.5 -9l.5 5l.5 -9l.5 9l.5 -7l.5 16l.5 -17l.5 11l.5 -7l.5 7l.5 -7l.5 7l.5 -8l.5 9l.5 -12l.5 13l.5 -14l.5 10l.5 -4l.5 5l.5 -8l.5 17l.5 -23l.5 14l.5 -5l.5 11l.5 -10l.5 5l.5 -5l.5 7l.5 -7l.5 7l.5 -7l.5 9l.5 -10l.5 6l.5 -5l.5 7l.5 -9l.5 7l.5 -7l.5 10l.5 -10l.5 12l.5 -10l.5 5l.5 -6l.5 10l.5 -11l.5 17l.5 -14l.5 6l.5 -7l.5 5l.5 -9l.5 10l.5 -11l.5 19l.5 -17l.5 9l.5 -5l.5 7l.5 -12l.5 14l.5 -16l.5 18l.5 -12l.5 5l.5 -5l.5 5l.5 -7l.5 7l.5 -5l.5 5l.5 -4l.5 4l.5 -4l.5 15l.5 -25l.5 13l.5 -4l.5 5l.5 -6l.5 7M2498.5 723l.5 -3l.5 15l.5 -16l.5 9l.5 -7l.5 10l.5 -13l.5 10l.5 -7l.5 8l.5 -7l.5 9l.5 -8l.5 9l.5 -10l.5 10l.5 -12l.5 10l.5 -7l.5 8l.5 -13l.5 19l.5 -15l.5 8l.5 -8l.5 9l.5 -7l.5 5l.5 -9l.5 11l.5 -8l.5 7l.5 -13l.5 10l.5 -6l.5 12l.5 -10l.5 6l.5 -6l.5 7l.5 -11l.5 9l.5 -8l.5 8l.5 -9l.5 10l.5 -7l.5 7l.5 -9l.5 11l.5 -8l.5 5l.5 -6l.5 10l.5 -11l.5 10l.5 -9l.5 6l.5 -8l.5 10l.5 -6l.5 8l.5 -20l.5 18l.5 -9l.5 8l.5 -7l.5 6l.5 -6l.5 4l.5 -8l.5 8l.5 -8l.5 7l.5 -4l.5 6l.5 -6l.5 4l.5 -4l.5 5l.5 -5l.5 5l.5 -9l.5 9l.5 -6l.5 6l.5 -5l.5 5l.5 -8l.5 11l.5 -9l.5 9l.5 -8l.5 5l.5 -9l.5 7l.5 -5l.5 5l.5 -7l.5 12l.5 -11l.5 6l.5 -4l.5 7l.5 -6l.5 5l.5 -5l.5 5l.5 -7l.5 9l.5 -7l.5 9l.5 -12l.5 7l.5 -3l.5 5l.5 -7l.5 8l.5 -13l.5 12l.5 -7l.5 6l.5 -5l.5 6l.5 -14l.5 16l.5 -14l.5 14l.5 -8l.5 9l.5 -12l.5 9l.5 -7l.5 12l.5 -11l.5 6l.5 -8l.5 5l.5 -5l.5 7l.5 -6l.5 6l.5 -10l.5 10l.5 -11l.5 9l.5 -4l.5 8l.5 -9l.5 13l.5 -10l.5 3l.5 -5l.5 12l.5 -16M2585.5 723l.5 -13l.5 16l.5 -8l.5 10l.5 -16" stroke="#7b4597" stroke-width="1.5" fill="none" stroke-linejoin="bevel"/>
<path d="M662.2 800l.5 -24l.5 28l.5 -22l.5 23l.5 -18l.5 14l.5 -21l.5 41l.5 -30l.5 32l.5 -33l.5 18l.5 -17l.5 20l.5 -18l.5 12l.5 -28l.5 33l.5 -17l.5 12l.5 -21l.5 27l.5 -19l.5 9l.5 -11l.5 18l.5 -19l.5 17l.5 -20l.5 17l.5 -18l.5 17l.5 -10l.5 9l.5 -20l.5 24l.5 -13l.5 11l.5 -11l.5 14l.5 -15l.5 10l.5 -8l.5 12l.5 -15l.5 14l.5 -10l.5 8l.5 -14l.5 22l.5 -16l.5 10l.5 -21l.5 36l.5 -32l.5 17l.5 -17l.5 26l.5 -21l.5 11l.5 -17l.5 21l.5 -18l.5 12l.5 -9l.5 17l.5 -18l.5 13l.5 -16l.5 20l.5 -16l.5 12l.5 -12l.5 14l.5 -10l.5 11l.5 -21l.5 21l.5 -22l.5 19l.5 -11l.5 13l.5 -9l.5 14l.5 -19l.5 18l.5 -17l.5 15l.5 -16l.5 22l.5 -15l.5 8l.5 -11l.5 11l.5 -16l.5 15l.5 -21l.5 27l.5 -27M964.0 800l.5 -11l.5 23l.5 -27l.5 23l.5 -16l.5 21l.5 -28l.5 23l.5 -16l.5 13l.5 -9l.5 13l.5 -18l.5 13l.5 -23l.5 23l.5 -9l.5 15l.5 -18l.5 23l.5 -19l.5 18l.5 -19l.5 15l.5 -21l.5 17l.5 -21l.5 17l.5 -13l.5 17l.5 -20l.5 17l.5 -11l.5 12l.5 -18l.5 27l.5 -28l.5 21l.5 -14l.5 17l.5 -19l.5 31l.5 -26l.5 19l.5 -18l.5 18l.5 -19l.5 13l.5 -9l.5 12l.5 -11l.5 7l.5 -9l.5 9l.5 -9l.5 11l.5 -20l.5 26l.5 -30l.5 28l.5 -21l.5 13l.5 -23l.5 21l.5 -23l.5 35l.5 -25l.5 16l.5 -12l.5 13l.5 -15l.5 12l.5 -16l.5 23l.5 -31l.5 28l.5 -21l.5 21l.5 -14l.5 21l.5 -25l.5 26l.5 -20l.5 12l.5 -28l.5 28l.5 -8l.5 19l.5 -22l.5 21l.5 -19l.5 17l.5 -28l.5 19l.5 -9l.5 7l.5 -24l.5 27l.5 -17l.5 18l.5 -15l.5 15l.5 -25l.5 23l.5 -16l.5 10l.5 -8l.5 7l.5 -11l.5 11l.5 -8l.5 8l.5 -13l.5 25l.5 -22l.5 13l.5 -13l.5 18l.5 -19l.5 16l.5 -15l.5 10l.5 -15l.5 23l.5 -15l.5 25l.5 -29l.5 19l.5 -18l.5 10l.5 -12l.5 13l.5 -11l.5 11l.5 -15l.5 17l.5 -13l.5 15l.5 -12l.5 14l.5 -19l.5 15l.5 -16l.5 20l.5 -15l.5 11l.5 -9l.5 26l.5 -38l.5 25l.5 -10l.5 12M1043.0 800l.5 -16l.5 23l.5 -11l.5 23l.5 -31l.5 21l.5 -29l.5 24l.5 -29l.5 38l.5 -20l.5 11l.5 -10M1053.0 800l.5 -5l.5 9l.5 -12l.5 21l.5 -27l.5 21l.5 -10l.5 9l.5 -32l.5 31l.5 -14l.5 23l.5 -23l.5 14l.5 -28l.5 37l.5 -17l.5 12l.5 -21l.5 17l.5 -9l.5 15l.5 -36l.5 36l.5 -27l.5 20l.5 -8l.5 22l.5 -24l.5 10l.5 -12l.5 18l.5 -28l.5 26l.5 -12l.5 15l.5 -28l.5 24l.5 -11l.5 15l.5 -19l.5 35l.5 -28l.5 18l.5 -16l.5 16l.5 -17l.5 9l.5 -13l.5 16l.5 -18l.5 11l.5 -28l.5 36l.5 -18l.5 15l.5 -17l.5 12l.5 -15l.5 17l.5 -10l.5 9l.5 -19l.5 22l.5 -13l.5 10l.5 -10l.5 18l.5 -18l.5 14l.5 -13l.5 8l.5 -20l.5 30l.5 -20l.5 11l.5 -13l.5 12l.5 -12l.5 20l.5 -18l.5 26l.5 -33l.5 33l.5 -44l.5 27l.5 -10l.5 14l.5 -25l.5 22l.5 -13l.5 14l.5 -13l.5 15l.5 -20l.5 21l.5 -11l.5 9l.5 -11l.5 25l.5 -27l.5 10l.5 -12l.5 14l.5 -15l.5 14l.5 -15l.5 22l.5 -33l.5 31l.5 -23l.5 17l.5 -12l.5 16l.5 -19l.5 19l.5 -17l.5 13l.5 -12l.5 20l.5 -23l.5 18l.5 -13l.5 16l.5 -14l.5 15l.5 -13l.5 18l.5 -22l.5 16l.5 -13l.5 16l.5 -14l.5 19l.5 -18l.5 12l.5 -14l.5 21l.5 -24l.5 13l.5 -12l.5 7l.5 -12l.5 13l.5 -16l.5 15l.5 -10l.5 11l.5 -10l.5 21l.5 -24l.5 13l.5 -11l.5 24l.5 -24l.5 9l.5 -7l.5 19l.5 -22l.5 11l.5 -10l.5 10l.5 -26l.5 26l.5 -11l.5 10l.5 -8l.5 9l.5 -9l.5 16l.5 -28l.5 26l.5 -16l.5 13l.5 -24l.5 32l.5 -17l.5 20l.5 -26l.5 17l.5 -15l.5 13l.5 -8l.5 19l.5 -25l.5 14l.5 -9l.5 13l.5 -14l.5 8l.5 -11l.5 13l.5 -9l.5 7l.5 -9l.5 7l.5 -11l.5 21l.5 -15l.5 10l.5 -20l.5 26l.5 -17l.5 20l.5 -24l.5 22l.5 -21l.5 12M1212.0 800l.5 -15l.5 21l.5 -10l.5 7l.5 -12l.5 23l.5 -19l.5 10l.5 -12l.5 11l.5 -13l.5 11l.5 -8l.5 12l.5 -33l.5 35l.5 -20l.5 16l.5 -12l.5 13l.5 -25l.5 25M1233.0 800l.5 -9l.5 14l.5 -10l.5 10l.5 -8l.5 19l.5 -21l.5 13l.5 -11l.5 15l.5 -33l.5 25l.5 -12l.5 11l.5 -12l.5 16M1266.0 800l.5 -5l.5 10l.5 -16l.5 13l.5 -14l.5 21l.5 -25l.5 26l.5 -25l.5 22l.5 -18l.5 21l.5 -23l.5 15l.5 -10l.5 26l.5 -34l.5 18l.5 -12l.5 26l.5 -26l.5 17l.5 -19l.5 17l.5 -20l.5 20l.5 -13l.5 12l.5 -13l.5 13l.5 -23l.5 24l.5 -12l.5 10l.5 -19l.5 32l.5 -31l.5 21l.5 -26l.5 21l.5 -11l.5 16l.5 -15l.5 11l.5 -11l.5 16l.5 -15l.5 12l.5 -19l.5 21l.5 -11l.5 19l.5 -26l.5 17l.5 -11l.5 14l.5 -15l.5 13l.5 -11l.5 8l.5 -17l.5 19l.5 -15l.5 16l.5 -21l.5 20l.5 -8l.5 11l.5 -17l.5 17l.5 -11l.5 12l.5 -16l.5 14l.5 -10l.5 18l.5 -29l.5 21l.5 -13l.5 15l.5 -16l.5 13l.5 -30l.5 26M1311.5 800l.5 -14l.5 19l.5 -8l.5 25l.5 -34l.5 18l.5 -11l.5 21M1440.0 800l.5 -5l.5 12l.5 -14l.5 11l.5 -10l.5 16l.5 -14l.5 7l.5 -13l.5 16l.5 -11l.5 9l.5 -12l.5 26l.5 -24l.5 20l.5 -19l.5 21l.5 -28l.5 26l.5 -20l.5 11l.5 -23l.5 24l.5 -21l.5 34M1486.0 800l.5 -8l.5 13l.5 -12l.5 10l.5 -11l.5 10l.5 -9l.5 14l.5 -22l.5 22l.5 -13l.5 12l.5 -13l.5 16l.5 -36l.5 27l.5 -10l.5 12l.5 -10l.5 17l.5 -30l.5 23l.5 -12l.5 17l.5 -19l.5 25l.5 -25l.5 19l.5 -19l.5 15l.5 -9l.5 16l.5 -16l.5 12l.5 -30l.5 28l.5 -10l.5 17l.5 -18l.5 8l.5 -10l.5 10l.5 -11l.5 19l.5 -16l.5 12l.5 -21l.5 20l.5 -13l.5 13l.5 -11l.5 13l.5 -23l.5 30l.5 -16l.5 17l.5 -17l.5 20l.5 -26l.5 17l.5 -12l.5 14l.5 -16l.5 10l.5 -9l.5 17l.5 -24l.5 19l.5 -14l.5 18l.5 -23l.5 22l.5 -33l.5 36l.5 -28l.5 23l.5 -11l.5 10l.5 -10l.5 24l.5 -28l.5 19l.5 -12l.5 18l.5 -23l.5 13l.5 -22l.5 20l.5 -8l.5 8l.5 -11l.5 13l.5 -19l.5 22l.5 -15l.5 11l.5 -28l.5 27l.5 -12l.5 18l.5 -20l.5 25l.5 -20l.5 7l.5 -18l.5 32l.5 -26l.5 21l.5 -25l.5 21l.5 -15l.5 15l.5 -24l.5 19l.5 -7l.5 7l.5 -12l.5 11l.5 -13l.5 14l.5 -24l.5 29l.5 -20l.5 14l.5 -7l.5 21l.5 -28l.5 13l.5 -7l.5 13l.5 -18l.5 14l.5 -13l.5 17l.5 -25l.5 35l.5 -21l.5 15l.5 -23l.5 36l.5 -29l.5 14l.5 -21l.5 23l.5 -15l.5 15l.5 -19l.5 35l.5 -31l.5 31l.5 -30l.5 16l.5 -20l.5 17l.5 -12l.5 11l.5 -17l.5 19l.5 -13l.5 10l.5 -27l.5 26l.5 -10l.5 24l.5 -29l.5 18l.5 -29l.5 36l.5 -26l.5 15l.5 -21l.5 18l.5 -10l.5 7l.5 -15l.5 16l.5 -14l.5 13l.5 -13l.5 14l.5 -20l.5 18l.5 -17l.5 20l.5 -15l.5 21l.5 -20l.5 9l.5 -16l.5 15l.5 -13l.5 35l.5 -32l.5 16l.5 -16l.5 14l.5 -29l.5 32l.5 -17l.5 15l.5 -12l.5 23l.5 -17l.5 9l.5 -12l.5 11l.5 -19l.5 20l.5 -16l.5 15l.5 -14l.5 15l.5 -14l.5 13l.5 -15l.5 21l.5 -37l.5 34l.5 -13l.5 16l.5 -14l.5 14M1626.5 800l.5 -10l.5 17l.5 -11l.5 7l.5 -9l.5 9l.5 -10l.5 12l.5 -9l.5 11l.5 -18l.5 16l.5 -14l.5 19l.5 -15l.5 19l.5 -21l.5 14l.5 -13l.5 10l.5 -14l.5 32l.5 -25l.5 14l.5 -23l.5 21l.5 -10l.5 15l.5 -18l.5 18l.5 -16l.5 11l.5 -19l.5 26l.5 -23l.5 16l.5 -18l.5 20l.5 -18l.5 15l.5 -8l.5 18l.5 -19l.5 11l.5 -12l.5 7l.5 -13M1695.5 800l.5 -3l.5 7l.5 -8l.5 20l.5 -25l.5 16l.5 -10M1703.0 800l.5 -6l.5 10l.5 -15l.5 17l.5 -10l.5 17l.5 -15M1713.5 800l.5 -8l.5 14l.5 -9l.5 9l.5 -9l.5 25l.5 -34l.5 17l.5 -10l.5 26l.5 -45l.5 40l.5 -26l.5 29l.5 -22l.5 13l.5 -14l.5 14l.5 -25l.5 24l.5 -29l.5 24l.5 -20l.5 23l.5 -34l.5 33l.5 -15l.5 15l.5 -21l.5 32l.5 -24l.5 11l.5 -19l.5 20l.5 -10l.5 7l.5 -7l.5 14l.5 -13l.5 9l.5 -14l.5 20l.5 -18l.5 11l.5 -10l.5 13l.5 -16l.5 25l.5 -29l.5 17l.5 -19l.5 26l.5 -18l.5 21l.5 -24l.5 14l.5 -15l.5 22l.5 -26l.5 21l.5 -15l.5 12l.5 -10l.5 10l.5 -29l.5 34l.5 -18l.5 12l.5 -11l.5 11l.5 -12l.5 26l.5 -23l.5 10l.5 -14l.5 17l.5 -12l.5 8l.5 -18l.5 30l.5 -25l.5 14l.5 -10l.5 17l.5 -18l.5 15l.5 -15l.5 12l.5 -19l.5 30l.5 -26l.5 23l.5 -19l.5 16l.5 -11l.5 7l.5 -7l.5 7l.5 -13l.5 28l.5 -26l.5 14l.5 -16l.5 18l.5 -13l.5 21l.5 -28l.5 28l.5 -24l.5 12l.5 -9l.5 9l.5 -21l.5 21l.5 -23l.5 28l.5 -16l.5 17l.5 -16l.5 17l.5 -18l.5 11l.5 -10l.5 10l.5 -10l.5 11l.5 -19l.5 25l.5 -20l.5 12l.5 -13l.5 9l.5 -14l.5 23l.5 -37l.5 30l.5 -9l.5 15l.5 -12l.5 10l.5 -11l.5 14l.5 -24l.5 22l.5 -15l.5 16l.5 -23l.5 34l.5 -35l.5 25l.5 -22l.5 21l.5 -19l.5 19l.5 -13l.5 12l.5 -15l.5 18l.5 -34l.5 29l.5 -14l.5 19l.5 -25l.5 22l.5 -18l.5 16l.5 -17l.5 33l.5 -34l.5 21l.5 -16l.5 16l.5 -19l.5 13l.5 -11l.5 13l.5 -21l.5 17l.5 -11l.5 15l.5 -14l.5 13l.5 -13l.5 13l.5 -14l.5 22l.5 -25l.5 14l.5 -18l.5 35l.5 -29l.5 13l.5 -13l.5 11l.5 -10l.5 15l.5 -10l.5 10l.5 -19l.5 31l.5 -22l.5 12l.5 -10l.5 9l.5 -8l.5 8l.5 -8l.5 15l.5 -14l.5 11l.5 -11l.5 13l.5 -18l.5 17l.5 -29l.5 26l.5 -10l.5 7l.5 -16l.5 23l.5 -21l.5 24l.5 -23l.5 23l.5 -19l.5 12l.5 -15l.5 18l.5 -19l.5 12l.5 -7l.5 7l.5 -14l.5 20l.5 -18l.5 13l.5 -18l.5 26l.5 -22l.5 18l.5 -15l.5 9l.5 -10l.5 19l.5 -20l.5 18l.5 -17l.5 14l.5 -14l.5 21l.5 -18l.5 20l.5 -29l.5 20l.5 -9l.5 8l.5 -12l.5 27l.5 -23l.5 15l.5 -20l.5 14l.5 -19l.5 20l.5 -24l.5 18l.5 -8l.5 15l.5 -20l.5 14l.5 -14l.5 18l.5 -19l.5 10l.5 -19l.5 34l.5 -30l.5 31l.5 -31l.5 26l.5 -17l.5 8l.5 -11l.5 19l.5 -14l.5 11l.5 -17l.5 13l.5 -10l.5 15l.5 -16l.5 13l.5 -13l.5 22l.5 -18l.5 16l.5 -19l.5 13l.5 -14l.5 14l.5 -11l.5 13l.5 -16l.5 17l.5 -19l.5 14l.5 -10l.5 13l.5 -19l.5 18l.5 -20l.5 22l.5 -16l.5 21l.5 -18l.5 8l.5 -12l.5 14l.5 -33l.5 34l.5 -14l.5 11l.5 -14l.5 22l.5 -22l.5 31l.5 -24l.5 8l.5 -12l.5 13l.5 -10l.5 9l.5 -7l.5 12l.5 -13l.5 13l.5 -14l.5 20l.5 -18l.5 11l.5 -27l.5 28l.5 -15l.5 13l.5 -10l.5 18l.5 -29l.5 29l.5 -20l.5 9l.5 -13l.5 27l.5 -36l.5 32l.5 -17l.5 8l.5 -13l.5 16l.5 -20l.5 22l.5 -24l.5 24l.5 -21l.5 17l.5 -16l.5 14l.5 -17l.5 24l.5 -19l.5 17l.5 -20l.5 15l.5 -11l.5 9l.5 -15l.5 27l.5 -23l.5 19l.5 -21l.5 18l.5 -24l.5 39l.5 -32l.5 18l.5 -10l.5 11l.5 -10l.5 12l.5 -12l.5 16l.5 -15l.5 12l.5 -14l.5 13l.5 -18l.5 23l.5 -21l.5 13l.5 -9l.5 14l.5 -22M2059.0 800l.5 -5l.5 14l.5 -13l.5 7l.5 -22l.5 30l.5 -18l.5 11l.5 -9l.5 13l.5 -13l.5 11l.5 -11l.5 9l.5 -13l.5 13l.5 -11l.5 14l.5 -11l.5 18l.5 -27l.5 18l.5 -9l.5 19l.5 -24l.5 12l.5 -12l.5 25l.5 -28l.5 21l.5 -18l.5 20l.5 -21l.5 31l.5 -41l.5 29l.5 -14l.5 17l.5 -15l.5 8l.5 -11l.5 17l.5 -21l.5 17l.5 -14l.5 15l.5 -22l.5 17l.5 -16l.5 15l.5 -13l.5 11l.5 -9l.5 10l.5 -12l.5 15l.5 -33l.5 34l.5 -16l.5 12l.5 -27l.5 30l.5 -24l.5 21l.5 -12l.5 14l.5 -17l.5 29l.5 -44l.5 37l.5 -24l.5 21l.5 -11l.5 11l.5 -18l.5 18l.5 -32l.5 38l.5 -21l.5 29l.5 -29l.5 18l.5 -17l.5 21l.5 -23l.5 16l.5 -12l.5 27l.5 -44l.5 29l.5 -14l.5 17l.5 -11l.5 14l.5 -20l.5 26l.5 -21l.5 11l.5 -14l.5 21l.5 -17l.5 13l.5 -25l.5 32l.5 -21l.5 11l.5 -12l.5 14l.5 -14l.5 13l.5 -10l.5 16l.5 -36l.5 34l.5 -33l.5 29l.5 -10l.5 10l.5 -12l.5 29l.5 -36l.5 20l.5 -15l.5 13l.5 -12l.5 14l.5 -22l.5 22l.5 -32l.5 33l.5 -23l.5 26l.5 -25l.5 18l.5 -8l.5 8l.5 -15l.5 17l.5 -19l.5 23l.5 -19l.5 16l.5 -16l.5 29l.5 -28l.5 15l.5 -10l.5 14l.5 -14l.5 11l.5 -11l.5 21l.5 -28l.5 20l.5 -15l.5 18l.5 -26l.5 15l.5 -11l.5 12l.5 -11l.5 11l.5 -7l.5 9l.5 -9l.5 8l.5 -10l.5 12l.5 -21l.5 20l.5 -20l.5 19l.5 -8l.5 14l.5 -19l.5 29l.5 -21l.5 8l.5 -24l.5 29l.5 -14l.5 17l.5 -20l.5 11l.5 -14l.5 17l.5 -12l.5 12l.5 -16l.5 12l.5 -14l.5 25l.5 -25l.5 16l.5 -11l.5 12l.5 -11l.5 15l.5 -15l.5 8l.5 -9l.5 12l.5 -11l.5 14l.5 -26l.5 26l.5 -13l.5 15l.5 -23l.5 23l.5 -24l.5 22l.5 -19l.5 17l.5 -10l.5 8l.5 -15l.5 15l.5 -16l.5 20l.5 -26l.5 25l.5 -17l.5 28l.5 -31l.5 32l.5 -35l.5 19l.5 -19l.5 24l.5 -17l.5 8l.5 -23l.5 31l.5 -22l.5 16l.5 -14l.5 30l.5 -28l.5 13l.5 -15l.5 13l.5 -10l.5 8l.5 -11l.5 15l.5 -14l.5 13l.5 -18l.5 24l.5 -27l.5 24l.5 -23l.5 18l.5 -14l.5 13l.5 -11l.5 9l.5 -7l.5 8l.5 -11l.5 20l.5 -28l.5 22l.5 -17l.5 16l.5 -21l.5 17l.5 -12l.5 16l.5 -13l.5 11l.5 -10l.5 11l.5 -18l.5 31l.5 -23l.5 13l.5 -17l.5 17l.5 -13l.5 13l.5 -16l.5 28l.5 -40l.5 28l.5 -19l.5 29l.5 -33l.5 21l.5 -16l.5 31l.5 -27l.5 9l.5 -12l.5 19l.5 -14l.5 14l.5 -19l.5 14l.5 -26l.5 31l.5 -14l.5 10l.5 -14l.5 23l.5 -14l.5 8l.5 -20l.5 25l.5 -17l.5 14l.5 -13l.5 15l.5 -13l.5 16l.5 -21l.5 15l.5 -14l.5 21l.5 -17l.5 17l.5 -24l.5 17l.5 -18l.5 21l.5 -25l.5 20l.5 -12l.5 12l.5 -12l.5 15l.5 -16l.5 18l.5 -17l.5 10l.5 -10l.5 14l.5 -17l.5 17l.5 -16l.5 15l.5 -30l.5 44l.5 -26l.5 15l.5 -11l.5 8l.5 -11l.5 15l.5 -25l.5 31l.5 -21l.5 10l.5 -12l.5 13l.5 -21l.5 22l.5 -22l.5 17l.5 -10l.5 22l.5 -25l.5 14l.5 -8l.5 15l.5 -15l.5 11l.5 -14l.5 12l.5 -9l.5 10l.5 -12l.5 14l.5 -23l.5 21l.5 -12l.5 15l.5 -15l.5 11l.5 -13l.5 12l.5 -10l.5 17l.5 -17l.5 32l.5 -35l.5 17l.5 -11l.5 10l.5 -17l.5 19l.5 -9l.5 16l.5 -21l.5 16l.5 -11l.5 13l.5 -19l.5 13l.5 -15l.5 19l.5 -14l.5 15l.5 -30l.5 27l.5 -17l.5 16l.5 -18l.5 15l.5 -29l.5 32l.5 -15l.5 19l.5 -18l.5 18l.5 -23l.5 21l.5 -21l.5 21l.5 -20l.5 12l.5 -10l.5 9l.5 -8l.5 13l.5 -29l.5 30l.5 -14l.5 11l.5 -10l.5 11l.5 -17l.5 15l.5 -15l.5 26l.5 -21l.5 15l.5 -14l.5 10l.5 -9l.5 29l.5 -30l.5 8l.5 -9l.5 14l.5 -14l.5 15l.5 -17l.5 17l.5 -15l.5 11l.5 -19l.5 27l.5 -18l.5 20l.5 -20l.5 16l.5 -30l.5 26l.5 -7l.5 8l.5 -15l.5 21l.5 -16l.5 14l.5 -12l.5 9l.5 -11l.5 17l.5 -15l.5 11M2498.5 800l.5 -8l.5 22l.5 -32l.5 29l.5 -15l.5 19l.5 -22l.5 17l.5 -19l.5 23l.5 -21l.5 8l.5 -14l.5 20l.5 -21l.5 17l.5 -14l.5 17l.5 -22l.5 20l.5 -14l.5 7l.5 -13l.5 14l.5 -16l.5 16l.5 -19l.5 20l.5 -15l.5 14l.5 -8l.5 16l.5 -17l.5 15l.5 -15l.5 15l.5 -15l.5 20l.5 -16l.5 15l.5 -15l.5 16l.5 -20l.5 17l.5 -17l.5 19l.5 -23l.5 22l.5 -14l.5 12l.5 -9l.5 17l.5 -15l.5 11l.5 -21l.5 20l.5 -12l.5 17l.5 -16l.5 15l.5 -28l.5 21l.5 -10l.5 24l.5 -23l.5 13l.5 -34l.5 31l.5 -9l.5 21l.5 -20l.5 9l.5 -11l.5 16l.5 -18l.5 16l.5 -15l.5 17l.5 -19l.5 24l.5 -24l.5 11l.5 -12l.5 18l.5 -28l.5 24l.5 -10l.5 11l.5 -12l.5 14l.5 -18l.5 13l.5 -13l.5 13l.5 -11l.5 10l.5 -13l.5 13l.5 -12l.5 16l.5 -16l.5 16l.5 -22l.5 21l.5 -16l.5 23l.5 -19l.5 29l.5 -33l.5 21l.5 -24l.5 19l.5 -9l.5 8l.5 -29l.5 41l.5 -29l.5 19l.5 -12l.5 16l.5 -19l.5 29l.5 -27l.5 14l.5 -9l.5 23l.5 -26l.5 10l.5 -23l.5 26l.5 -27l.5 31l.5 -17l.5 8l.5 -10l.5 8l.5 -11l.5 11l.5 -8l.5 9l.5 -10l.5 12l.5 -19l.5 20l.5 -16l.5 19l.5 -12l.5 15l.5 -19l.5 11l.5 -14l.5 17l.5 -16l.5 19l.5 -17M2585.5 800l.5 -4l.5 19l.5 -26l.5 22l.5 -17" stroke="#e8b53c" stroke-width="1.5" fill="none" stroke-linejoin="bevel"/>
<path d="M662.2 880l.5 -5l.5 8l.5 -6l.5 20l.5 -20l.5 5l.5 -10l.5 17l.5 -19l.5 11l.5 -10l.5 14l.5 -14l.5 16l.5 -14l.5 9l.5 -9l.5 12l.5 -10l.5 10l.5 -11l.5 22l.5 -20l.5 10l.5 -13l.5 10l.5 -7l.5 6l.5 -10l.5 22l.5 -17l.5 10l.5 -13l.5 13l.5 -16l.5 16l.5 -14l.5 13l.5 -10l.5 13l.5 -13l.5 9l.5 -9l.5 10l.5 -16l.5 16l.5 -8l.5 8l.5 -7l.5 9l.5 -10l.5 8l.5 -11l.5 14l.5 -17l.5 17l.5 -16l.5 12l.5 -10l.5 12l.5 -17l.5 18l.5 -11l.5 6l.5 -12l.5 11l.5 -12l.5 13l.5 -6l.5 12l.5 -12l.5 6l.5 -12l.5 15l.5 -14l.5 11l.5 -5l.5 11l.5 -13l.5 12l.5 -9l.5 6l.5 -8l.5 10l.5 -8l.5 12l.5 -25l.5 19l.5 -18l.5 22l.5 -14l.5 10l.5 -8l.5 15l.5 -25l.5 16l.5 -6l.5 8l.5 -9M964.0 880l.5 -4l.5 10l.5 -11l.5 9l.5 -5l.5 6l.5 -6l.5 10l.5 -19l.5 23l.5 -16l.5 10l.5 -11l.5 8l.5 -9l.5 15l.5 -13l.5 6l.5 -9l.5 7l.5 -8l.5 13l.5 -9l.5 12l.5 -16l.5 11l.5 -8l.5 20l.5 -20l.5 18l.5 -19l.5 7l.5 -7l.5 7l.5 -6l.5 9l.5 -12l.5 10l.5 -14l.5 18l.5 -10l.5 6l.5 -5l.5 8l.5 -7l.5 5l.5 -19l.5 22l.5 -10l.5 8l.5 -8l.5 9l.5 -8l.5 8l.5 -13l.5 15l.5 -16l.5 11l.5 -19l.5 24l.5 -14l.5 13l.5 -13l.5 10l.5 -8l.5 8l.5 -10l.5 23l.5 -29l.5 16l.5 -7l.5 14l.5 -19l.5 12l.5 -7l.5 5l.5 -6l.5 5l.5 -10l.5 23l.5 -16l.5 9l.5 -13l.5 10l.5 -9l.5 11l.5 -10l.5 12l.5 -13l.5 19l.5 -22l.5 12l.5 -7l.5 16l.5 -25l.5 17l.5 -13l.5 10l.5 -9l.5 10l.5 -9l.5 9l.5 -12l.5 13l.5 -20l.5 17l.5 -7l.5 8l.5 -5l.5 8l.5 -8l.5 8l.5 -10l.5 19l.5 -22l.5 11l.5 -8l.5 11l.5 -16l.5 17l.5 -11l.5 8l.5 -10l.5 9l.5 -10l.5 12l.5 -17l.5 25l.5 -20l.5 10l.5 -12l.5 12l.5 -11l.5 25l.5 -24l.5 8l.5 -7l.5 14l.5 -13l.5 7l.5 -8l.5 12l.5 -16l.5 14l.5 -8l.5 9l.5 -11l.5 8l.5 -5l.5 6l.5 -6l.5 6M1043.0 880l.5 -13l.5 22l.5 -15l.5 8l.5 -7l.5 11l.5 -13l.5 12l.5 -9l.5 9l.5 -8l.5 8l.5 -9M1053.0 880l.5 -5l.5 7l.5 -9l.5 10l.5 -10l.5 12l.5 -16l.5 14l.5 -9l.5 16l.5 -17l.5 11l.5 -9l.5 9l.5 -8l.5 9l.5 -12l.5 7l.5 -10l.5 22l.5 -18l.5 16l.5 -16l.5 12l.5 -15l.5 10l.5 -6l.5 7l.5 -9l.5 9l.5 -7l.5 9l.5 -12l.5 13l.5 -8l.5 14l.5 -13l.5 8l.5 -8l.5 20l.5 -26l.5 15l.5 -17l.5 25l.5 -17l.5 13l.5 -14l.5 8l.5 -7l.5 12l.5 -14l.5 8l.5 -11l.5 17l.5 -12l.5 11l.5 -13l.5 6l.5 -20l.5 26l.5 -17l.5 12l.5 -6l.5 5l.5 -7l.5 8l.5 -12l.5 12l.5 -9l.5 7l.5 -7l.5 8l.5 -8l.5 8l.5 -7l.5 13l.5 -27l.5 24l.5 -17l.5 15l.5 -10l.5 13l.5 -8l.5 16l.5 -22l.5 14l.5 -9l.5 9l.5 -11l.5 11l.5 -8l.5 6l.5 -7l.5 5l.5 -6l.5 7l.5 -16l.5 28l.5 -19l.5 6l.5 -5l.5 6l.5 -6l.5 12l.5 -11l.5 5l.5 -11l.5 13l.5 -9l.5 7l.5 -11l.5 23l.5 -26l.5 13l.5 -9l.5 24l.5 -20l.5 6l.5 -7l.5 12l.5 -13l.5 13l.5 -12l.5 13l.5 -12l.5 7l.5 -22l.5 19l.5 -20l.5 27l.5 -15l.5 9l.5 -6l.5 9l.5 -8l.5 10l.5 -10l.5 9l.5 -12l.5 13l.5 -9l.5 8l.5 -10l.5 8l.5 -11l.5 13l.5 -7l.5 5l.5 -14l.5 17l.5 -9l.5 13l.5 -18l.5 10l.5 -9l.5 9l.5 -9l.5 22l.5 -22l.5 12l.5 -13l.5 13l.5 -10l.5 13l.5 -14l.5 10l.5 -16l.5 26l.5 -19l.5 6l.5 -5l.5 19l.5 -27l.5 16l.5 -8l.5 7l.5 -7l.5 13l.5 -25l.5 21l.5 -12l.5 12l.5 -15l.5 13l.5 -6l.5 6l.5 -16l.5 21l.5 -10l.5 8l.5 -16l.5 20l.5 -14l.5 9l.5 -11l.5 9l.5 -8l.5 19l.5 -18l.5 16l.5 -21l.5 11l.5 -8l.5 9l.5 -9l.5 14l.5 -17l.5 12M1212.0 880l.5 -6l.5 14l.5 -12l.5 7l.5 -9l.5 8l.5 -17l.5 17l.5 -7l.5 8l.5 -7l.5 9l.5 -13l.5 9l.5 -6l.5 7l.5 -6l.5 12l.5 -22l.5 26l.5 -27l.5 18M1233.0 880l.5 -8l.5 14l.5 -9l.5 10l.5 -10l.5 6l.5 -16l.5 23l.5 -16l.5 10l.5 -8l.5 8l.5 -7l.5 6l.5 -14l.5 19M1266.0 880l.5 -7l.5 9l.5 -6l.5 18l.5 -19l.5 9l.5 -9l.5 8l.5 -6l.5 7l.5 -10l.5 9l.5 -16l.5 19l.5 -9l.5 9l.5 -8l.5 9l.5 -24l.5 26l.5 -14l.5 12l.5 -10l.5 11l.5 -10l.5 18l.5 -22l.5 21l.5 -20l.5 12l.5 -11l.5 9l.5 -17l.5 13l.5 -5l.5 5l.5 -8l.5 21l.5 -20l.5 12l.5 -17l.5 13l.5 -17l.5 23l.5 -12l.5 13l.5 -13l.5 8l.5 -12l.5 11l.5 -8l.5 10l.5 -11l.5 11l.5 -9l.5 9l.5 -13l.5 9l.5 -10l.5 11l.5 -9l.5 7l.5 -10l.5 18l.5 -16l.5 9l.5 -9l.5 13l.5 -13l.5 9l.5 -14l.5 17l.5 -12l.5 17l.5 -21l.5 16l.5 -7l.5 11l.5 -12l.5 6l.5 -10l.5 13l.5 -10l.5 9M1311.5 880l.5 -3l.5 5l.5 -6l.5 9l.5 -12l.5 14l.5 -10l.5 8M1440.0 880l.5 -18l.5 21l.5 -11l.5 12l.5 -7l.5 13l.5 -16l.5 20l.5 -18l.5 7l.5 -10l.5 19l.5 -17l.5 16l.5 -17l.5 10l.5 -9l.5 8l.5 -10l.5 11l.5 -16l.5 16l.5 -11l.5 8l.5 -6l.5 15M1486.0 880l.5 -3l.5 6l.5 -6l.5 5l.5 -6l.5 11l.5 -11l.5 7l.5 -14l.5 24l.5 -18l.5 10l.5 -11l.5 12l.5 -14l.5 13l.5 -10l.5 8l.5 -13l.5 22l.5 -18l.5 13l.5 -9l.5 12l.5 -13l.5 8l.5 -5l.5 13l.5 -16l.5 10l.5 -11l.5 13l.5 -13l.5 20l.5 -17l.5 5l.5 -12l.5 12l.5 -7l.5 7l.5 -6l.5 17l.5 -21l.5 13l.5 -12l.5 10l.5 -14l.5 11l.5 -11l.5 11l.5 -8l.5 8l.5 -11l.5 19l.5 -19l.5 14l.5 -21l.5 26l.5 -12l.5 13l.5 -13l.5 20l.5 -20l.5 5l.5 -10l.5 12l.5 -7l.5 21l.5 -35l.5 32l.5 -19l.5 5l.5 -7l.5 7l.5 -21l.5 26l.5 -12l.5 14l.5 -14l.5 10l.5 -9l.5 18l.5 -23l.5 14l.5 -7l.5 9l.5 -18l.5 15l.5 -8l.5 8l.5 -21l.5 20l.5 -8l.5 11l.5 -10l.5 8l.5 -8l.5 10l.5 -12l.5 18l.5 -14l.5 8l.5 -8l.5 11l.5 -21l.5 19l.5 -11l.5 23l.5 -21l.5 18l.5 -18l.5 10l.5 -10l.5 8l.5 -11l.5 13l.5 -13l.5 10l.5 -10l.5 8l.5 -7l.5 9l.5 -8l.5 6l.5 -8l.5 9l.5 -15l.5 21l.5 -16l.5 10l.5 -9l.5 7l.5 -6l.5 7l.5 -8l.5 11l.5 -9l.5 11l.5 -13l.5 11l.5 -14l.5 10l.5 -14l.5 15l.5 -9l.5 7l.5 -7l.5 9l.5 -8l.5 15l.5 -17l.5 12l.5 -10l.5 11l.5 -11l.5 11l.5 -13l.5 16l.5 -14l.5 18l.5 -21l.5 12l.5 -18l.5 21l.5 -9l.5 6l.5 -16l.5 17l.5 -9l.5 13l.5 -16l.5 13l.5 -9l.5 8l.5 -5l.5 13l.5 -13l.5 5l.5 -5l.5 14l.5 -14l.5 19l.5 -24l.5 12l.5 -6l.5 9l.5 -13l.5 14l.5 -12l.5 7l.5 -22l.5 22l.5 -8l.5 6l.5 -9l.5 14l.5 -15l.5 24l.5 -24l.5 9l.5 -7l.5 7l.5 -11l.5 11l.5 -8l.5 8l.5 -9l.5 11l.5 -8l.5 5l.5 -8l.5 23l.5 -22l.5 13l.5 -14l.5 12l.5 -20l.5 16l.5 -14l.5 16l.5 -9l.5 7M1626.5 880l.5 -2l.5 7l.5 -10l.5 9l.5 -9l.5 11l.5 -8l.5 5l.5 -6l.5 15l.5 -14l.5 7l.5 -10l.5 12l.5 -15l.5 13l.5 -21l.5 19l.5 -10l.5 18l.5 -19l.5 13l.5 -11l.5 11l.5 -9l.5 6l.5 -5l.5 9l.5 -14l.5 13l.5 -12l.5 17l.5 -28l.5 22l.5 -8l.5 12l.5 -13l.5 16l.5 -16l.5 8l.5 -8l.5 8l.5 -9l.5 8l.5 -8l.5 10l.5 -7M1695.5 880l.5 -6l.5 8l.5 -16l.5 17l.5 -9l.5 17l.5 -14M1703.0 880l.5 -7l.5 11l.5 -11l.5 12l.5 -19l.5 25l.5 -13M1713.5 880l.5 -4l.5 8l.5 -7l.5 7l.5 -7l.5 8l.5 -6l.5 5l.5 -8l.5 24l.5 -27l.5 13l.5 -11l.5 15l.5 -13l.5 9l.5 -7l.5 5l.5 -8l.5 7l.5 -9l.5 10l.5 -20l.5 21l.5 -12l.5 9l.5 -6l.5 6l.5 -14l.5 13l.5 -5l.5 13l.5 -14l.5 8l.5 -10l.5 11l.5 -14l.5 17l.5 -17l.5 13l.5 -6l.5 16l.5 -19l.5 10l.5 -8l.5 10l.5 -14l.5 17l.5 -13l.5 11l.5 -20l.5 19l.5 -16l.5 17l.5 -19l.5 15l.5 -7l.5 6l.5 -9l.5 9l.5 -7l.5 6l.5 -10l.5 17l.5 -13l.5 12l.5 -12l.5 8l.5 -9l.5 16l.5 -13l.5 6l.5 -8l.5 7l.5 -18l.5 20l.5 -9l.5 10l.5 -10l.5 7l.5 -16l.5 18l.5 -10l.5 8l.5 -10l.5 8l.5 -13l.5 18l.5 -12l.5 8l.5 -5l.5 8l.5 -9l.5 7l.5 -7l.5 9l.5 -13l.5 11l.5 -10l.5 14l.5 -8l.5 6l.5 -6l.5 13l.5 -17l.5 19l.5 -17l.5 8l.5 -11l.5 15l.5 -13l.5 7l.5 -6l.5 8l.5 -9l.5 7l.5 -7l.5 9l.5 -10l.5 11l.5 -10l.5 7l.5 -8l.5 6l.5 -18l.5 20l.5 -13l.5 12l.5 -11l.5 14l.5 -13l.5 12l.5 -10l.5 16l.5 -18l.5 11l.5 -7l.5 7l.5 -9l.5 22l.5 -24l.5 20l.5 -15l.5 12l.5 -13l.5 7l.5 -9l.5 11l.5 -14l.5 14l.5 -11l.5 13l.5 -12l.5 14l.5 -25l.5 21l.5 -9l.5 16l.5 -15l.5 14l.5 -11l.5 10l.5 -13l.5 8l.5 -7l.5 6l.5 -9l.5 12l.5 -13l.5 9l.5 -5l.5 9l.5 -9l.5 6l.5 -12l.5 14l.5 -8l.5 8l.5 -12l.5 15l.5 -12l.5 8l.5 -18l.5 24l.5 -15l.5 6l.5 -6l.5 5l.5 -6l.5 13l.5 -13l.5 9l.5 -8l.5 8l.5 -7l.5 7l.5 -9l.5 11l.5 -12l.5 15l.5 -11l.5 6l.5 -8l.5 7l.5 -18l.5 20l.5 -14l.5 16l.5 -10l.5 8l.5 -11l.5 13l.5 -8l.5 7l.5 -10l.5 23l.5 -21l.5 6l.5 -8l.5 7l.5 -7l.5 11l.5 -11l.5 7l.5 -11l.5 14l.5 -19l.5 18l.5 -10l.5 10l.5 -8l.5 11l.5 -11l.5 6l.5 -5l.5 7l.5 -9l.5 7l.5 -11l.5 13l.5 -11l.5 16l.5 -16l.5 9l.5 -16l.5 21l.5 -13l.5 22l.5 -24l.5 14l.5 -8l.5 6l.5 -17l.5 20l.5 -12l.5 13l.5 -16l.5 11l.5 -6l.5 7l.5 -13l.5 13l.5 -10l.5 11l.5 -23l.5 20l.5 -7l.5 9l.5 -7l.5 14l.5 -15l.5 8l.5 -11l.5 9l.5 -7l.5 9l.5 -9l.5 5l.5 -6l.5 12l.5 -16l.5 11l.5 -7l.5 15l.5 -13l.5 11l.5 -12l.5 9l.5 -10l.5 10l.5 -8l.5 9l.5 -10l.5 13l.5 -17l.5 15l.5 -12l.5 19l.5 -16l.5 12l.5 -11l.5 14l.5 -17l.5 11l.5 -5l.5 5l.5 -5l.5 12l.5 -13l.5 13l.5 -19l.5 12l.5 -9l.5 9l.5 -19l.5 21l.5 -12l.5 15l.5 -16l.5 9l.5 -11l.5 9l.5 -8l.5 10l.5 -9l.5 6l.5 -6l.5 13l.5 -14l.5 8l.5 -7l.5 11l.5 -12l.5 8l.5 -9l.5 8l.5 -6l.5 8l.5 -12l.5 19l.5 -17l.5 9l.5 -8l.5 11l.5 -16l.5 13l.5 -6l.5 16l.5 -19l.5 13l.5 -11l.5 9l.5 -8l.5 10l.5 -9l.5 15l.5 -16l.5 13l.5 -12l.5 8l.5 -13l.5 10l.5 -6l.5 7l.5 -18l.5 20l.5 -14l.5 16l.5 -19l.5 20l.5 -15l.5 15l.5 -11l.5 6l.5 -14l.5 15l.5 -9l.5 7l.5 -7l.5 10l.5 -13l.5 14l.5 -10l.5 11l.5 -14l.5 11l.5 -8l.5 6l.5 -9l.5 11l.5 -14l.5 13l.5 -12l.5 11l.5 -11l.5 13l.5 -13l.5 15l.5 -13l.5 17l.5 -20M2059.0 880l.5 -4l.5 9l.5 -14l.5 21l.5 -18l.5 9l.5 -7l.5 5l.5 -5l.5 6l.5 -13l.5 16l.5 -9l.5 5l.5 -5l.5 7l.5 -8l.5 13l.5 -16l.5 11l.5 -13l.5 18l.5 -13l.5 8l.5 -11l.5 11l.5 -8l.5 5l.5 -11l.5 23l.5 -20l.5 16l.5 -15l.5 14l.5 -14l.5 11l.5 -12l.5 15l.5 -21l.5 17l.5 -10l.5 17l.5 -20l.5 11l.5 -8l.5 9l.5 -14l.5 25l.5 -20l.5 10l.5 -20l.5 20l.5 -11l.5 13l.5 -15l.5 18l.5 -18l.5 12l.5 -7l.5 11l.5 -13l.5 14l.5 -14l.5 17l.5 -13l.5 8l.5 -9l.5 12l.5 -12l.5 9l.5 -7l.5 14l.5 -21l.5 18l.5 -17l.5 17l.5 -16l.5 12l.5 -16l.5 21l.5 -26l.5 23l.5 -13l.5 10l.5 -9l.5 8l.5 -7l.5 5l.5 -7l.5 9l.5 -10l.5 11l.5 -8l.5 8l.5 -6l.5 21l.5 -22l.5 13l.5 -13l.5 6l.5 -7l.5 10l.5 -8l.5 11l.5 -21l.5 16l.5 -11l.5 12l.5 -14l.5 28l.5 -36l.5 21l.5 -6l.5 5l.5 -19l.5 24l.5 -17l.5 19l.5 -25l.5 23l.5 -16l.5 11l.5 -17l.5 16l.5 -5l.5 20l.5 -24l.5 10l.5 -6l.5 5l.5 -8l.5 8l.5 -6l.5 15l.5 -18l.5 10l.5 -6l.5 10l.5 -10l.5 6l.5 -8l.5 13l.5 -10l.5 6l.5 -7l.5 9l.5 -18l.5 16l.5 -22l.5 26l.5 -20l.5 15l.5 -9l.5 11l.5 -13l.5 15l.5 -10l.5 6l.5 -9l.5 10l.5 -13l.5 11l.5 -7l.5 6l.5 -6l.5 9l.5 -8l.5 7l.5 -6l.5 7l.5 -9l.5 7l.5 -10l.5 16l.5 -25l.5 23l.5 -15l.5 13l.5 -11l.5 12l.5 -7l.5 8l.5 -11l.5 12l.5 -13l.5 10l.5 -9l.5 7l.5 -9l.5 16l.5 -20l.5 13l.5 -17l.5 29l.5 -27l.5 26l.5 -17l.5 9l.5 -10l.5 8l.5 -13l.5 11l.5 -6l.5 8l.5 -10l.5 19l.5 -16l.5 7l.5 -10l.5 9l.5 -6l.5 7l.5 -7l.5 9l.5 -18l.5 17l.5 -12l.5 10l.5 -7l.5 14l.5 -18l.5 13l.5 -12l.5 10l.5 -9l.5 10l.5 -10l.5 16l.5 -13l.5 6l.5 -6l.5 13l.5 -15l.5 10l.5 -8l.5 20l.5 -27l.5 14l.5 -13l.5 13l.5 -6l.5 7l.5 -16l.5 16l.5 -11l.5 8l.5 -8l.5 9l.5 -9l.5 10l.5 -9l.5 9l.5 -9l.5 12l.5 -14l.5 11l.5 -8l.5 16l.5 -16l.5 6l.5 -5l.5 7l.5 -14l.5 14l.5 -8l.5 9l.5 -6l.5 21l.5 -29l.5 15l.5 -7l.5 6l.5 -14l.5 16l.5 -16l.5 17l.5 -9l.5 6l.5 -6l.5 5l.5 -8l.5 8l.5 -6l.5 10l.5 -13l.5 12l.5 -15l.5 26l.5 -21l.5 12l.5 -11l.5 6l.5 -7l.5 13l.5 -18l.5 20l.5 -13l.5 18l.5 -20l.5 10l.5 -8l.5 5l.5 -13l.5 15l.5 -7l.5 6l.5 -8l.5 7l.5 -6l.5 14l.5 -14l.5 8l.5 -10l.5 8l.5 -14l.5 13l.5 -8l.5 8l.5 -7l.5 19l.5 -21l.5 24l.5 -19l.5 9l.5 -9l.5 12l.5 -15l.5 9l.5 -11l.5 10l.5 -15l.5 16l.5 -13l.5 12l.5 -13l.5 13l.5 -11l.5 9l.5 -20l.5 20l.5 -6l.5 7l.5 -7l.5 8l.5 -10l.5 12l.5 -9l.5 12l.5 -10l.5 7l.5 -9l.5 8l.5 -5l.5 6l.5 -8l.5 8l.5 -9l.5 8l.5 -5l.5 14l.5 -14l.5 6l.5 -9l.5 10l.5 -7l.5 7l.5 -13l.5 14l.5 -8l.5 9l.5 -8l.5 7l.5 -10l.5 9l.5 -11l.5 15l.5 -20l.5 15l.5 -8l.5 7l.5 -8l.5 11l.5 -10l.5 8l.5 -15l.5 15l.5 -9l.5 9l.5 -7l.5 6l.5 -7l.5 11l.5 -9l.5 7l.5 -7l.5 8l.5 -15l.5 16l.5 -13l.5 14l.5 -11l.5 8l.5 -7l.5 11l.5 -16l.5 12l.5 -8l.5 8l.5 -9l.5 9l.5 -7l.5 7l.5 -12l.5 13l.5 -9l.5 15l.5 -17l.5 14l.5 -16l.5 12l.5 -9l.5 6l.5 -6l.5 6l.5 -6l.5 7l.5 -8l.5 17l.5 -16l.5 9l.5 -11l.5 9l.5 -6l.5 11l.5 -16l.5 15l.5 -11l.5 13l.5 -18l.5 12l.5 -8l.5 10l.5 -13l.5 10l.5 -6l.5 13l.5 -23l.5 18l.5 -9l.5 14l.5 -16l.5 7l.5 -10l.5 10l.5 -7l.5 14l.5 -19l.5 12l.5 -6l.5 11l.5 -9l.5 6l.5 -7l.5 14l.5 -18l.5 14l.5 -11l.5 6l.5 -7l.5 11l.5 -9l.5 15M2498.5 880l.5 -3l.5 5l.5 -5l.5 4l.5 -7l.5 22l.5 -24l.5 10l.5 -9l.5 7l.5 -21l.5 25l.5 -13l.5 21l.5 -19l.5 22l.5 -26l.5 20l.5 -26l.5 20l.5 -10l.5 8l.5 -17l.5 20l.5 -13l.5 11l.5 -6l.5 10l.5 -11l.5 7l.5 -7l.5 7l.5 -7l.5 11l.5 -10l.5 9l.5 -9l.5 7l.5 -9l.5 17l.5 -15l.5 11l.5 -13l.5 8l.5 -8l.5 8l.5 -12l.5 15l.5 -17l.5 17l.5 -9l.5 8l.5 -9l.5 10l.5 -9l.5 13l.5 -13l.5 13l.5 -11l.5 12l.5 -15l.5 6l.5 -9l.5 12l.5 -7l.5 10l.5 -18l.5 16l.5 -8l.5 8l.5 -11l.5 13l.5 -9l.5 6l.5 -8l.5 12l.5 -10l.5 11l.5 -12l.5 15l.5 -28l.5 25l.5 -15l.5 10l.5 -7l.5 13l.5 -17l.5 11l.5 -9l.5 9l.5 -11l.5 11l.5 -4l.5 10l.5 -12l.5 7l.5 -6l.5 6l.5 -12l.5 15l.5 -17l.5 15l.5 -18l.5 15l.5 -6l.5 7l.5 -6l.5 9l.5 -9l.5 7l.5 -9l.5 10l.5 -11l.5 24l.5 -20l.5 4l.5 -8l.5 19l.5 -19l.5 10l.5 -9l.5 10l.5 -8l.5 5l.5 -18l.5 19l.5 -19l.5 17l.5 -6l.5 8l.5 -7l.5 5l.5 -7l.5 13l.5 -11l.5 10l.5 -11l.5 6l.5 -5l.5 5l.5 -6l.5 9l.5 -10l.5 23l.5 -22l.5 8l.5 -8l.5 8l.5 -13l.5 13l.5 -8l.5 13l.5 -11l.5 7l.5 -6M2585.5 880l.5 -4l.5 14l.5 -12l.5 6l.5 -9" stroke="#e08a2e" stroke-width="1.5" fill="none" stroke-linejoin="bevel"/>
<path d="M662.2 975l.5 -10l.5 13l.5 -6l.5 15l.5 -16l.5 7l.5 -6l.5 5l.5 -5l.5 7l.5 -8l.5 8l.5 -10l.5 22l.5 -19l.5 6l.5 -6l.5 15l.5 -20l.5 24l.5 -42l.5 33l.5 -11l.5 10l.5 -9l.5 7l.5 -7l.5 8l.5 -19l.5 19l.5 -9l.5 10l.5 -7l.5 9l.5 -16l.5 19l.5 -13l.5 11l.5 -11l.5 16l.5 -16l.5 9l.5 -8l.5 7l.5 -9l.5 12l.5 -12l.5 21l.5 -23l.5 6l.5 -10l.5 9l.5 -6l.5 9l.5 -14l.5 16l.5 -18l.5 18l.5 -11l.5 18l.5 -17l.5 10l.5 -8l.5 6l.5 -9l.5 11l.5 -7l.5 6l.5 -6l.5 9l.5 -19l.5 26l.5 -17l.5 7l.5 -7l.5 9l.5 -12l.5 11l.5 -13l.5 11l.5 -8l.5 17l.5 -28l.5 34l.5 -20l.5 5l.5 -9l.5 16l.5 -15l.5 10l.5 -10l.5 13l.5 -20l.5 18l.5 -12l.5 16l.5 -15l.5 11l.5 -8M964.0 975l.5 -3l.5 12l.5 -19l.5 21l.5 -18l.5 18l.5 -14l.5 8l.5 -7l.5 5l.5 -10l.5 12l.5 -7l.5 5l.5 -7l.5 12l.5 -13l.5 12l.5 -12l.5 13l.5 -22l.5 16l.5 -6l.5 15l.5 -21l.5 21l.5 -14l.5 9l.5 -8l.5 20l.5 -23l.5 12l.5 -9l.5 7l.5 -15l.5 21l.5 -14l.5 8l.5 -16l.5 14l.5 -10l.5 16l.5 -20l.5 14l.5 -10l.5 9l.5 -6l.5 16l.5 -17l.5 7l.5 -11l.5 16l.5 -24l.5 24l.5 -11l.5 9l.5 -11l.5 10l.5 -12l.5 19l.5 -19l.5 11l.5 -9l.5 16l.5 -13l.5 6l.5 -8l.5 15l.5 -12l.5 10l.5 -10l.5 7l.5 -5l.5 13l.5 -17l.5 10l.5 -11l.5 11l.5 -12l.5 12l.5 -8l.5 8l.5 -11l.5 14l.5 -12l.5 10l.5 -9l.5 9l.5 -23l.5 24l.5 -13l.5 9l.5 -9l.5 24l.5 -25l.5 13l.5 -9l.5 6l.5 -14l.5 17l.5 -15l.5 13l.5 -21l.5 17l.5 -12l.5 13l.5 -17l.5 23l.5 -18l.5 18l.5 -15l.5 7l.5 -12l.5 16l.5 -10l.5 16l.5 -22l.5 17l.5 -9l.5 6l.5 -6l.5 6l.5 -9l.5 9l.5 -6l.5 8l.5 -11l.5 10l.5 -9l.5 8l.5 -7l.5 8l.5 -7l.5 10l.5 -12l.5 12l.5 -17l.5 13l.5 -13l.5 21l.5 -30l.5 25l.5 -10l.5 17l.5 -22l.5 11l.5 -8l.5 8l.5 -9l.5 8l.5 -23l.5 23M1043.0 975l.5 -2l.5 6l.5 -8l.5 6l.5 -10l.5 11l.5 -8l.5 7l.5 -6l.5 12l.5 -11l.5 7l.5 -6M1053.0 975l.5 -5l.5 10l.5 -13l.5 18l.5 -18l.5 11l.5 -12l.5 13l.5 -8l.5 8l.5 -11l.5 14l.5 -10l.5 8l.5 -19l.5 24l.5 -17l.5 27l.5 -35l.5 36l.5 -20l.5 5l.5 -6l.5 12l.5 -19l.5 16l.5 -12l.5 14l.5 -14l.5 12l.5 -14l.5 11l.5 -9l.5 7l.5 -12l.5 10l.5 -14l.5 16l.5 -7l.5 10l.5 -10l.5 9l.5 -10l.5 5l.5 -10l.5 17l.5 -12l.5 7l.5 -12l.5 16l.5 -12l.5 13l.5 -13l.5 11l.5 -13l.5 17l.5 -13l.5 7l.5 -16l.5 15l.5 -6l.5 11l.5 -17l.5 14l.5 -13l.5 13l.5 -7l.5 12l.5 -16l.5 17l.5 -14l.5 22l.5 -27l.5 18l.5 -18l.5 11l.5 -11l.5 12l.5 -8l.5 11l.5 -17l.5 17l.5 -13l.5 11l.5 -12l.5 10l.5 -7l.5 8l.5 -8l.5 14l.5 -16l.5 12l.5 -9l.5 8l.5 -10l.5 10l.5 -8l.5 9l.5 -23l.5 22l.5 -12l.5 11l.5 -8l.5 9l.5 -8l.5 7l.5 -12l.5 13l.5 -8l.5 18l.5 -19l.5 8l.5 -6l.5 16l.5 -20l.5 11l.5 -16l.5 17l.5 -7l.5 7l.5 -10l.5 14l.5 -17l.5 20l.5 -18l.5 10l.5 -9l.5 17l.5 -17l.5 16l.5 -14l.5 8l.5 -13l.5 13l.5 -8l.5 12l.5 -15l.5 9l.5 -16l.5 19l.5 -15l.5 11l.5 -16l.5 18l.5 -19l.5 16l.5 -8l.5 7l.5 -5l.5 9l.5 -22l.5 24l.5 -13l.5 9l.5 -6l.5 16l.5 -20l.5 11l.5 -8l.5 15l.5 -13l.5 7l.5 -17l.5 19l.5 -14l.5 11l.5 -11l.5 20l.5 -17l.5 11l.5 -13l.5 12l.5 -9l.5 10l.5 -10l.5 5l.5 -11l.5 15l.5 -16l.5 12l.5 -11l.5 13l.5 -10l.5 12l.5 -18l.5 14l.5 -11l.5 13l.5 -13l.5 19l.5 -18l.5 11l.5 -11l.5 12l.5 -11l.5 19l.5 -20l.5 13l.5 -10l.5 9l.5 -16l.5 19l.5 -9l.5 5l.5 -10l.5 15l.5 -11l.5 9M1212.0 975l.5 -4l.5 10l.5 -11l.5 7l.5 -10l.5 13l.5 -10l.5 11l.5 -10l.5 13l.5 -15l.5 15l.5 -15l.5 8l.5 -12l.5 13l.5 -8l.5 8l.5 -11l.5 13l.5 -8l.5 21M1233.0 975l.5 -4l.5 6l.5 -8l.5 10l.5 -21l.5 22l.5 -8l.5 8l.5 -9l.5 8l.5 -11l.5 10l.5 -6l.5 9l.5 -10l.5 7M1266.0 975l.5 -3l.5 6l.5 -6l.5 7l.5 -11l.5 10l.5 -7l.5 14l.5 -14l.5 15l.5 -16l.5 8l.5 -11l.5 18l.5 -16l.5 16l.5 -16l.5 15l.5 -14l.5 14l.5 -11l.5 16l.5 -16l.5 14l.5 -20l.5 28l.5 -22l.5 9l.5 -14l.5 19l.5 -17l.5 13l.5 -9l.5 10l.5 -15l.5 12l.5 -7l.5 20l.5 -25l.5 22l.5 -16l.5 6l.5 -12l.5 13l.5 -11l.5 11l.5 -16l.5 13l.5 -8l.5 8l.5 -11l.5 9l.5 -6l.5 7l.5 -20l.5 20l.5 -9l.5 12l.5 -14l.5 15l.5 -16l.5 20l.5 -21l.5 11l.5 -11l.5 11l.5 -6l.5 8l.5 -12l.5 11l.5 -10l.5 9l.5 -7l.5 10l.5 -12l.5 10l.5 -13l.5 17l.5 -11l.5 13l.5 -16l.5 8l.5 -10l.5 18M1311.5 975l.5 -11l.5 17l.5 -10l.5 16l.5 -14l.5 9l.5 -14l.5 9M1440.0 975l.5 -3l.5 12l.5 -13l.5 8l.5 -17l.5 16l.5 -11l.5 9l.5 -13l.5 18l.5 -11l.5 16l.5 -18l.5 11l.5 -13l.5 17l.5 -15l.5 8l.5 -7l.5 10l.5 -13l.5 11l.5 -11l.5 13l.5 -21l.5 19M1486.0 975l.5 -9l.5 16l.5 -11l.5 9l.5 -11l.5 21l.5 -22l.5 10l.5 -14l.5 19l.5 -17l.5 12l.5 -10l.5 11l.5 -15l.5 24l.5 -15l.5 8l.5 -15l.5 21l.5 -17l.5 15l.5 -24l.5 28l.5 -19l.5 13l.5 -13l.5 14l.5 -15l.5 10l.5 -12l.5 11l.5 -12l.5 16l.5 -9l.5 12l.5 -23l.5 18l.5 -11l.5 13l.5 -10l.5 8l.5 -15l.5 17l.5 -11l.5 9l.5 -13l.5 11l.5 -6l.5 6l.5 -11l.5 16l.5 -11l.5 10l.5 -10l.5 21l.5 -22l.5 10l.5 -10l.5 7l.5 -7l.5 9l.5 -11l.5 11l.5 -23l.5 28l.5 -15l.5 13l.5 -13l.5 10l.5 -9l.5 9l.5 -10l.5 18l.5 -16l.5 13l.5 -17l.5 14l.5 -16l.5 14l.5 -9l.5 9l.5 -7l.5 6l.5 -10l.5 10l.5 -19l.5 18l.5 -12l.5 19l.5 -15l.5 14l.5 -15l.5 13l.5 -15l.5 17l.5 -13l.5 19l.5 -26l.5 18l.5 -13l.5 10l.5 -9l.5 9l.5 -13l.5 11l.5 -13l.5 14l.5 -7l.5 9l.5 -12l.5 10l.5 -13l.5 18l.5 -13l.5 10l.5 -7l.5 9l.5 -11l.5 10l.5 -8l.5 13l.5 -15l.5 8l.5 -7l.5 11l.5 -12l.5 11l.5 -10l.5 16l.5 -19l.5 9l.5 -13l.5 16l.5 -8l.5 8l.5 -18l.5 21l.5 -15l.5 25l.5 -21l.5 20l.5 -18l.5 9l.5 -12l.5 12l.5 -14l.5 7l.5 -8l.5 9l.5 -11l.5 14l.5 -19l.5 16l.5 -6l.5 10l.5 -10l.5 9l.5 -13l.5 10l.5 -8l.5 10l.5 -17l.5 23l.5 -16l.5 7l.5 -8l.5 8l.5 -18l.5 17l.5 -11l.5 14l.5 -13l.5 13l.5 -15l.5 20l.5 -12l.5 8l.5 -16l.5 14l.5 -6l.5 8l.5 -11l.5 11l.5 -12l.5 22l.5 -18l.5 15l.5 -15l.5 8l.5 -6l.5 6l.5 -8l.5 10l.5 -12l.5 8l.5 -7l.5 8l.5 -8l.5 6l.5 -8l.5 8l.5 -8l.5 7l.5 -13l.5 16l.5 -13l.5 13l.5 -10l.5 15l.5 -16l.5 18l.5 -23l.5 18l.5 -10l.5 21l.5 -18l.5 8l.5 -9l.5 10l.5 -11l.5 7M1626.5 975l.5 -4l.5 8l.5 -11l.5 13l.5 -9l.5 8l.5 -14l.5 12l.5 -15l.5 29l.5 -24l.5 10l.5 -8l.5 9l.5 -9l.5 12l.5 -23l.5 23l.5 -14l.5 11l.5 -7l.5 16l.5 -19l.5 11l.5 -9l.5 10l.5 -8l.5 11l.5 -10l.5 19l.5 -27l.5 15l.5 -10l.5 12l.5 -9l.5 8l.5 -8l.5 11l.5 -11l.5 21l.5 -22l.5 9l.5 -10l.5 9l.5 -10l.5 9l.5 -6M1695.5 975l.5 -10l.5 14l.5 -7l.5 6l.5 -12l.5 12l.5 -16M1703.0 975l.5 -5l.5 21l.5 -23l.5 13l.5 -16l.5 13l.5 -5M1713.5 975l.5 -9l.5 13l.5 -6l.5 6l.5 -14l.5 20l.5 -17l.5 11l.5 -11l.5 13l.5 -7l.5 6l.5 -7l.5 7l.5 -13l.5 21l.5 -19l.5 14l.5 -17l.5 11l.5 -9l.5 8l.5 -7l.5 10l.5 -16l.5 13l.5 -17l.5 16l.5 -15l.5 16l.5 -7l.5 8l.5 -6l.5 9l.5 -13l.5 11l.5 -11l.5 14l.5 -17l.5 14l.5 -17l.5 19l.5 -8l.5 8l.5 -12l.5 14l.5 -10l.5 11l.5 -14l.5 14l.5 -13l.5 13l.5 -25l.5 25l.5 -10l.5 10l.5 -10l.5 8l.5 -11l.5 9l.5 -13l.5 13l.5 -6l.5 9l.5 -16l.5 18l.5 -16l.5 13l.5 -8l.5 9l.5 -14l.5 25l.5 -20l.5 15l.5 -16l.5 9l.5 -13l.5 13l.5 -9l.5 6l.5 -9l.5 12l.5 -8l.5 6l.5 -8l.5 8l.5 -7l.5 10l.5 -18l.5 15l.5 -8l.5 10l.5 -9l.5 9l.5 -10l.5 9l.5 -11l.5 12l.5 -8l.5 10l.5 -21l.5 17l.5 -12l.5 16l.5 -13l.5 10l.5 -21l.5 20l.5 -13l.5 13l.5 -10l.5 10l.5 -10l.5 10l.5 -8l.5 7l.5 -13l.5 15l.5 -8l.5 7l.5 -8l.5 18l.5 -26l.5 17l.5 -7l.5 17l.5 -32l.5 22l.5 -7l.5 8l.5 -8l.5 8l.5 -7l.5 14l.5 -17l.5 13l.5 -12l.5 10l.5 -14l.5 14l.5 -12l.5 11l.5 -21l.5 27l.5 -15l.5 9l.5 -12l.5 11l.5 -10l.5 7l.5 -8l.5 11l.5 -18l.5 14l.5 -7l.5 11l.5 -12l.5 13l.5 -10l.5 14l.5 -27l.5 26l.5 -17l.5 11l.5 -10l.5 9l.5 -6l.5 8l.5 -15l.5 19l.5 -12l.5 9l.5 -6l.5 7l.5 -7l.5 6l.5 -14l.5 18l.5 -15l.5 16l.5 -16l.5 13l.5 -15l.5 13l.5 -14l.5 22l.5 -22l.5 16l.5 -11l.5 15l.5 -11l.5 8l.5 -16l.5 20l.5 -16l.5 13l.5 -14l.5 12l.5 -8l.5 9l.5 -12l.5 11l.5 -9l.5 6l.5 -7l.5 14l.5 -18l.5 10l.5 -19l.5 21l.5 -14l.5 14l.5 -12l.5 12l.5 -10l.5 16l.5 -21l.5 20l.5 -20l.5 21l.5 -17l.5 11l.5 -10l.5 23l.5 -20l.5 11l.5 -25l.5 20l.5 -11l.5 12l.5 -12l.5 12l.5 -22l.5 20l.5 -7l.5 18l.5 -18l.5 16l.5 -19l.5 15l.5 -15l.5 12l.5 -8l.5 6l.5 -11l.5 11l.5 -12l.5 24l.5 -19l.5 12l.5 -14l.5 8l.5 -12l.5 20l.5 -15l.5 6l.5 -9l.5 11l.5 -14l.5 18l.5 -12l.5 16l.5 -18l.5 11l.5 -10l.5 10l.5 -7l.5 6l.5 -9l.5 18l.5 -21l.5 18l.5 -9l.5 9l.5 -11l.5 13l.5 -11l.5 10l.5 -15l.5 20l.5 -23l.5 16l.5 -8l.5 7l.5 -12l.5 16l.5 -13l.5 12l.5 -23l.5 18l.5 -18l.5 19l.5 -13l.5 17l.5 -14l.5 5l.5 -8l.5 11l.5 -9l.5 12l.5 -20l.5 19l.5 -10l.5 10l.5 -13l.5 10l.5 -14l.5 18l.5 -19l.5 14l.5 -9l.5 12l.5 -17l.5 18l.5 -8l.5 7l.5 -19l.5 20l.5 -20l.5 18l.5 -11l.5 9l.5 -5l.5 8l.5 -8l.5 7l.5 -13l.5 15l.5 -12l.5 14l.5 -9l.5 20l.5 -31l.5 23l.5 -14l.5 13l.5 -9l.5 9l.5 -12l.5 12l.5 -10l.5 13l.5 -9l.5 11l.5 -21l.5 16l.5 -8l.5 9l.5 -16l.5 11l.5 -13l.5 13l.5 -11l.5 13l.5 -9l.5 11l.5 -20l.5 19l.5 -10l.5 7l.5 -12l.5 22l.5 -27l.5 16l.5 -7l.5 18l.5 -17l.5 5l.5 -8l.5 7l.5 -5l.5 9l.5 -15l.5 19l.5 -17l.5 12l.5 -9l.5 7l.5 -8l.5 8l.5 -7l.5 10l.5 -23l.5 28l.5 -19l.5 15l.5 -12l.5 11l.5 -17l.5 14l.5 -6l.5 10l.5 -12l.5 13l.5 -17l.5 17l.5 -26l.5 22l.5 -7l.5 7l.5 -10M2059.0 975l.5 -18l.5 22l.5 -11l.5 11l.5 -6l.5 5l.5 -11l.5 14l.5 -10l.5 12l.5 -19l.5 15l.5 -11l.5 16l.5 -13l.5 8l.5 -11l.5 12l.5 -9l.5 17l.5 -29l.5 20l.5 -14l.5 21l.5 -11l.5 12l.5 -21l.5 21l.5 -14l.5 17l.5 -21l.5 12l.5 -13l.5 14l.5 -16l.5 23l.5 -22l.5 16l.5 -20l.5 15l.5 -13l.5 15l.5 -15l.5 19l.5 -14l.5 8l.5 -12l.5 12l.5 -6l.5 8l.5 -12l.5 15l.5 -14l.5 11l.5 -9l.5 18l.5 -19l.5 14l.5 -26l.5 28l.5 -12l.5 6l.5 -11l.5 13l.5 -14l.5 19l.5 -22l.5 20l.5 -20l.5 12l.5 -12l.5 11l.5 -8l.5 8l.5 -21l.5 27l.5 -18l.5 14l.5 -8l.5 7l.5 -7l.5 8l.5 -8l.5 11l.5 -10l.5 9l.5 -7l.5 7l.5 -13l.5 16l.5 -11l.5 8l.5 -10l.5 16l.5 -12l.5 8l.5 -10l.5 13l.5 -14l.5 12l.5 -19l.5 24l.5 -18l.5 13l.5 -9l.5 19l.5 -26l.5 13l.5 -17l.5 19l.5 -12l.5 10l.5 -7l.5 11l.5 -16l.5 22l.5 -19l.5 7l.5 -8l.5 16l.5 -20l.5 12l.5 -8l.5 13l.5 -16l.5 17l.5 -19l.5 15l.5 -15l.5 12l.5 -10l.5 8l.5 -14l.5 19l.5 -16l.5 16l.5 -14l.5 11l.5 -8l.5 10l.5 -11l.5 8l.5 -9l.5 15l.5 -12l.5 9l.5 -15l.5 13l.5 -6l.5 13l.5 -15l.5 10l.5 -8l.5 10l.5 -14l.5 17l.5 -13l.5 7l.5 -12l.5 20l.5 -15l.5 5l.5 -7l.5 10l.5 -15l.5 18l.5 -13l.5 12l.5 -9l.5 6l.5 -18l.5 20l.5 -9l.5 15l.5 -17l.5 11l.5 -10l.5 9l.5 -8l.5 10l.5 -14l.5 13l.5 -12l.5 17l.5 -21l.5 13l.5 -11l.5 10l.5 -10l.5 12l.5 -8l.5 8l.5 -10l.5 10l.5 -8l.5 12l.5 -9l.5 7l.5 -9l.5 11l.5 -21l.5 18l.5 -16l.5 27l.5 -17l.5 6l.5 -10l.5 14l.5 -11l.5 8l.5 -15l.5 14l.5 -11l.5 17l.5 -15l.5 16l.5 -22l.5 12l.5 -19l.5 21l.5 -13l.5 16l.5 -21l.5 24l.5 -15l.5 9l.5 -16l.5 13l.5 -14l.5 17l.5 -14l.5 13l.5 -6l.5 6l.5 -9l.5 15l.5 -14l.5 10l.5 -8l.5 9l.5 -8l.5 9l.5 -9l.5 13l.5 -14l.5 12l.5 -12l.5 11l.5 -10l.5 10l.5 -23l.5 21l.5 -13l.5 11l.5 -6l.5 11l.5 -14l.5 17l.5 -27l.5 21l.5 -14l.5 11l.5 -9l.5 10l.5 -10l.5 14l.5 -19l.5 15l.5 -8l.5 9l.5 -10l.5 19l.5 -15l.5 10l.5 -9l.5 6l.5 -14l.5 16l.5 -10l.5 7l.5 -10l.5 9l.5 -8l.5 9l.5 -8l.5 7l.5 -14l.5 17l.5 -12l.5 6l.5 -7l.5 8l.5 -14l.5 17l.5 -12l.5 15l.5 -14l.5 19l.5 -21l.5 23l.5 -19l.5 7l.5 -18l.5 21l.5 -17l.5 21l.5 -14l.5 16l.5 -15l.5 10l.5 -14l.5 17l.5 -14l.5 13l.5 -11l.5 6l.5 -12l.5 17l.5 -14l.5 10l.5 -10l.5 13l.5 -10l.5 10l.5 -14l.5 18l.5 -25l.5 23l.5 -11l.5 6l.5 -9l.5 21l.5 -23l.5 13l.5 -11l.5 17l.5 -18l.5 15l.5 -17l.5 13l.5 -13l.5 11l.5 -10l.5 10l.5 -13l.5 12l.5 -11l.5 13l.5 -8l.5 17l.5 -18l.5 10l.5 -14l.5 11l.5 -7l.5 7l.5 -10l.5 20l.5 -18l.5 6l.5 -16l.5 21l.5 -19l.5 14l.5 -6l.5 13l.5 -13l.5 7l.5 -15l.5 24l.5 -21l.5 15l.5 -18l.5 23l.5 -21l.5 24l.5 -25l.5 17l.5 -16l.5 24l.5 -17l.5 14l.5 -14l.5 10l.5 -9l.5 16l.5 -19l.5 14l.5 -10l.5 7l.5 -9l.5 23l.5 -21l.5 6l.5 -9l.5 12l.5 -11l.5 7l.5 -7l.5 13l.5 -12l.5 8l.5 -10l.5 14l.5 -15l.5 16l.5 -14l.5 11l.5 -8l.5 5l.5 -12l.5 17l.5 -15l.5 11l.5 -10l.5 13l.5 -17l.5 17l.5 -16l.5 17l.5 -14l.5 11l.5 -7l.5 7l.5 -17l.5 17l.5 -8l.5 8l.5 -11l.5 10l.5 -12l.5 10l.5 -11l.5 14l.5 -9l.5 18l.5 -17l.5 8l.5 -10l.5 11l.5 -11l.5 10l.5 -8l.5 21l.5 -24l.5 18l.5 -27l.5 23l.5 -13l.5 9l.5 -13l.5 14l.5 -10l.5 8l.5 -22l.5 25l.5 -10l.5 6l.5 -14l.5 21l.5 -20l.5 14l.5 -10l.5 9l.5 -12l.5 16l.5 -18l.5 13l.5 -14l.5 14l.5 -9l.5 12M2498.5 975l.5 -6l.5 13l.5 -9l.5 13l.5 -16l.5 21l.5 -18l.5 11l.5 -14l.5 20l.5 -19l.5 6l.5 -5l.5 5l.5 -10l.5 11l.5 -9l.5 10l.5 -14l.5 15l.5 -14l.5 13l.5 -11l.5 9l.5 -8l.5 14l.5 -20l.5 14l.5 -9l.5 12l.5 -15l.5 13l.5 -13l.5 26l.5 -20l.5 7l.5 -10l.5 13l.5 -10l.5 12l.5 -13l.5 7l.5 -6l.5 10l.5 -11l.5 11l.5 -18l.5 16l.5 -10l.5 8l.5 -13l.5 13l.5 -22l.5 22l.5 -12l.5 10l.5 -7l.5 14l.5 -15l.5 9l.5 -8l.5 13l.5 -14l.5 19l.5 -31l.5 21l.5 -10l.5 14l.5 -14l.5 8l.5 -10l.5 14l.5 -10l.5 7l.5 -13l.5 17l.5 -17l.5 14l.5 -8l.5 9l.5 -11l.5 11l.5 -8l.5 11l.5 -11l.5 8l.5 -5l.5 11l.5 -16l.5 15l.5 -16l.5 12l.5 -10l.5 16l.5 -18l.5 11l.5 -8l.5 10l.5 -9l.5 16l.5 -18l.5 8l.5 -5l.5 10l.5 -14l.5 9l.5 -5l.5 18l.5 -24l.5 11l.5 -7l.5 17l.5 -16l.5 8l.5 -11l.5 13l.5 -10l.5 13l.5 -12l.5 13l.5 -25l.5 22l.5 -10l.5 12l.5 -18l.5 15l.5 -6l.5 11l.5 -12l.5 16l.5 -20l.5 11l.5 -7l.5 19l.5 -27l.5 17l.5 -11l.5 13l.5 -12l.5 9l.5 -10l.5 9l.5 -9l.5 12l.5 -13l.5 14l.5 -16l.5 11l.5 -11l.5 9l.5 -4l.5 11l.5 -13l.5 11l.5 -9M2585.5 975l.5 -3l.5 12l.5 -15l.5 13l.5 -11" stroke="#3a8c9c" stroke-width="1.5" fill="none" stroke-linejoin="bevel"/>
<path d="M662.2 1089l.5 -13l.5 19l.5 -25l.5 23l.5 -8l.5 13l.5 -17l.5 15l.5 -13l.5 14l.5 -14l.5 27l.5 -27l.5 10l.5 -15l.5 28l.5 -21l.5 7l.5 -8l.5 9l.5 -54l.5 52l.5 -6l.5 10l.5 -13l.5 9l.5 -9l.5 8l.5 -8l.5 16l.5 -15l.5 9l.5 -10l.5 6l.5 -9l.5 12l.5 -12l.5 17l.5 -23l.5 18l.5 -21l.5 24l.5 -10l.5 7l.5 -9l.5 11l.5 -9l.5 20l.5 -18l.5 14l.5 -16l.5 15l.5 -22l.5 19l.5 -9l.5 26l.5 -33l.5 30l.5 -26l.5 17l.5 -26l.5 18l.5 -10l.5 8l.5 -7l.5 7l.5 -7l.5 18l.5 -20l.5 11l.5 -7l.5 7l.5 -9l.5 10l.5 -18l.5 19l.5 -12l.5 13l.5 -11l.5 19l.5 -19l.5 25l.5 -26l.5 11l.5 -17l.5 19l.5 -16l.5 7l.5 -8l.5 18l.5 -16l.5 18l.5 -18l.5 9l.5 -27l.5 28l.5 -13l.5 16l.5 -12M964.0 1089l.5 -3l.5 14l.5 -16l.5 11l.5 -22l.5 22l.5 -13l.5 15l.5 -16l.5 17l.5 -18l.5 13l.5 -8l.5 6l.5 -7l.5 16l.5 -26l.5 20l.5 -11l.5 12l.5 -25l.5 30l.5 -18l.5 14l.5 -13l.5 8l.5 -7l.5 11l.5 -11l.5 10l.5 -11l.5 11l.5 -10l.5 11l.5 -9l.5 8l.5 -7l.5 13l.5 -21l.5 15l.5 -11l.5 10l.5 -16l.5 21l.5 -14l.5 26l.5 -28l.5 12l.5 -10l.5 16l.5 -20l.5 16l.5 -10l.5 7l.5 -15l.5 16l.5 -9l.5 9l.5 -19l.5 22l.5 -15l.5 15l.5 -10l.5 8l.5 -13l.5 16l.5 -16l.5 17l.5 -17l.5 16l.5 -19l.5 14l.5 -11l.5 11l.5 -21l.5 24l.5 -16l.5 16l.5 -10l.5 9l.5 -9l.5 7l.5 -7l.5 14l.5 -15l.5 23l.5 -31l.5 19l.5 -28l.5 26l.5 -11l.5 9l.5 -13l.5 17l.5 -15l.5 11l.5 -9l.5 12l.5 -13l.5 24l.5 -20l.5 9l.5 -16l.5 13l.5 -8l.5 16l.5 -22l.5 16l.5 -20l.5 16l.5 -11l.5 13l.5 -9l.5 6l.5 -7l.5 12l.5 -13l.5 10l.5 -12l.5 15l.5 -12l.5 15l.5 -19l.5 31l.5 -23l.5 9l.5 -12l.5 13l.5 -10l.5 7l.5 -10l.5 9l.5 -8l.5 13l.5 -25l.5 21l.5 -6l.5 6l.5 -22l.5 22l.5 -7l.5 6l.5 -18l.5 25l.5 -17l.5 16l.5 -16l.5 11l.5 -12l.5 12l.5 -20l.5 22M1043.0 1089l.5 -8l.5 21l.5 -21l.5 14l.5 -14l.5 15l.5 -12l.5 7l.5 -12l.5 15l.5 -15l.5 12l.5 -13M1053.0 1089l.5 -5l.5 9l.5 -8l.5 11l.5 -15l.5 15l.5 -15l.5 13l.5 -13l.5 16l.5 -24l.5 19l.5 -8l.5 26l.5 -25l.5 8l.5 -9l.5 7l.5 -24l.5 31l.5 -15l.5 7l.5 -6l.5 21l.5 -22l.5 14l.5 -13l.5 7l.5 -9l.5 16l.5 -13l.5 7l.5 -8l.5 16l.5 -35l.5 31l.5 -18l.5 16l.5 -11l.5 7l.5 -9l.5 16l.5 -13l.5 16l.5 -23l.5 15l.5 -8l.5 12l.5 -9l.5 13l.5 -15l.5 16l.5 -18l.5 8l.5 -9l.5 10l.5 -10l.5 9l.5 -11l.5 10l.5 -7l.5 21l.5 -21l.5 7l.5 -13l.5 11l.5 -15l.5 19l.5 -28l.5 25l.5 -7l.5 9l.5 -17l.5 16l.5 -11l.5 14l.5 -17l.5 13l.5 -7l.5 8l.5 -15l.5 14l.5 -10l.5 13l.5 -8l.5 11l.5 -18l.5 15l.5 -11l.5 12l.5 -20l.5 24l.5 -16l.5 11l.5 -10l.5 10l.5 -7l.5 12l.5 -15l.5 28l.5 -25l.5 20l.5 -17l.5 15l.5 -17l.5 9l.5 -10l.5 15l.5 -10l.5 8l.5 -12l.5 15l.5 -13l.5 8l.5 -9l.5 10l.5 -11l.5 22l.5 -22l.5 28l.5 -28l.5 26l.5 -25l.5 10l.5 -8l.5 5l.5 -8l.5 12l.5 -13l.5 12l.5 -10l.5 6l.5 -7l.5 7l.5 -11l.5 14l.5 -11l.5 12l.5 -14l.5 12l.5 -19l.5 20l.5 -9l.5 5l.5 -6l.5 8l.5 -10l.5 9l.5 -6l.5 8l.5 -11l.5 9l.5 -7l.5 10l.5 -13l.5 12l.5 -16l.5 15l.5 -20l.5 22l.5 -9l.5 7l.5 -8l.5 10l.5 -10l.5 16l.5 -20l.5 15l.5 -9l.5 14l.5 -15l.5 11l.5 -17l.5 17l.5 -21l.5 15l.5 -9l.5 8l.5 -8l.5 24l.5 -25l.5 18l.5 -21l.5 12l.5 -6l.5 11l.5 -12l.5 5l.5 -15l.5 20l.5 -10l.5 15l.5 -24l.5 15l.5 -15l.5 17l.5 -10l.5 17l.5 -13l.5 13l.5 -18l.5 18l.5 -13l.5 14l.5 -11l.5 7l.5 -7l.5 14M1212.0 1089l.5 -4l.5 10l.5 -12l.5 10l.5 -10l.5 12l.5 -14l.5 14l.5 -12l.5 6l.5 -22l.5 24l.5 -11l.5 16l.5 -16l.5 12l.5 -7l.5 20l.5 -21l.5 13l.5 -13l.5 9M1233.0 1089l.5 -5l.5 10l.5 -7l.5 14l.5 -17l.5 8l.5 -8l.5 19l.5 -18l.5 10l.5 -7l.5 7l.5 -8l.5 11l.5 -11l.5 7M1266.0 1089l.5 -8l.5 14l.5 -11l.5 17l.5 -19l.5 16l.5 -19l.5 10l.5 -7l.5 10l.5 -10l.5 9l.5 -10l.5 12l.5 -13l.5 18l.5 -28l.5 24l.5 -17l.5 19l.5 -15l.5 13l.5 -8l.5 10l.5 -19l.5 21l.5 -24l.5 22l.5 -8l.5 7l.5 -13l.5 13l.5 -8l.5 7l.5 -21l.5 31l.5 -18l.5 14l.5 -18l.5 14l.5 -12l.5 19l.5 -21l.5 8l.5 -17l.5 21l.5 -29l.5 36l.5 -35l.5 34l.5 -17l.5 10l.5 -11l.5 19l.5 -21l.5 17l.5 -16l.5 18l.5 -26l.5 32l.5 -21l.5 8l.5 -12l.5 11l.5 -11l.5 17l.5 -15l.5 7l.5 -9l.5 16l.5 -18l.5 26l.5 -25l.5 10l.5 -7l.5 14l.5 -18l.5 12l.5 -7l.5 8l.5 -10l.5 10l.5 -10l.5 10M1311.5 1089l.5 -7l.5 12l.5 -10l.5 8l.5 -23l.5 27l.5 -29l.5 31M1440.0 1089l.5 -9l.5 15l.5 -9l.5 13l.5 -11l.5 8l.5 -9l.5 8l.5 -9l.5 12l.5 -24l.5 18l.5 -8l.5 10l.5 -24l.5 23l.5 -8l.5 13l.5 -32l.5 32l.5 -12l.5 18l.5 -19l.5 18l.5 -18l.5 7M1486.0 1089l.5 -22l.5 31l.5 -11l.5 6l.5 -7l.5 10l.5 -11l.5 11l.5 -16l.5 18l.5 -17l.5 12l.5 -8l.5 10l.5 -7l.5 9l.5 -20l.5 23l.5 -12l.5 9l.5 -10l.5 10l.5 -12l.5 12l.5 -15l.5 17l.5 -20l.5 17l.5 -8l.5 8l.5 -6l.5 6l.5 -18l.5 19l.5 -10l.5 10l.5 -10l.5 7l.5 -7l.5 6l.5 -16l.5 19l.5 -10l.5 24l.5 -23l.5 15l.5 -15l.5 19l.5 -33l.5 26l.5 -13l.5 5l.5 -9l.5 11l.5 -7l.5 8l.5 -20l.5 19l.5 -12l.5 24l.5 -22l.5 19l.5 -18l.5 12l.5 -12l.5 12l.5 -19l.5 19l.5 -11l.5 7l.5 -9l.5 9l.5 -11l.5 15l.5 -8l.5 6l.5 -19l.5 21l.5 -8l.5 18l.5 -18l.5 11l.5 -15l.5 16l.5 -18l.5 14l.5 -11l.5 12l.5 -13l.5 23l.5 -38l.5 32l.5 -13l.5 7l.5 -13l.5 18l.5 -16l.5 12l.5 -8l.5 8l.5 -11l.5 12l.5 -15l.5 22l.5 -23l.5 23l.5 -19l.5 10l.5 -10l.5 11l.5 -9l.5 13l.5 -13l.5 12l.5 -15l.5 12l.5 -9l.5 8l.5 -12l.5 11l.5 -8l.5 7l.5 -8l.5 10l.5 -10l.5 12l.5 -19l.5 17l.5 -13l.5 15l.5 -12l.5 7l.5 -8l.5 10l.5 -16l.5 14l.5 -12l.5 16l.5 -10l.5 9l.5 -23l.5 25l.5 -16l.5 16l.5 -15l.5 11l.5 -7l.5 8l.5 -7l.5 8l.5 -7l.5 7l.5 -8l.5 11l.5 -22l.5 21l.5 -13l.5 16l.5 -15l.5 23l.5 -29l.5 24l.5 -22l.5 14l.5 -9l.5 6l.5 -6l.5 6l.5 -7l.5 8l.5 -12l.5 11l.5 -8l.5 25l.5 -26l.5 27l.5 -31l.5 13l.5 -10l.5 19l.5 -24l.5 24l.5 -16l.5 11l.5 -16l.5 16l.5 -14l.5 16l.5 -20l.5 25l.5 -19l.5 15l.5 -20l.5 18l.5 -15l.5 22l.5 -16l.5 9l.5 -10l.5 15l.5 -18l.5 15l.5 -13l.5 8l.5 -7l.5 7l.5 -10l.5 17l.5 -19l.5 13l.5 -16l.5 15l.5 -15l.5 22l.5 -21l.5 17l.5 -14l.5 11l.5 -10l.5 11l.5 -16l.5 16M1626.5 1089l.5 -4l.5 15l.5 -24l.5 17l.5 -12l.5 11l.5 -6l.5 9l.5 -11l.5 10l.5 -15l.5 14l.5 -9l.5 11l.5 -11l.5 18l.5 -17l.5 24l.5 -26l.5 9l.5 -7l.5 13l.5 -14l.5 9l.5 -9l.5 14l.5 -11l.5 9l.5 -12l.5 13l.5 -10l.5 21l.5 -31l.5 16l.5 -7l.5 12l.5 -11l.5 10l.5 -9l.5 9l.5 -13l.5 16l.5 -13l.5 8l.5 -7l.5 9l.5 -25M1695.5 1089l.5 -5l.5 9l.5 -11l.5 13l.5 -8l.5 9l.5 -11M1703.0 1089l.5 -5l.5 8l.5 -16l.5 20l.5 -19l.5 17l.5 -12M1713.5 1089l.5 -6l.5 9l.5 -6l.5 11l.5 -17l.5 11l.5 -16l.5 19l.5 -9l.5 7l.5 -12l.5 16l.5 -24l.5 26l.5 -14l.5 10l.5 -13l.5 16l.5 -12l.5 6l.5 -10l.5 14l.5 -12l.5 12l.5 -9l.5 12l.5 -10l.5 9l.5 -17l.5 14l.5 -8l.5 9l.5 -18l.5 17l.5 -19l.5 17l.5 -9l.5 10l.5 -18l.5 18l.5 -16l.5 15l.5 -9l.5 12l.5 -21l.5 22l.5 -14l.5 10l.5 -12l.5 12l.5 -12l.5 17l.5 -16l.5 23l.5 -19l.5 9l.5 -8l.5 12l.5 -13l.5 14l.5 -12l.5 12l.5 -15l.5 17l.5 -21l.5 24l.5 -20l.5 14l.5 -14l.5 14l.5 -17l.5 14l.5 -11l.5 14l.5 -15l.5 12l.5 -10l.5 9l.5 -11l.5 13l.5 -14l.5 10l.5 -13l.5 16l.5 -16l.5 18l.5 -25l.5 27l.5 -17l.5 12l.5 -10l.5 9l.5 -8l.5 8l.5 -18l.5 17l.5 -7l.5 7l.5 -11l.5 14l.5 -11l.5 28l.5 -29l.5 14l.5 -15l.5 10l.5 -12l.5 14l.5 -10l.5 11l.5 -20l.5 21l.5 -10l.5 13l.5 -19l.5 13l.5 -25l.5 28l.5 -18l.5 14l.5 -14l.5 13l.5 -12l.5 14l.5 -11l.5 12l.5 -18l.5 29l.5 -24l.5 19l.5 -32l.5 22l.5 -12l.5 15l.5 -10l.5 7l.5 -16l.5 16l.5 -10l.5 26l.5 -32l.5 17l.5 -14l.5 19l.5 -16l.5 14l.5 -11l.5 14l.5 -29l.5 24l.5 -14l.5 14l.5 -11l.5 13l.5 -9l.5 13l.5 -14l.5 11l.5 -16l.5 11l.5 -10l.5 11l.5 -8l.5 9l.5 -17l.5 25l.5 -16l.5 12l.5 -15l.5 13l.5 -18l.5 19l.5 -13l.5 25l.5 -21l.5 13l.5 -22l.5 21l.5 -14l.5 9l.5 -9l.5 10l.5 -18l.5 20l.5 -19l.5 20l.5 -15l.5 23l.5 -19l.5 14l.5 -15l.5 8l.5 -6l.5 22l.5 -31l.5 14l.5 -6l.5 9l.5 -18l.5 27l.5 -22l.5 13l.5 -15l.5 13l.5 -14l.5 16l.5 -11l.5 12l.5 -11l.5 9l.5 -10l.5 8l.5 -10l.5 13l.5 -10l.5 8l.5 -11l.5 30l.5 -31l.5 16l.5 -12l.5 13l.5 -13l.5 8l.5 -8l.5 24l.5 -25l.5 9l.5 -15l.5 11l.5 -12l.5 14l.5 -8l.5 12l.5 -12l.5 24l.5 -32l.5 17l.5 -7l.5 24l.5 -25l.5 8l.5 -7l.5 7l.5 -22l.5 22l.5 -7l.5 9l.5 -11l.5 15l.5 -30l.5 27l.5 -15l.5 12l.5 -10l.5 25l.5 -24l.5 8l.5 -14l.5 17l.5 -15l.5 16l.5 -13l.5 15l.5 -16l.5 15l.5 -11l.5 8l.5 -11l.5 11l.5 -6l.5 12l.5 -13l.5 15l.5 -17l.5 15l.5 -17l.5 14l.5 -8l.5 8l.5 -10l.5 13l.5 -21l.5 19l.5 -23l.5 20l.5 -11l.5 23l.5 -26l.5 21l.5 -12l.5 6l.5 -8l.5 7l.5 -15l.5 20l.5 -13l.5 10l.5 -8l.5 17l.5 -19l.5 16l.5 -12l.5 6l.5 -12l.5 14l.5 -10l.5 14l.5 -23l.5 20l.5 -17l.5 13l.5 -11l.5 12l.5 -10l.5 11l.5 -13l.5 16l.5 -13l.5 9l.5 -7l.5 8l.5 -28l.5 32l.5 -14l.5 8l.5 -12l.5 13l.5 -12l.5 14l.5 -20l.5 19l.5 -10l.5 16l.5 -17l.5 8l.5 -8l.5 9l.5 -16l.5 14l.5 -10l.5 21l.5 -28l.5 18l.5 -10l.5 9l.5 -14l.5 16l.5 -10l.5 9l.5 -15l.5 20l.5 -17l.5 12l.5 -12l.5 10l.5 -10l.5 8l.5 -10l.5 19l.5 -18l.5 17l.5 -16l.5 9l.5 -8l.5 11l.5 -10l.5 7l.5 -11l.5 12l.5 -16l.5 18l.5 -18l.5 19l.5 -14l.5 10l.5 -12l.5 12l.5 -16l.5 15l.5 -16l.5 15l.5 -13l.5 17l.5 -16l.5 12l.5 -12l.5 15l.5 -21l.5 22l.5 -13l.5 17l.5 -15l.5 9l.5 -12l.5 15l.5 -12l.5 11l.5 -10l.5 9l.5 -12M2059.0 1089l.5 -5l.5 9l.5 -7l.5 10l.5 -12l.5 13l.5 -13l.5 7l.5 -7l.5 7l.5 -10l.5 21l.5 -20l.5 9l.5 -13l.5 13l.5 -17l.5 20l.5 -24l.5 28l.5 -14l.5 6l.5 -17l.5 18l.5 -9l.5 8l.5 -12l.5 16l.5 -15l.5 14l.5 -9l.5 9l.5 -12l.5 14l.5 -9l.5 8l.5 -9l.5 10l.5 -7l.5 24l.5 -33l.5 17l.5 -12l.5 13l.5 -24l.5 25l.5 -10l.5 14l.5 -20l.5 19l.5 -12l.5 13l.5 -14l.5 16l.5 -24l.5 22l.5 -16l.5 10l.5 -9l.5 7l.5 -10l.5 12l.5 -22l.5 21l.5 -7l.5 12l.5 -13l.5 19l.5 -17l.5 9l.5 -19l.5 22l.5 -19l.5 33l.5 -26l.5 9l.5 -11l.5 11l.5 -9l.5 10l.5 -11l.5 13l.5 -19l.5 21l.5 -17l.5 8l.5 -12l.5 13l.5 -9l.5 6l.5 -8l.5 8l.5 -10l.5 13l.5 -14l.5 13l.5 -13l.5 17l.5 -21l.5 19l.5 -10l.5 6l.5 -6l.5 16l.5 -25l.5 23l.5 -14l.5 12l.5 -11l.5 6l.5 -7l.5 9l.5 -10l.5 11l.5 -12l.5 13l.5 -14l.5 14l.5 -15l.5 14l.5 -16l.5 14l.5 -13l.5 18l.5 -14l.5 9l.5 -7l.5 10l.5 -12l.5 14l.5 -16l.5 11l.5 -6l.5 14l.5 -22l.5 29l.5 -27l.5 15l.5 -12l.5 14l.5 -12l.5 7l.5 -10l.5 13l.5 -14l.5 10l.5 -15l.5 17l.5 -11l.5 13l.5 -17l.5 14l.5 -7l.5 23l.5 -25l.5 11l.5 -14l.5 13l.5 -11l.5 8l.5 -7l.5 10l.5 -23l.5 23l.5 -12l.5 9l.5 -13l.5 16l.5 -16l.5 15l.5 -15l.5 22l.5 -20l.5 14l.5 -13l.5 12l.5 -8l.5 18l.5 -26l.5 19l.5 -10l.5 15l.5 -16l.5 10l.5 -7l.5 12l.5 -18l.5 20l.5 -20l.5 11l.5 -16l.5 15l.5 -8l.5 8l.5 -16l.5 19l.5 -16l.5 16l.5 -13l.5 9l.5 -10l.5 17l.5 -16l.5 15l.5 -20l.5 18l.5 -15l.5 14l.5 -13l.5 11l.5 -10l.5 10l.5 -14l.5 30l.5 -30l.5 21l.5 -18l.5 20l.5 -19l.5 9l.5 -15l.5 16l.5 -12l.5 20l.5 -16l.5 12l.5 -15l.5 13l.5 -10l.5 13l.5 -19l.5 31l.5 -33l.5 30l.5 -22l.5 12l.5 -21l.5 16l.5 -6l.5 16l.5 -21l.5 11l.5 -14l.5 12l.5 -7l.5 11l.5 -16l.5 13l.5 -11l.5 12l.5 -10l.5 12l.5 -8l.5 14l.5 -15l.5 10l.5 -18l.5 17l.5 -11l.5 16l.5 -14l.5 13l.5 -15l.5 13l.5 -9l.5 10l.5 -11l.5 9l.5 -12l.5 9l.5 -20l.5 24l.5 -12l.5 19l.5 -21l.5 13l.5 -15l.5 16l.5 -19l.5 20l.5 -13l.5 16l.5 -18l.5 14l.5 -21l.5 16l.5 -11l.5 11l.5 -9l.5 27l.5 -24l.5 9l.5 -12l.5 10l.5 -5l.5 7l.5 -11l.5 11l.5 -8l.5 12l.5 -12l.5 8l.5 -14l.5 18l.5 -12l.5 11l.5 -12l.5 9l.5 -9l.5 10l.5 -14l.5 13l.5 -9l.5 6l.5 -14l.5 17l.5 -8l.5 9l.5 -13l.5 14l.5 -9l.5 11l.5 -10l.5 9l.5 -17l.5 32l.5 -27l.5 9l.5 -10l.5 10l.5 -20l.5 23l.5 -16l.5 18l.5 -29l.5 23l.5 -24l.5 23l.5 -6l.5 12l.5 -23l.5 18l.5 -22l.5 20l.5 -11l.5 16l.5 -20l.5 16l.5 -8l.5 15l.5 -28l.5 25l.5 -15l.5 12l.5 -7l.5 9l.5 -11l.5 13l.5 -14l.5 12l.5 -10l.5 12l.5 -12l.5 13l.5 -17l.5 11l.5 -9l.5 12l.5 -14l.5 17l.5 -23l.5 21l.5 -13l.5 19l.5 -27l.5 24l.5 -15l.5 11l.5 -24l.5 24l.5 -16l.5 15l.5 -14l.5 17l.5 -26l.5 22l.5 -9l.5 12l.5 -9l.5 7l.5 -15l.5 21l.5 -15l.5 9l.5 -10l.5 17l.5 -18l.5 9l.5 -11l.5 23l.5 -21l.5 11l.5 -27l.5 29l.5 -28l.5 23l.5 -7l.5 6l.5 -14l.5 15l.5 -12l.5 14l.5 -9l.5 6l.5 -8l.5 16l.5 -15l.5 8l.5 -8l.5 13l.5 -14l.5 9l.5 -15l.5 22l.5 -14l.5 25l.5 -26l.5 13l.5 -16l.5 11l.5 -10l.5 15l.5 -15l.5 12l.5 -15l.5 18l.5 -17l.5 16l.5 -13l.5 10l.5 -9l.5 10l.5 -13l.5 12l.5 -26l.5 24l.5 -7l.5 26l.5 -29l.5 11l.5 -9l.5 13l.5 -29l.5 29l.5 -15l.5 24l.5 -30l.5 29l.5 -29l.5 20l.5 -10l.5 25l.5 -24l.5 9l.5 -10l.5 7l.5 -10l.5 19l.5 -23l.5 16l.5 -11l.5 24M2498.5 1089l.5 -4l.5 11l.5 -11l.5 12l.5 -13l.5 14l.5 -13l.5 8l.5 -8l.5 24l.5 -22l.5 9l.5 -11l.5 14l.5 -22l.5 21l.5 -20l.5 14l.5 -7l.5 10l.5 -16l.5 29l.5 -30l.5 14l.5 -11l.5 10l.5 -9l.5 11l.5 -8l.5 10l.5 -11l.5 10l.5 -16l.5 25l.5 -19l.5 9l.5 -9l.5 9l.5 -9l.5 8l.5 -10l.5 20l.5 -31l.5 25l.5 -16l.5 15l.5 -15l.5 14l.5 -13l.5 14l.5 -10l.5 7l.5 -7l.5 11l.5 -26l.5 24l.5 -8l.5 7l.5 -6l.5 20l.5 -19l.5 13l.5 -28l.5 30l.5 -15l.5 11l.5 -16l.5 21l.5 -21l.5 13l.5 -10l.5 10l.5 -9l.5 5l.5 -8l.5 10l.5 -12l.5 10l.5 -14l.5 18l.5 -12l.5 12l.5 -13l.5 9l.5 -14l.5 22l.5 -19l.5 11l.5 -7l.5 9l.5 -18l.5 19l.5 -13l.5 14l.5 -26l.5 26l.5 -19l.5 15l.5 -16l.5 17l.5 -12l.5 16l.5 -12l.5 16l.5 -23l.5 23l.5 -17l.5 27l.5 -23l.5 13l.5 -14l.5 12l.5 -13l.5 28l.5 -31l.5 10l.5 -7l.5 11l.5 -13l.5 21l.5 -17l.5 14l.5 -14l.5 10l.5 -12l.5 10l.5 -9l.5 11l.5 -18l.5 16l.5 -16l.5 14l.5 -10l.5 8l.5 -11l.5 12l.5 -12l.5 14l.5 -9l.5 9l.5 -15l.5 14l.5 -12l.5 13l.5 -12l.5 11l.5 -16l.5 19l.5 -18l.5 15l.5 -10l.5 8l.5 -13l.5 12l.5 -12M2585.5 1089l.5 -2l.5 8l.5 -12l.5 28l.5 -38" stroke="#c63b8f" stroke-width="1.5" fill="none" stroke-linejoin="bevel"/>
<path d="M662.2 1179l.5 -8l.5 18l.5 -16l.5 11l.5 -11l.5 12l.5 -7l.5 10l.5 -10l.5 15l.5 -22l.5 12l.5 -7l.5 15l.5 -18l.5 7l.5 -7l.5 14l.5 -18l.5 15l.5 -60l.5 59l.5 -11l.5 14l.5 -10l.5 15l.5 -25l.5 20l.5 -24l.5 31l.5 -21l.5 19l.5 -19l.5 14l.5 -14l.5 13l.5 -17l.5 24l.5 -16l.5 8l.5 -7l.5 8l.5 -9l.5 14l.5 -13l.5 13l.5 -18l.5 20l.5 -16l.5 12l.5 -15l.5 10l.5 -7l.5 9l.5 -13l.5 13l.5 -8l.5 9l.5 -10l.5 10l.5 -11l.5 8l.5 -11l.5 9l.5 -10l.5 18l.5 -20l.5 17l.5 -20l.5 19l.5 -9l.5 10l.5 -17l.5 22l.5 -14l.5 12l.5 -15l.5 12l.5 -13l.5 14l.5 -10l.5 14l.5 -19l.5 16l.5 -15l.5 13l.5 -19l.5 24l.5 -29l.5 25l.5 -12l.5 14l.5 -15l.5 11l.5 -11l.5 8l.5 -8l.5 16l.5 -16M964.0 1179l.5 -5l.5 13l.5 -13l.5 7l.5 -16l.5 17l.5 -8l.5 14l.5 -24l.5 23l.5 -17l.5 11l.5 -17l.5 25l.5 -17l.5 14l.5 -13l.5 11l.5 -11l.5 14l.5 -14l.5 17l.5 -28l.5 25l.5 -16l.5 16l.5 -19l.5 15l.5 -10l.5 22l.5 -21l.5 10l.5 -10l.5 11l.5 -7l.5 8l.5 -11l.5 13l.5 -20l.5 19l.5 -16l.5 13l.5 -11l.5 12l.5 -16l.5 23l.5 -20l.5 12l.5 -11l.5 17l.5 -14l.5 13l.5 -31l.5 34l.5 -15l.5 17l.5 -26l.5 20l.5 -17l.5 14l.5 -17l.5 17l.5 -8l.5 6l.5 -6l.5 12l.5 -13l.5 16l.5 -17l.5 24l.5 -22l.5 7l.5 -9l.5 10l.5 -9l.5 14l.5 -19l.5 17l.5 -8l.5 13l.5 -15l.5 12l.5 -25l.5 23l.5 -7l.5 8l.5 -11l.5 12l.5 -16l.5 18l.5 -13l.5 14l.5 -17l.5 12l.5 -14l.5 26l.5 -24l.5 10l.5 -7l.5 9l.5 -9l.5 10l.5 -12l.5 10l.5 -12l.5 11l.5 -8l.5 10l.5 -16l.5 15l.5 -25l.5 21l.5 -8l.5 13l.5 -14l.5 14l.5 -19l.5 13l.5 -15l.5 14l.5 -16l.5 16l.5 -12l.5 11l.5 -7l.5 10l.5 -18l.5 22l.5 -22l.5 15l.5 -8l.5 12l.5 -13l.5 12l.5 -11l.5 13l.5 -12l.5 7l.5 -7l.5 19l.5 -20l.5 23l.5 -25l.5 9l.5 -13l.5 15l.5 -14l.5 17l.5 -13l.5 16l.5 -12l.5 9M1043.0 1179l.5 -3l.5 12l.5 -15l.5 10l.5 -11l.5 10l.5 -9l.5 12l.5 -9l.5 12l.5 -23l.5 16l.5 -21M1053.0 1179l.5 -5l.5 7l.5 -8l.5 12l.5 -21l.5 23l.5 -15l.5 15l.5 -21l.5 16l.5 -13l.5 12l.5 -6l.5 6l.5 -6l.5 8l.5 -7l.5 11l.5 -20l.5 15l.5 -10l.5 12l.5 -15l.5 29l.5 -27l.5 18l.5 -24l.5 34l.5 -24l.5 11l.5 -21l.5 37l.5 -30l.5 13l.5 -19l.5 20l.5 -14l.5 12l.5 -19l.5 29l.5 -19l.5 11l.5 -11l.5 12l.5 -12l.5 11l.5 -9l.5 12l.5 -20l.5 21l.5 -14l.5 10l.5 -9l.5 6l.5 -9l.5 13l.5 -18l.5 29l.5 -25l.5 19l.5 -18l.5 8l.5 -7l.5 13l.5 -21l.5 14l.5 -7l.5 15l.5 -15l.5 26l.5 -27l.5 11l.5 -13l.5 17l.5 -15l.5 22l.5 -30l.5 23l.5 -19l.5 13l.5 -19l.5 23l.5 -13l.5 12l.5 -10l.5 10l.5 -12l.5 20l.5 -26l.5 24l.5 -17l.5 5l.5 -6l.5 16l.5 -18l.5 11l.5 -9l.5 18l.5 -20l.5 11l.5 -9l.5 9l.5 -13l.5 17l.5 -10l.5 15l.5 -23l.5 19l.5 -11l.5 9l.5 -6l.5 7l.5 -13l.5 14l.5 -14l.5 18l.5 -14l.5 14l.5 -16l.5 8l.5 -11l.5 13l.5 -27l.5 26l.5 -9l.5 11l.5 -13l.5 17l.5 -18l.5 15l.5 -17l.5 16l.5 -10l.5 7l.5 -10l.5 12l.5 -9l.5 15l.5 -16l.5 10l.5 -9l.5 12l.5 -31l.5 28l.5 -12l.5 8l.5 -7l.5 6l.5 -10l.5 23l.5 -26l.5 16l.5 -9l.5 7l.5 -13l.5 18l.5 -16l.5 12l.5 -13l.5 13l.5 -11l.5 16l.5 -10l.5 11l.5 -20l.5 33l.5 -32l.5 25l.5 -24l.5 16l.5 -24l.5 24l.5 -12l.5 24l.5 -24l.5 14l.5 -12l.5 23l.5 -33l.5 22l.5 -17l.5 10l.5 -25l.5 26l.5 -12l.5 14l.5 -22l.5 32l.5 -26l.5 17l.5 -12l.5 8l.5 -11l.5 15l.5 -10l.5 18l.5 -19l.5 10l.5 -11l.5 12l.5 -12l.5 11l.5 -16l.5 20l.5 -19l.5 14l.5 -13l.5 15M1212.0 1179l.5 -6l.5 9l.5 -12l.5 16l.5 -13l.5 11l.5 -21l.5 31l.5 -17l.5 6l.5 -16l.5 28l.5 -19l.5 7l.5 -9l.5 18l.5 -20l.5 23l.5 -28l.5 14l.5 -9l.5 9M1233.0 1179l.5 -5l.5 9l.5 -8l.5 10l.5 -14l.5 14l.5 -14l.5 11l.5 -14l.5 11l.5 -11l.5 15l.5 -16l.5 12l.5 -9l.5 16M1266.0 1179l.5 -14l.5 24l.5 -19l.5 22l.5 -32l.5 24l.5 -14l.5 13l.5 -12l.5 10l.5 -9l.5 6l.5 -17l.5 33l.5 -38l.5 25l.5 -9l.5 12l.5 -10l.5 15l.5 -17l.5 19l.5 -21l.5 12l.5 -8l.5 12l.5 -28l.5 28l.5 -14l.5 25l.5 -37l.5 20l.5 -8l.5 11l.5 -15l.5 15l.5 -11l.5 16l.5 -18l.5 20l.5 -20l.5 14l.5 -12l.5 18l.5 -16l.5 9l.5 -18l.5 19l.5 -10l.5 12l.5 -11l.5 9l.5 -6l.5 13l.5 -14l.5 9l.5 -15l.5 16l.5 -10l.5 7l.5 -6l.5 11l.5 -12l.5 15l.5 -19l.5 13l.5 -10l.5 7l.5 -9l.5 14l.5 -14l.5 13l.5 -25l.5 27l.5 -17l.5 17l.5 -21l.5 24l.5 -19l.5 15l.5 -20l.5 17l.5 -9l.5 10M1311.5 1179l.5 -6l.5 16l.5 -18l.5 12l.5 -9l.5 7l.5 -15l.5 15M1440.0 1179l.5 -16l.5 27l.5 -21l.5 21l.5 -21l.5 14l.5 -12l.5 15l.5 -13l.5 15l.5 -21l.5 16l.5 -14l.5 15l.5 -9l.5 8l.5 -18l.5 20l.5 -11l.5 10l.5 -13l.5 19l.5 -17l.5 19l.5 -22l.5 14M1486.0 1179l.5 -11l.5 14l.5 -9l.5 15l.5 -17l.5 15l.5 -16l.5 12l.5 -6l.5 8l.5 -17l.5 27l.5 -18l.5 24l.5 -25l.5 11l.5 -14l.5 18l.5 -15l.5 10l.5 -9l.5 6l.5 -15l.5 19l.5 -13l.5 12l.5 -16l.5 21l.5 -16l.5 9l.5 -11l.5 13l.5 -13l.5 22l.5 -23l.5 20l.5 -16l.5 7l.5 -9l.5 10l.5 -13l.5 12l.5 -7l.5 8l.5 -18l.5 20l.5 -23l.5 23l.5 -22l.5 25l.5 -13l.5 8l.5 -16l.5 19l.5 -13l.5 14l.5 -16l.5 24l.5 -17l.5 8l.5 -16l.5 19l.5 -13l.5 10l.5 -11l.5 11l.5 -26l.5 24l.5 -11l.5 10l.5 -11l.5 18l.5 -27l.5 22l.5 -14l.5 10l.5 -7l.5 9l.5 -13l.5 14l.5 -11l.5 10l.5 -9l.5 15l.5 -12l.5 9l.5 -8l.5 8l.5 -9l.5 15l.5 -17l.5 12l.5 -11l.5 7l.5 -10l.5 26l.5 -30l.5 18l.5 -19l.5 19l.5 -24l.5 20l.5 -10l.5 10l.5 -10l.5 10l.5 -9l.5 9l.5 -10l.5 10l.5 -21l.5 21l.5 -11l.5 12l.5 -9l.5 10l.5 -15l.5 14l.5 -16l.5 14l.5 -7l.5 10l.5 -9l.5 13l.5 -11l.5 13l.5 -15l.5 8l.5 -19l.5 34l.5 -25l.5 13l.5 -12l.5 19l.5 -14l.5 8l.5 -10l.5 14l.5 -12l.5 12l.5 -12l.5 9l.5 -11l.5 15l.5 -13l.5 20l.5 -24l.5 13l.5 -11l.5 8l.5 -17l.5 13l.5 -10l.5 10l.5 -7l.5 21l.5 -30l.5 17l.5 -6l.5 23l.5 -22l.5 15l.5 -17l.5 13l.5 -17l.5 14l.5 -9l.5 6l.5 -7l.5 27l.5 -26l.5 6l.5 -8l.5 12l.5 -10l.5 7l.5 -18l.5 19l.5 -12l.5 18l.5 -13l.5 13l.5 -19l.5 14l.5 -15l.5 13l.5 -12l.5 33l.5 -26l.5 8l.5 -18l.5 32l.5 -26l.5 8l.5 -7l.5 9l.5 -6l.5 17l.5 -20l.5 16l.5 -14l.5 9l.5 -9l.5 7l.5 -19l.5 22l.5 -18l.5 17l.5 -10l.5 9l.5 -16l.5 18l.5 -10l.5 11l.5 -11l.5 7l.5 -13l.5 13l.5 -12l.5 12l.5 -16l.5 16M1626.5 1179l.5 -8l.5 21l.5 -21l.5 15l.5 -18l.5 23l.5 -23l.5 18l.5 -13l.5 14l.5 -23l.5 19l.5 -15l.5 14l.5 -8l.5 11l.5 -12l.5 16l.5 -18l.5 14l.5 -16l.5 24l.5 -30l.5 20l.5 -14l.5 15l.5 -10l.5 6l.5 -7l.5 13l.5 -16l.5 13l.5 -14l.5 15l.5 -27l.5 28l.5 -16l.5 14l.5 -12l.5 12l.5 -9l.5 27l.5 -25l.5 8l.5 -10l.5 10l.5 -11M1695.5 1179l.5 -19l.5 32l.5 -16l.5 11l.5 -22l.5 21l.5 -10M1703.0 1179l.5 -5l.5 9l.5 -9l.5 19l.5 -18l.5 9l.5 -13M1713.5 1179l.5 -4l.5 10l.5 -11l.5 20l.5 -34l.5 24l.5 -8l.5 5l.5 -8l.5 9l.5 -13l.5 19l.5 -13l.5 8l.5 -8l.5 8l.5 -10l.5 20l.5 -22l.5 14l.5 -15l.5 16l.5 -10l.5 16l.5 -16l.5 8l.5 -8l.5 14l.5 -15l.5 7l.5 -9l.5 7l.5 -8l.5 12l.5 -10l.5 9l.5 -14l.5 17l.5 -13l.5 12l.5 -13l.5 14l.5 -11l.5 14l.5 -27l.5 31l.5 -16l.5 10l.5 -18l.5 19l.5 -10l.5 8l.5 -5l.5 11l.5 -20l.5 15l.5 -14l.5 18l.5 -11l.5 7l.5 -8l.5 16l.5 -20l.5 16l.5 -19l.5 13l.5 -11l.5 16l.5 -15l.5 11l.5 -18l.5 24l.5 -14l.5 15l.5 -19l.5 12l.5 -8l.5 16l.5 -20l.5 17l.5 -13l.5 13l.5 -13l.5 20l.5 -24l.5 17l.5 -21l.5 22l.5 -14l.5 9l.5 -13l.5 22l.5 -17l.5 11l.5 -11l.5 8l.5 -9l.5 7l.5 -7l.5 16l.5 -22l.5 14l.5 -8l.5 25l.5 -25l.5 6l.5 -15l.5 25l.5 -17l.5 12l.5 -21l.5 20l.5 -16l.5 11l.5 -8l.5 14l.5 -23l.5 18l.5 -10l.5 7l.5 -10l.5 12l.5 -8l.5 8l.5 -11l.5 13l.5 -14l.5 17l.5 -15l.5 9l.5 -9l.5 9l.5 -10l.5 8l.5 -26l.5 35l.5 -24l.5 13l.5 -8l.5 11l.5 -11l.5 11l.5 -12l.5 22l.5 -19l.5 15l.5 -19l.5 12l.5 -12l.5 10l.5 -7l.5 11l.5 -17l.5 17l.5 -8l.5 12l.5 -11l.5 8l.5 -25l.5 26l.5 -16l.5 16l.5 -19l.5 34l.5 -29l.5 18l.5 -15l.5 10l.5 -9l.5 11l.5 -10l.5 14l.5 -18l.5 14l.5 -12l.5 17l.5 -24l.5 14l.5 -8l.5 10l.5 -12l.5 11l.5 -12l.5 10l.5 -10l.5 24l.5 -31l.5 17l.5 -13l.5 21l.5 -21l.5 18l.5 -13l.5 15l.5 -29l.5 30l.5 -12l.5 12l.5 -18l.5 21l.5 -15l.5 15l.5 -14l.5 11l.5 -7l.5 11l.5 -27l.5 42l.5 -28l.5 14l.5 -18l.5 15l.5 -23l.5 23l.5 -12l.5 10l.5 -15l.5 27l.5 -23l.5 14l.5 -16l.5 11l.5 -10l.5 9l.5 -10l.5 12l.5 -12l.5 13l.5 -13l.5 15l.5 -20l.5 15l.5 -13l.5 9l.5 -7l.5 9l.5 -14l.5 20l.5 -14l.5 7l.5 -18l.5 22l.5 -15l.5 11l.5 -11l.5 19l.5 -22l.5 27l.5 -23l.5 13l.5 -11l.5 11l.5 -12l.5 13l.5 -18l.5 12l.5 -11l.5 22l.5 -15l.5 4l.5 -12l.5 12l.5 -6l.5 12l.5 -16l.5 15l.5 -11l.5 14l.5 -19l.5 23l.5 -27l.5 16l.5 -11l.5 17l.5 -16l.5 12l.5 -26l.5 28l.5 -16l.5 14l.5 -8l.5 10l.5 -10l.5 8l.5 -14l.5 17l.5 -12l.5 24l.5 -28l.5 14l.5 -6l.5 8l.5 -13l.5 18l.5 -24l.5 19l.5 -12l.5 11l.5 -27l.5 27l.5 -9l.5 11l.5 -25l.5 23l.5 -8l.5 7l.5 -6l.5 9l.5 -16l.5 13l.5 -5l.5 7l.5 -26l.5 37l.5 -22l.5 21l.5 -23l.5 13l.5 -8l.5 27l.5 -26l.5 17l.5 -18l.5 13l.5 -28l.5 28l.5 -21l.5 15l.5 -8l.5 21l.5 -22l.5 9l.5 -9l.5 11l.5 -9l.5 24l.5 -33l.5 21l.5 -13l.5 12l.5 -16l.5 24l.5 -30l.5 16l.5 -12l.5 18l.5 -21l.5 14l.5 -6l.5 7l.5 -15l.5 26l.5 -18l.5 11l.5 -17l.5 13l.5 -14l.5 18l.5 -14l.5 10l.5 -15l.5 18l.5 -11l.5 11l.5 -16l.5 11l.5 -10l.5 21l.5 -34l.5 31l.5 -14l.5 14l.5 -14l.5 13l.5 -11l.5 8l.5 -8l.5 9l.5 -17l.5 16l.5 -7l.5 9l.5 -15l.5 15l.5 -15l.5 18l.5 -12l.5 5l.5 -9l.5 14l.5 -12l.5 9l.5 -12l.5 20l.5 -22l.5 14l.5 -18l.5 19l.5 -13l.5 24l.5 -27M2059.0 1179l.5 -8l.5 12l.5 -10l.5 9l.5 -19l.5 20l.5 -26l.5 24l.5 -9l.5 9l.5 -15l.5 16l.5 -15l.5 14l.5 -10l.5 19l.5 -17l.5 16l.5 -16l.5 7l.5 -14l.5 19l.5 -12l.5 12l.5 -15l.5 14l.5 -16l.5 18l.5 -19l.5 31l.5 -30l.5 12l.5 -9l.5 13l.5 -26l.5 26l.5 -13l.5 11l.5 -11l.5 14l.5 -10l.5 12l.5 -10l.5 14l.5 -22l.5 17l.5 -8l.5 11l.5 -16l.5 14l.5 -21l.5 23l.5 -11l.5 7l.5 -19l.5 23l.5 -23l.5 19l.5 -24l.5 23l.5 -11l.5 13l.5 -14l.5 11l.5 -11l.5 10l.5 -13l.5 13l.5 -22l.5 28l.5 -13l.5 8l.5 -12l.5 15l.5 -12l.5 6l.5 -9l.5 15l.5 -18l.5 20l.5 -14l.5 10l.5 -10l.5 18l.5 -23l.5 13l.5 -6l.5 8l.5 -10l.5 11l.5 -10l.5 8l.5 -6l.5 6l.5 -6l.5 7l.5 -11l.5 12l.5 -6l.5 9l.5 -19l.5 17l.5 -14l.5 16l.5 -11l.5 8l.5 -8l.5 11l.5 -13l.5 8l.5 -16l.5 15l.5 -7l.5 9l.5 -12l.5 14l.5 -17l.5 14l.5 -12l.5 13l.5 -15l.5 24l.5 -20l.5 22l.5 -21l.5 10l.5 -11l.5 11l.5 -11l.5 14l.5 -16l.5 14l.5 -13l.5 21l.5 -32l.5 22l.5 -18l.5 23l.5 -21l.5 17l.5 -14l.5 15l.5 -9l.5 9l.5 -13l.5 12l.5 -9l.5 23l.5 -23l.5 10l.5 -9l.5 8l.5 -14l.5 13l.5 -13l.5 15l.5 -7l.5 7l.5 -8l.5 9l.5 -10l.5 9l.5 -7l.5 10l.5 -14l.5 15l.5 -22l.5 19l.5 -25l.5 23l.5 -13l.5 12l.5 -15l.5 18l.5 -31l.5 33l.5 -27l.5 19l.5 -15l.5 22l.5 -18l.5 12l.5 -21l.5 39l.5 -28l.5 12l.5 -26l.5 27l.5 -20l.5 22l.5 -10l.5 10l.5 -10l.5 9l.5 -11l.5 16l.5 -15l.5 14l.5 -14l.5 14l.5 -19l.5 13l.5 -8l.5 15l.5 -19l.5 31l.5 -26l.5 6l.5 -17l.5 21l.5 -11l.5 10l.5 -9l.5 15l.5 -27l.5 19l.5 -22l.5 32l.5 -20l.5 9l.5 -13l.5 12l.5 -9l.5 12l.5 -14l.5 26l.5 -21l.5 10l.5 -12l.5 14l.5 -14l.5 8l.5 -12l.5 16l.5 -15l.5 19l.5 -18l.5 22l.5 -19l.5 6l.5 -12l.5 23l.5 -18l.5 7l.5 -12l.5 16l.5 -21l.5 18l.5 -9l.5 14l.5 -11l.5 9l.5 -14l.5 12l.5 -9l.5 8l.5 -13l.5 19l.5 -16l.5 13l.5 -8l.5 7l.5 -10l.5 20l.5 -24l.5 21l.5 -16l.5 9l.5 -10l.5 9l.5 -16l.5 13l.5 -8l.5 13l.5 -23l.5 23l.5 -27l.5 24l.5 -11l.5 16l.5 -11l.5 14l.5 -19l.5 14l.5 -12l.5 9l.5 -18l.5 24l.5 -18l.5 14l.5 -8l.5 8l.5 -8l.5 7l.5 -12l.5 13l.5 -15l.5 18l.5 -11l.5 6l.5 -9l.5 14l.5 -31l.5 28l.5 -19l.5 20l.5 -14l.5 13l.5 -9l.5 19l.5 -18l.5 8l.5 -10l.5 13l.5 -10l.5 5l.5 -6l.5 8l.5 -10l.5 15l.5 -18l.5 12l.5 -11l.5 16l.5 -13l.5 7l.5 -6l.5 8l.5 -10l.5 14l.5 -18l.5 15l.5 -17l.5 21l.5 -16l.5 17l.5 -16l.5 16l.5 -15l.5 17l.5 -25l.5 18l.5 -14l.5 11l.5 -11l.5 14l.5 -22l.5 21l.5 -6l.5 6l.5 -6l.5 6l.5 -9l.5 16l.5 -13l.5 8l.5 -9l.5 12l.5 -24l.5 25l.5 -12l.5 9l.5 -13l.5 15l.5 -24l.5 21l.5 -10l.5 13l.5 -12l.5 19l.5 -22l.5 11l.5 -6l.5 8l.5 -23l.5 23l.5 -12l.5 9l.5 -11l.5 16l.5 -12l.5 13l.5 -12l.5 8l.5 -8l.5 26l.5 -26l.5 8l.5 -17l.5 20l.5 -11l.5 10l.5 -12l.5 11l.5 -7l.5 15l.5 -23l.5 23l.5 -19l.5 12l.5 -11l.5 11l.5 -12l.5 18l.5 -13l.5 7l.5 -15l.5 18l.5 -18l.5 17l.5 -14l.5 18l.5 -16l.5 14l.5 -27l.5 24l.5 -13l.5 10l.5 -8l.5 14l.5 -20l.5 13l.5 -11l.5 13l.5 -10l.5 14l.5 -15l.5 14l.5 -17l.5 10l.5 -17l.5 19l.5 -16l.5 18l.5 -12l.5 11l.5 -10l.5 10l.5 -11l.5 9l.5 -12l.5 15l.5 -10l.5 9l.5 -13l.5 15l.5 -11l.5 10l.5 -18l.5 15l.5 -11l.5 13l.5 -21l.5 17l.5 -11l.5 16l.5 -17l.5 28l.5 -31l.5 14l.5 -10l.5 19l.5 -20l.5 14l.5 -26l.5 39l.5 -30l.5 22l.5 -20l.5 32l.5 -30l.5 13M2498.5 1179l.5 -22l.5 34l.5 -17l.5 18l.5 -24l.5 18l.5 -18l.5 15l.5 -13l.5 12l.5 -9l.5 9l.5 -7l.5 9l.5 -25l.5 23l.5 -11l.5 21l.5 -27l.5 16l.5 -9l.5 11l.5 -16l.5 17l.5 -12l.5 23l.5 -24l.5 12l.5 -12l.5 13l.5 -13l.5 17l.5 -19l.5 18l.5 -14l.5 13l.5 -14l.5 11l.5 -11l.5 10l.5 -12l.5 12l.5 -8l.5 23l.5 -31l.5 17l.5 -8l.5 9l.5 -9l.5 10l.5 -15l.5 12l.5 -20l.5 22l.5 -9l.5 16l.5 -21l.5 31l.5 -27l.5 9l.5 -8l.5 9l.5 -28l.5 32l.5 -14l.5 8l.5 -13l.5 15l.5 -17l.5 13l.5 -6l.5 6l.5 -9l.5 11l.5 -14l.5 15l.5 -8l.5 8l.5 -11l.5 19l.5 -28l.5 19l.5 -12l.5 13l.5 -7l.5 12l.5 -16l.5 16l.5 -15l.5 7l.5 -10l.5 16l.5 -14l.5 11l.5 -18l.5 17l.5 -9l.5 8l.5 -9l.5 9l.5 -8l.5 6l.5 -8l.5 14l.5 -16l.5 14l.5 -12l.5 8l.5 -8l.5 13l.5 -12l.5 16l.5 -35l.5 31l.5 -13l.5 9l.5 -7l.5 9l.5 -12l.5 18l.5 -18l.5 13l.5 -11l.5 10l.5 -6l.5 6l.5 -8l.5 11l.5 -14l.5 20l.5 -15l.5 14l.5 -18l.5 11l.5 -9l.5 18l.5 -21l.5 18l.5 -23l.5 20l.5 -10l.5 15l.5 -16l.5 8l.5 -8l.5 15l.5 -13l.5 20l.5 -20l.5 11l.5 -21l.5 19l.5 -15l.5 22l.5 -18M2585.5 1179l.5 -16l.5 24l.5 -18l.5 13l.5 -12" stroke="#ef8274" stroke-width="1.5" fill="none" stroke-linejoin="bevel"/>
<path d="M662.2 1254.5l.5 0l.5 0l.5 0l.5 0l.5 0l.5 0l.5 0l.5 0l.5 0l.5 0l.5 0l.5 0l.5 -1l.5 1l.5 0l.5 0l.5 0l.5 0l.5 0l.5 0l.5 0l.5 1l.5 -1l.5 0l.5 0l.5 0l.5 0l.5 0l.5 0l.5 0l.5 0l.5 0l.5 0l.5 1l.5 -1l.5 1l.5 -1l.5 1l.5 -1l.5 0l.5 -1l.5 1l.5 -1l.5 1l.5 0l.5 1l.5 -1l.5 0l.5 0l.5 1l.5 -1l.5 0l.5 0l.5 1l.5 -1l.5 0l.5 0l.5 0l.5 0l.5 0l.5 0l.5 0l.5 0l.5 0l.5 0l.5 0l.5 0l.5 0l.5 0l.5 0l.5 0l.5 0l.5 0l.5 0l.5 0l.5 1l.5 -1l.5 0l.5 -1l.5 1l.5 -1l.5 1l.5 0l.5 0l.5 0l.5 0l.5 0l.5 1l.5 -1l.5 0l.5 0l.5 1l.5 -1l.5 0l.5 0l.5 0l.5 0l.5 0l.5 0M964.0 1254.5l.5 -22l.5 51l.5 -9l.5 3l.5 -32l.5 31l.5 9l.5 -31l.5 -25l.5 9l.5 -6l.5 13l.5 -7l.5 35l.5 -35l.5 32l.5 -8l.5 21l.5 -16l.5 5l.5 -41l.5 18l.5 -12l.5 5l.5 -8l.5 13l.5 1l.5 27l.5 -3l.5 6l.5 -8l.5 6l.5 -23l.5 10l.5 -27l.5 10l.5 -17l.5 14l.5 -13l.5 27l.5 -4l.5 16l.5 -11l.5 16l.5 -3l.5 4l.5 -5l.5 7l.5 -23l.5 12l.5 -26l.5 28l.5 -34l.5 9l.5 -19l.5 25l.5 -11l.5 15l.5 -11l.5 13l.5 -6l.5 20l.5 -2l.5 15l.5 -17l.5 19l.5 -16l.5 -23l.5 2l.5 -2l.5 -9l.5 10l.5 -6l.5 11l.5 4l.5 15l.5 -6l.5 5l.5 -9l.5 3l.5 -13l.5 3l.5 -19l.5 21l.5 -19l.5 13l.5 -7l.5 12l.5 -7l.5 -2l.5 14l.5 4l.5 -6l.5 11l.5 -11l.5 10l.5 -21l.5 7l.5 -13l.5 16l.5 -21l.5 12l.5 -9l.5 14l.5 2l.5 6l.5 -4l.5 10l.5 -14l.5 5l.5 -11l.5 13l.5 -15l.5 2l.5 -5l.5 21l.5 -7l.5 9l.5 -7l.5 21l.5 -22l.5 6l.5 -12l.5 14l.5 -23l.5 15l.5 -11l.5 9l.5 -11l.5 9l.5 -5l.5 9l.5 -11l.5 16l.5 -1l.5 4l.5 -8l.5 7l.5 -9l.5 2l.5 -7l.5 -7l.5 -4l.5 12l.5 -6l.5 16l.5 -12l.5 15l.5 -6l.5 7l.5 -11l.5 -1M1043.0 1254.5l.5 0l.5 0l.5 0l.5 0l.5 0l.5 0l.5 -1l.5 1l.5 0l.5 1l.5 -1l.5 0l.5 0M1053.0 1254.5l.5 1l.5 7l.5 -2l.5 4l.5 -2l.5 6l.5 -5l.5 3l.5 -8l.5 6l.5 -14l.5 1l.5 -7l.5 -1l.5 -7l.5 6l.5 0l.5 7l.5 -4l.5 13l.5 -1l.5 11l.5 7l.5 1l.5 -9l.5 -13l.5 -15l.5 2l.5 -14l.5 9l.5 -4l.5 13l.5 4l.5 16l.5 -1l.5 7l.5 0l.5 -5l.5 -8l.5 -8l.5 -5l.5 2l.5 -6l.5 9l.5 -2l.5 7l.5 -7l.5 12l.5 -5l.5 4l.5 -4l.5 3l.5 -5l.5 5l.5 -6l.5 4l.5 -4l.5 3l.5 -3l.5 6l.5 -9l.5 8l.5 -2l.5 2l.5 -2l.5 3l.5 -3l.5 2l.5 -9l.5 7l.5 -5l.5 4l.5 -4l.5 6l.5 -3l.5 6l.5 -6l.5 4l.5 -4l.5 7l.5 -9l.5 6l.5 -9l.5 8l.5 -5l.5 5l.5 -5l.5 8l.5 -10l.5 6l.5 -4l.5 4l.5 -2l.5 4l.5 -5l.5 5l.5 -5l.5 6l.5 -4l.5 2l.5 -9l.5 9l.5 -7l.5 9l.5 -7l.5 7l.5 -7l.5 7l.5 -3l.5 6l.5 -7l.5 3l.5 -5l.5 5l.5 -8l.5 6l.5 -5l.5 4l.5 -5l.5 6l.5 -2l.5 5l.5 -4l.5 4l.5 -6l.5 7l.5 -6l.5 1l.5 -5l.5 5l.5 -4l.5 4l.5 -4l.5 9l.5 -6l.5 4l.5 -7l.5 7l.5 -3l.5 3l.5 -3l.5 7l.5 -6l.5 -1l.5 -4l.5 5l.5 -5l.5 4l.5 -2l.5 5l.5 -7l.5 9l.5 -6l.5 5l.5 34l.5 -36l.5 -4l.5 2l.5 -3l.5 6l.5 -6l.5 4l.5 -5l.5 7l.5 -6l.5 7l.5 -5l.5 4l.5 -4l.5 7l.5 -7l.5 5l.5 -12l.5 8l.5 -3l.5 3l.5 -2l.5 4l.5 -2l.5 5l.5 -6l.5 4l.5 -4l.5 3l.5 -4l.5 4l.5 -6l.5 7l.5 -6l.5 4l.5 -4l.5 3l.5 -2l.5 5l.5 -3l.5 3l.5 -3l.5 3l.5 -3l.5 1l.5 -4l.5 3l.5 -4l.5 4l.5 -6l.5 7l.5 -2l.5 3M1212.0 1254.5l.5 -1l.5 4l.5 -4l.5 4l.5 -5l.5 5l.5 -3l.5 1l.5 -3l.5 3l.5 -3l.5 2l.5 -6l.5 5l.5 -2l.5 5l.5 -3l.5 3l.5 -2l.5 2l.5 -2l.5 2M1233.0 1254.5l.5 0l.5 0l.5 0l.5 0l.5 0l.5 0l.5 0l.5 0l.5 0l.5 0l.5 0l.5 0l.5 0l.5 0l.5 0l.5 0M1266.0 1254.5l.5 0l.5 0l.5 0l.5 0l.5 0l.5 0l.5 0l.5 0l.5 0l.5 0l.5 0l.5 0l.5 0l.5 0l.5 0l.5 0l.5 0l.5 0l.5 0l.5 1l.5 -1l.5 0l.5 0l.5 0l.5 0l.5 0l.5 0l.5 0l.5 0l.5 1l.5 -1l.5 0l.5 0l.5 1l.5 -1l.5 1l.5 -1l.5 0l.5 0l.5 0l.5 0l.5 0l.5 0l.5 0l.5 0l.5 0l.5 0l.5 0l.5 -1l.5 1l.5 0l.5 0l.5 0l.5 0l.5 0l.5 0l.5 0l.5 1l.5 -1l.5 0l.5 0l.5 0l.5 0l.5 0l.5 0l.5 0l.5 0l.5 0l.5 -1l.5 1l.5 0l.5 0l.5 -30l.5 30l.5 40l.5 -40l.5 0l.5 0l.5 0l.5 0l.5 0l.5 1l.5 -1l.5 0M1311.5 1254.5l.5 0l.5 0l.5 0l.5 0l.5 0l.5 1l.5 -1l.5 0M1440.0 1254.5l.5 0l.5 0l.5 0l.5 0l.5 0l.5 0l.5 0l.5 0l.5 0l.5 0l.5 0l.5 1l.5 -1l.5 0l.5 0l.5 0l.5 0l.5 0l.5 0l.5 0l.5 0l.5 0l.5 0l.5 1l.5 -1l.5 0M1486.0 1254.5l.5 0l.5 0l.5 0l.5 0l.5 0l.5 0l.5 0l.5 0l.5 0l.5 0l.5 -1l.5 1l.5 0l.5 0l.5 0l.5 0l.5 0l.5 0l.5 0l.5 0l.5 0l.5 0l.5 0l.5 0l.5 0l.5 1l.5 -1l.5 0l.5 0l.5 0l.5 0l.5 0l.5 0l.5 0l.5 0l.5 1l.5 -1l.5 0l.5 -1l.5 1l.5 0l.5 0l.5 0l.5 1l.5 -1l.5 0l.5 0l.5 0l.5 0l.5 0l.5 -1l.5 1l.5 0l.5 0l.5 0l.5 0l.5 0l.5 1l.5 -1l.5 0l.5 0l.5 0l.5 0l.5 0l.5 -1l.5 1l.5 0l.5 0l.5 0l.5 0l.5 0l.5 0l.5 0l.5 0l.5 0l.5 0l.5 -1l.5 1l.5 0l.5 0l.5 0l.5 0l.5 0l.5 0l.5 0l.5 0l.5 0l.5 0l.5 0l.5 0l.5 0l.5 0l.5 0l.5 0l.5 0l.5 1l.5 -1l.5 0l.5 0l.5 1l.5 -1l.5 0l.5 0l.5 1l.5 -2l.5 1l.5 0l.5 0l.5 0l.5 0l.5 0l.5 0l.5 -1l.5 1l.5 0l.5 0l.5 0l.5 0l.5 0l.5 0l.5 0l.5 1l.5 -1l.5 0l.5 0l.5 0l.5 0l.5 0l.5 0l.5 0l.5 -1l.5 1l.5 0l.5 0l.5 0l.5 0l.5 0l.5 0l.5 0l.5 0l.5 0l.5 0l.5 0l.5 0l.5 0l.5 0l.5 0l.5 0l.5 0l.5 0l.5 0l.5 0l.5 0l.5 0l.5 0l.5 0l.5 0l.5 0l.5 0l.5 0l.5 0l.5 0l.5 0l.5 0l.5 0l.5 0l.5 -1l.5 1l.5 0l.5 0l.5 0l.5 0l.5 -1l.5 1l.5 0l.5 0l.5 0l.5 0l.5 0l.5 0l.5 0l.5 0l.5 0l.5 0l.5 0l.5 1l.5 -1l.5 0l.5 0l.5 1l.5 -1l.5 0l.5 0l.5 0l.5 0l.5 0l.5 0l.5 0l.5 0l.5 0l.5 0l.5 0l.5 0l.5 0l.5 0l.5 0l.5 0l.5 0l.5 0l.5 0l.5 0l.5 0l.5 0l.5 0l.5 0l.5 1l.5 -2l.5 1l.5 0l.5 0l.5 0l.5 1M1626.5 1254.5l.5 0l.5 0l.5 0l.5 1l.5 -1l.5 0l.5 0l.5 0l.5 0l.5 0l.5 -1l.5 1l.5 -1l.5 1l.5 0l.5 0l.5 -1l.5 1l.5 0l.5 0l.5 0l.5 0l.5 0l.5 0l.5 0l.5 0l.5 0l.5 0l.5 -1l.5 1l.5 0l.5 0l.5 -2l.5 2l.5 -1l.5 1l.5 0l.5 0l.5 0l.5 0l.5 0l.5 0l.5 0l.5 0l.5 0l.5 0l.5 0M1695.5 1254.5l.5 -1l.5 2l.5 -2l.5 1l.5 -1l.5 1l.5 0M1703.0 1254.5l.5 -1l.5 1l.5 0l.5 0l.5 -1l.5 1l.5 -1M1713.5 1254.5l.5 0l.5 0l.5 0l.5 0l.5 0l.5 0l.5 0l.5 0l.5 0l.5 0l.5 0l.5 0l.5 0l.5 0l.5 0l.5 1l.5 -2l.5 2l.5 -1l.5 0l.5 0l.5 0l.5 0l.5 0l.5 -1l.5 1l.5 0l.5 0l.5 -1l.5 1l.5 0l.5 0l.5 0l.5 0l.5 0l.5 0l.5 -1l.5 1l.5 -1l.5 1l.5 0l.5 0l.5 0l.5 0l.5 0l.5 0l.5 0l.5 0l.5 0l.5 0l.5 0l.5 1l.5 -1l.5 0l.5 0l.5 0l.5 -1l.5 1l.5 0l.5 0l.5 0l.5 0l.5 0l.5 1l.5 -1l.5 0l.5 0l.5 0l.5 0l.5 1l.5 -2l.5 1l.5 0l.5 0l.5 0l.5 1l.5 -1l.5 0l.5 0l.5 0l.5 0l.5 0l.5 0l.5 1l.5 -1l.5 0l.5 0l.5 0l.5 0l.5 0l.5 0l.5 0l.5 0l.5 0l.5 -1l.5 1l.5 0l.5 0l.5 -1l.5 1l.5 0l.5 0l.5 -1l.5 1l.5 0l.5 1l.5 -1l.5 0l.5 -1l.5 1l.5 0l.5 0l.5 0l.5 0l.5 0l.5 0l.5 0l.5 0l.5 0l.5 0l.5 0l.5 0l.5 0l.5 0l.5 0l.5 0l.5 0l.5 0l.5 0l.5 0l.5 0l.5 0l.5 0l.5 0l.5 0l.5 0l.5 0l.5 1l.5 -1l.5 0l.5 0l.5 1l.5 -1l.5 0l.5 0l.5 0l.5 0l.5 0l.5 0l.5 0l.5 0l.5 0l.5 0l.5 0l.5 0l.5 0l.5 0l.5 0l.5 0l.5 0l.5 0l.5 0l.5 0l.5 1l.5 -1l.5 0l.5 0l.5 0l.5 0l.5 0l.5 0l.5 0l.5 0l.5 0l.5 0l.5 1l.5 -1l.5 0l.5 0l.5 0l.5 0l.5 0l.5 0l.5 0l.5 0l.5 0l.5 0l.5 0l.5 -1l.5 1l.5 0l.5 0l.5 0l.5 0l.5 0l.5 0l.5 0l.5 0l.5 0l.5 0l.5 -1l.5 2l.5 -1l.5 0l.5 0l.5 0l.5 0l.5 0l.5 -1l.5 1l.5 -1l.5 1l.5 0l.5 0l.5 0l.5 0l.5 0l.5 0l.5 0l.5 0l.5 -1l.5 1l.5 0l.5 0l.5 0l.5 0l.5 0l.5 0l.5 0l.5 0l.5 0l.5 0l.5 0l.5 0l.5 0l.5 0l.5 0l.5 0l.5 0l.5 0l.5 0l.5 0l.5 0l.5 0l.5 0l.5 0l.5 0l.5 0l.5 0l.5 0l.5 0l.5 0l.5 0l.5 0l.5 0l.5 0l.5 -1l.5 1l.5 0l.5 0l.5 0l.5 0l.5 0l.5 1l.5 -1l.5 0l.5 0l.5 0l.5 0l.5 1l.5 -2l.5 2l.5 -1l.5 0l.5 0l.5 0l.5 0l.5 0l.5 0l.5 0l.5 0l.5 0l.5 0l.5 0l.5 0l.5 0l.5 0l.5 0l.5 0l.5 0l.5 0l.5 0l.5 0l.5 0l.5 0l.5 0l.5 0l.5 0l.5 0l.5 0l.5 0l.5 0l.5 0l.5 0l.5 0l.5 0l.5 0l.5 0l.5 0l.5 1l.5 -1l.5 0l.5 -1l.5 2l.5 -1l.5 0l.5 0l.5 0l.5 0l.5 0l.5 0l.5 0l.5 0l.5 0l.5 0l.5 0l.5 0l.5 0l.5 0l.5 0l.5 0l.5 0l.5 0l.5 0l.5 0l.5 0l.5 0l.5 0l.5 0l.5 1l.5 -1l.5 0l.5 0l.5 1l.5 -1l.5 0l.5 0l.5 0l.5 0l.5 0l.5 0l.5 0l.5 0l.5 0l.5 0l.5 1l.5 -1l.5 0l.5 0l.5 0l.5 0l.5 0l.5 0l.5 0l.5 0l.5 0l.5 0l.5 0l.5 0l.5 0l.5 0l.5 0l.5 0l.5 0l.5 0l.5 0l.5 0l.5 0l.5 0l.5 0l.5 -1l.5 1l.5 -1l.5 1l.5 0l.5 0l.5 0l.5 0l.5 0l.5 0l.5 0l.5 0l.5 0l.5 0l.5 0l.5 0l.5 0l.5 0l.5 0l.5 0l.5 0M2059.0 1254.5l.5 0l.5 0l.5 0l.5 0l.5 0l.5 0l.5 -1l.5 1l.5 0l.5 0l.5 0l.5 0l.5 0l.5 0l.5 -1l.5 1l.5 0l.5 0l.5 0l.5 0l.5 0l.5 0l.5 0l.5 0l.5 0l.5 0l.5 0l.5 0l.5 0l.5 0l.5 0l.5 0l.5 0l.5 0l.5 0l.5 1l.5 -1l.5 0l.5 0l.5 0l.5 0l.5 0l.5 0l.5 0l.5 0l.5 1l.5 -1l.5 0l.5 0l.5 0l.5 -1l.5 1l.5 -1l.5 1l.5 0l.5 0l.5 0l.5 0l.5 0l.5 1l.5 -1l.5 0l.5 0l.5 0l.5 0l.5 0l.5 0l.5 0l.5 0l.5 0l.5 0l.5 0l.5 0l.5 0l.5 0l.5 1l.5 -2l.5 1l.5 0l.5 0l.5 0l.5 0l.5 0l.5 0l.5 0l.5 0l.5 0l.5 0l.5 0l.5 0l.5 0l.5 0l.5 0l.5 0l.5 0l.5 0l.5 -1l.5 2l.5 -1l.5 0l.5 -1l.5 1l.5 0l.5 0l.5 -1l.5 1l.5 0l.5 1l.5 -1l.5 1l.5 -2l.5 1l.5 0l.5 0l.5 0l.5 0l.5 -1l.5 1l.5 40l.5 -40l.5 0l.5 0l.5 -1l.5 1l.5 0l.5 0l.5 0l.5 0l.5 0l.5 0l.5 0l.5 0l.5 0l.5 0l.5 0l.5 1l.5 -1l.5 0l.5 0l.5 0l.5 0l.5 0l.5 0l.5 0l.5 -1l.5 1l.5 0l.5 0l.5 0l.5 0l.5 0l.5 0l.5 0l.5 0l.5 0l.5 1l.5 -1l.5 0l.5 -20l.5 20l.5 25l.5 -25l.5 0l.5 1l.5 -1l.5 0l.5 0l.5 0l.5 0l.5 0l.5 0l.5 0l.5 -1l.5 2l.5 -1l.5 0l.5 0l.5 0l.5 0l.5 0l.5 0l.5 0l.5 0l.5 0l.5 0l.5 0l.5 0l.5 0l.5 0l.5 0l.5 0l.5 0l.5 0l.5 0l.5 0l.5 0l.5 0l.5 0l.5 0l.5 1l.5 -1l.5 0l.5 0l.5 0l.5 -1l.5 1l.5 0l.5 0l.5 0l.5 0l.5 0l.5 0l.5 0l.5 0l.5 0l.5 0l.5 0l.5 0l.5 0l.5 1l.5 -1l.5 0l.5 0l.5 1l.5 -1l.5 1l.5 -1l.5 0l.5 0l.5 0l.5 0l.5 0l.5 0l.5 0l.5 -1l.5 1l.5 0l.5 0l.5 0l.5 0l.5 0l.5 1l.5 -1l.5 0l.5 0l.5 1l.5 -1l.5 0l.5 0l.5 0l.5 0l.5 0l.5 0l.5 0l.5 0l.5 0l.5 0l.5 0l.5 0l.5 0l.5 0l.5 0l.5 0l.5 0l.5 0l.5 0l.5 0l.5 1l.5 -2l.5 1l.5 0l.5 1l.5 -1l.5 0l.5 0l.5 0l.5 0l.5 0l.5 0l.5 0l.5 0l.5 0l.5 0l.5 0l.5 0l.5 0l.5 0l.5 0l.5 0l.5 0l.5 0l.5 0l.5 0l.5 0l.5 0l.5 0l.5 0l.5 0l.5 0l.5 0l.5 0l.5 0l.5 0l.5 0l.5 0l.5 0l.5 0l.5 0l.5 0l.5 0l.5 0l.5 0l.5 0l.5 0l.5 0l.5 0l.5 0l.5 0l.5 0l.5 0l.5 0l.5 0l.5 0l.5 0l.5 0l.5 0l.5 0l.5 0l.5 0l.5 0l.5 0l.5 1l.5 -1l.5 0l.5 0l.5 0l.5 0l.5 1l.5 -1l.5 1l.5 -1l.5 0l.5 0l.5 0l.5 -1l.5 1l.5 0l.5 0l.5 0l.5 0l.5 0l.5 0l.5 0l.5 0l.5 0l.5 0l.5 0l.5 0l.5 -1l.5 1l.5 0l.5 0l.5 0l.5 0l.5 0l.5 1l.5 -1l.5 0l.5 0l.5 0l.5 0l.5 0l.5 0l.5 0l.5 0l.5 0l.5 0l.5 0l.5 0l.5 1l.5 -1l.5 0l.5 0l.5 0l.5 0l.5 0l.5 -1l.5 1l.5 0l.5 0l.5 -1l.5 1l.5 0l.5 0l.5 -1l.5 1l.5 0l.5 0l.5 0l.5 0l.5 0l.5 0l.5 0l.5 0l.5 0l.5 0l.5 0l.5 0l.5 0l.5 0l.5 0l.5 0l.5 0l.5 0l.5 0l.5 0l.5 0l.5 0l.5 -1l.5 1l.5 0l.5 0l.5 0l.5 0l.5 0l.5 0l.5 0l.5 0l.5 0l.5 0l.5 0l.5 0l.5 0l.5 0l.5 -1l.5 1l.5 0l.5 0l.5 -1l.5 1l.5 0l.5 0l.5 0l.5 0l.5 0l.5 0l.5 0l.5 0l.5 0l.5 0l.5 0l.5 0l.5 0l.5 0l.5 0l.5 0l.5 0l.5 0l.5 0l.5 0l.5 0l.5 0l.5 0l.5 0l.5 0l.5 0l.5 0l.5 1l.5 -1l.5 0l.5 0l.5 1M2498.5 1254.5l.5 0l.5 0l.5 -1l.5 1l.5 0l.5 0l.5 0l.5 0l.5 0l.5 0l.5 0l.5 0l.5 0l.5 0l.5 -1l.5 1l.5 -1l.5 1l.5 0l.5 0l.5 0l.5 0l.5 0l.5 0l.5 0l.5 0l.5 0l.5 0l.5 -1l.5 1l.5 0l.5 1l.5 -1l.5 0l.5 0l.5 0l.5 0l.5 0l.5 0l.5 0l.5 0l.5 1l.5 -1l.5 0l.5 0l.5 0l.5 0l.5 1l.5 -1l.5 0l.5 0l.5 0l.5 0l.5 0l.5 0l.5 0l.5 0l.5 0l.5 0l.5 1l.5 -1l.5 0l.5 0l.5 0l.5 0l.5 0l.5 0l.5 0l.5 0l.5 0l.5 0l.5 0l.5 0l.5 0l.5 -1l.5 1l.5 0l.5 0l.5 0l.5 0l.5 0l.5 0l.5 -1l.5 1l.5 0l.5 0l.5 0l.5 0l.5 0l.5 0l.5 0l.5 0l.5 0l.5 1l.5 -2l.5 1l.5 0l.5 0l.5 0l.5 0l.5 0l.5 0l.5 0l.5 0l.5 0l.5 0l.5 0l.5 0l.5 0l.5 0l.5 0l.5 0l.5 0l.5 0l.5 0l.5 1l.5 -2l.5 1l.5 0l.5 0l.5 0l.5 0l.5 0l.5 0l.5 0l.5 0l.5 0l.5 0l.5 0l.5 0l.5 0l.5 0l.5 0l.5 0l.5 0l.5 0l.5 0l.5 1l.5 -1l.5 0l.5 0l.5 0l.5 0l.5 0l.5 0l.5 0l.5 0l.5 0l.5 0l.5 1l.5 -1l.5 0l.5 0l.5 0l.5 0M2585.5 1254.5l.5 0l.5 0l.5 0l.5 0l.5 0" stroke="#b9bca6" stroke-width="1.5" fill="none" stroke-linejoin="bevel"/>
<path d="M662.2 1313l.5 -1l.5 2l.5 -2l.5 2l.5 -3l.5 5l.5 -6l.5 4l.5 -3l.5 5l.5 -7l.5 6l.5 -6l.5 5l.5 -2l.5 2l.5 -3l.5 2l.5 -3l.5 7l.5 -5l.5 3l.5 -4l.5 6l.5 -6l.5 2l.5 -1l.5 2l.5 -3l.5 4l.5 -4l.5 3l.5 -2l.5 1l.5 -3l.5 5l.5 -3l.5 3l.5 -3l.5 2l.5 -2l.5 3l.5 -3l.5 3l.5 -3l.5 4l.5 -5l.5 4l.5 -3l.5 2l.5 -2l.5 3l.5 -3l.5 3l.5 -3l.5 2l.5 -2l.5 2l.5 -6l.5 6l.5 -2l.5 6l.5 -6l.5 2l.5 -3l.5 6l.5 -7l.5 4l.5 -5l.5 5l.5 -3l.5 3l.5 -3l.5 4l.5 -5l.5 3l.5 -2l.5 5l.5 -6l.5 3l.5 -2l.5 2l.5 -2l.5 2l.5 -2l.5 2l.5 -2l.5 2l.5 -1l.5 2l.5 -4l.5 4l.5 -4l.5 5l.5 -4l.5 4l.5 -5l.5 4l.5 -2M964.0 1313l.5 -1l.5 2l.5 -2l.5 2l.5 -3l.5 2l.5 -2l.5 3l.5 -4l.5 4l.5 -3l.5 2l.5 -2l.5 3l.5 -3l.5 3l.5 -3l.5 3l.5 -2l.5 2l.5 -2l.5 3l.5 -4l.5 5l.5 -4l.5 3l.5 -4l.5 2l.5 -1l.5 2l.5 -2l.5 3l.5 -3l.5 2l.5 -2l.5 3l.5 -3l.5 3l.5 -3l.5 2l.5 -5l.5 5l.5 -2l.5 5l.5 -6l.5 4l.5 -4l.5 4l.5 -3l.5 2l.5 -3l.5 4l.5 -3l.5 3l.5 -5l.5 4l.5 -3l.5 3l.5 -4l.5 4l.5 -3l.5 4l.5 -3l.5 2l.5 -3l.5 6l.5 -5l.5 2l.5 -3l.5 5l.5 -4l.5 2l.5 -2l.5 2l.5 -4l.5 4l.5 -2l.5 2l.5 -2l.5 3l.5 -4l.5 3l.5 -2l.5 5l.5 -5l.5 5l.5 -5l.5 2l.5 -4l.5 5l.5 -3l.5 3l.5 -2l.5 2l.5 -2l.5 2l.5 -2l.5 2l.5 -3l.5 4l.5 -5l.5 3l.5 -2l.5 2l.5 -3l.5 3l.5 31l.5 -30l.5 -3l.5 2l.5 -3l.5 4l.5 -3l.5 4l.5 -4l.5 3l.5 -3l.5 2l.5 -2l.5 5l.5 -5l.5 3l.5 -3l.5 3l.5 -3l.5 2l.5 -2l.5 2l.5 -2l.5 2l.5 -2l.5 2l.5 -2l.5 1l.5 -2l.5 4l.5 -4l.5 3l.5 -3l.5 2l.5 -2l.5 3l.5 -3l.5 3l.5 -3l.5 4l.5 -3l.5 2l.5 -1l.5 1l.5 -2l.5 2M1043.0 1313l.5 -1l.5 4l.5 -6l.5 6l.5 -4l.5 2l.5 -2l.5 2l.5 -2l.5 3l.5 -3l.5 1l.5 -1M1053.0 1313l.5 -5l.5 6l.5 -2l.5 5l.5 -5l.5 2l.5 -3l.5 4l.5 -4l.5 3l.5 -3l.5 2l.5 -3l.5 3l.5 -2l.5 4l.5 -4l.5 4l.5 -4l.5 6l.5 -7l.5 3l.5 -2l.5 3l.5 -4l.5 4l.5 -7l.5 8l.5 -4l.5 3l.5 -3l.5 3l.5 -6l.5 5l.5 -3l.5 8l.5 -8l.5 7l.5 64l.5 -65l.5 -4l.5 2l.5 -2l.5 4l.5 -4l.5 2l.5 -2l.5 2l.5 -3l.5 3l.5 -4l.5 3l.5 -2l.5 2l.5 -3l.5 3l.5 -2l.5 5l.5 -6l.5 4l.5 -3l.5 4l.5 -4l.5 2l.5 -1l.5 4l.5 -4l.5 3l.5 -5l.5 4l.5 -2l.5 3l.5 -4l.5 3l.5 -6l.5 7l.5 -5l.5 7l.5 -5l.5 3l.5 -4l.5 6l.5 -5l.5 2l.5 -2l.5 3l.5 -5l.5 5l.5 -5l.5 4l.5 -2l.5 2l.5 -2l.5 4l.5 -3l.5 2l.5 -4l.5 6l.5 -5l.5 4l.5 -4l.5 3l.5 -3l.5 3l.5 -2l.5 2l.5 -3l.5 3l.5 -2l.5 3l.5 -3l.5 2l.5 -3l.5 3l.5 -2l.5 2l.5 -3l.5 3l.5 -3l.5 2l.5 -2l.5 2l.5 -1l.5 3l.5 -4l.5 2l.5 -2l.5 4l.5 -5l.5 5l.5 -4l.5 2l.5 -2l.5 2l.5 -3l.5 4l.5 -3l.5 2l.5 -3l.5 4l.5 -3l.5 3l.5 -3l.5 3l.5 -3l.5 4l.5 -3l.5 2l.5 -7l.5 7l.5 -3l.5 3l.5 -2l.5 1l.5 -2l.5 2l.5 -2l.5 2l.5 -2l.5 2l.5 -2l.5 3l.5 -3l.5 4l.5 -6l.5 7l.5 -5l.5 3l.5 -7l.5 6l.5 -2l.5 3l.5 -3l.5 5l.5 -7l.5 4l.5 -1l.5 3l.5 -4l.5 3l.5 -4l.5 4l.5 -3l.5 3l.5 -5l.5 7l.5 -5l.5 3l.5 -3l.5 2l.5 -2l.5 2l.5 -2l.5 5l.5 -6l.5 4l.5 -3l.5 2l.5 -3l.5 3l.5 -2l.5 2l.5 -2l.5 2l.5 -3l.5 3l.5 -1l.5 2M1212.0 1313l.5 -2l.5 3l.5 -3l.5 3l.5 -2l.5 4l.5 -4l.5 3l.5 -5l.5 4l.5 -2l.5 3l.5 -4l.5 3l.5 -2l.5 2l.5 -2l.5 2l.5 -2l.5 2l.5 -3l.5 2M1233.0 1313l.5 -1l.5 3l.5 -3l.5 3l.5 -3l.5 3l.5 -3l.5 5l.5 -6l.5 4l.5 -3l.5 3l.5 -3l.5 2l.5 -4l.5 5M1266.0 1313l.5 -1l.5 5l.5 -5l.5 1l.5 -2l.5 3l.5 -3l.5 4l.5 -4l.5 3l.5 -3l.5 3l.5 -3l.5 3l.5 -3l.5 3l.5 -4l.5 3l.5 -3l.5 3l.5 -3l.5 3l.5 -3l.5 5l.5 -4l.5 2l.5 -1l.5 3l.5 -4l.5 3l.5 -3l.5 5l.5 -5l.5 4l.5 -4l.5 3l.5 -2l.5 2l.5 -3l.5 2l.5 -1l.5 2l.5 -4l.5 4l.5 -2l.5 3l.5 -3l.5 3l.5 -4l.5 2l.5 -1l.5 3l.5 -4l.5 3l.5 -3l.5 3l.5 -4l.5 5l.5 -3l.5 6l.5 -7l.5 2l.5 -2l.5 4l.5 -4l.5 4l.5 -3l.5 2l.5 -2l.5 4l.5 -4l.5 3l.5 68l.5 -68l.5 -3l.5 3l.5 -2l.5 5l.5 -5l.5 1l.5 -2l.5 3l.5 -3l.5 3M1311.5 1313l.5 -1l.5 6l.5 -6l.5 2l.5 -2l.5 3l.5 -3l.5 4M1440.0 1313l.5 -2l.5 4l.5 -3l.5 3l.5 -5l.5 5l.5 -6l.5 5l.5 -2l.5 2l.5 -2l.5 3l.5 -3l.5 2l.5 -1l.5 2l.5 -4l.5 4l.5 -3l.5 2l.5 -3l.5 4l.5 -3l.5 2l.5 -6l.5 6M1486.0 1313l.5 -3l.5 4l.5 -3l.5 4l.5 -3l.5 3l.5 -4l.5 3l.5 -3l.5 6l.5 -4l.5 3l.5 -4l.5 3l.5 -5l.5 5l.5 -5l.5 4l.5 -2l.5 2l.5 -4l.5 3l.5 -3l.5 3l.5 -3l.5 8l.5 -7l.5 2l.5 -3l.5 6l.5 -7l.5 4l.5 -4l.5 5l.5 -4l.5 4l.5 -4l.5 3l.5 -3l.5 4l.5 -3l.5 3l.5 -3l.5 5l.5 -4l.5 2l.5 -5l.5 6l.5 -3l.5 3l.5 -4l.5 4l.5 -3l.5 3l.5 -3l.5 3l.5 -4l.5 5l.5 -3l.5 1l.5 -1l.5 2l.5 -3l.5 4l.5 -4l.5 2l.5 -3l.5 5l.5 -7l.5 5l.5 -3l.5 4l.5 -4l.5 4l.5 -5l.5 4l.5 -4l.5 6l.5 -6l.5 4l.5 -5l.5 8l.5 -7l.5 5l.5 -4l.5 2l.5 -2l.5 3l.5 -2l.5 2l.5 -3l.5 3l.5 -2l.5 2l.5 -2l.5 2l.5 -2l.5 2l.5 -4l.5 6l.5 -4l.5 2l.5 -2l.5 3l.5 -3l.5 2l.5 -2l.5 2l.5 -3l.5 3l.5 -2l.5 3l.5 -4l.5 2l.5 -2l.5 3l.5 -3l.5 6l.5 -7l.5 4l.5 -3l.5 4l.5 -3l.5 1l.5 -3l.5 4l.5 -3l.5 3l.5 -3l.5 5l.5 -4l.5 2l.5 -2l.5 2l.5 -4l.5 5l.5 -3l.5 4l.5 -5l.5 4l.5 -3l.5 3l.5 -3l.5 5l.5 -5l.5 2l.5 -2l.5 2l.5 -2l.5 3l.5 -2l.5 1l.5 -7l.5 7l.5 -2l.5 2l.5 -3l.5 4l.5 -3l.5 2l.5 -2l.5 2l.5 -1l.5 2l.5 -4l.5 3l.5 -2l.5 3l.5 -3l.5 2l.5 -1l.5 2l.5 -3l.5 3l.5 -3l.5 3l.5 -3l.5 2l.5 -2l.5 6l.5 -7l.5 4l.5 -3l.5 2l.5 -4l.5 4l.5 -2l.5 2l.5 -3l.5 3l.5 -2l.5 1l.5 -2l.5 3l.5 -4l.5 6l.5 -7l.5 6l.5 -3l.5 3l.5 -2l.5 2l.5 -3l.5 3l.5 -3l.5 3l.5 -3l.5 4l.5 -4l.5 2l.5 -2l.5 4l.5 -6l.5 5l.5 -3l.5 3l.5 -7l.5 8l.5 -4l.5 6l.5 -7l.5 3M1626.5 1313l.5 -2l.5 3l.5 -5l.5 6l.5 -3l.5 5l.5 -5l.5 2l.5 -2l.5 2l.5 -2l.5 3l.5 -3l.5 3l.5 -3l.5 2l.5 -3l.5 3l.5 -2l.5 3l.5 -3l.5 1l.5 -2l.5 4l.5 -4l.5 4l.5 -4l.5 3l.5 -2l.5 2l.5 -3l.5 2l.5 -1l.5 2l.5 -3l.5 5l.5 -5l.5 6l.5 -5l.5 2l.5 -2l.5 3l.5 -5l.5 4l.5 -3l.5 4l.5 -4M1695.5 1313l.5 -2l.5 3l.5 -3l.5 3l.5 -1l.5 2l.5 -3M1703.0 1313l.5 -1l.5 2l.5 -3l.5 3l.5 -3l.5 6l.5 -6M1713.5 1313l.5 -2l.5 4l.5 -4l.5 4l.5 -3l.5 3l.5 -2l.5 1l.5 -1l.5 3l.5 -3l.5 3l.5 -5l.5 4l.5 -3l.5 3l.5 -2l.5 5l.5 -5l.5 2l.5 -2l.5 1l.5 -1l.5 2l.5 -6l.5 5l.5 -4l.5 5l.5 -2l.5 2l.5 -4l.5 3l.5 -3l.5 6l.5 -5l.5 3l.5 -3l.5 2l.5 -4l.5 4l.5 -3l.5 3l.5 -5l.5 4l.5 -3l.5 4l.5 -3l.5 3l.5 -2l.5 3l.5 -3l.5 2l.5 -3l.5 4l.5 -2l.5 2l.5 -3l.5 2l.5 -2l.5 3l.5 -4l.5 4l.5 -3l.5 5l.5 -6l.5 5l.5 -4l.5 2l.5 -2l.5 3l.5 -4l.5 3l.5 -2l.5 4l.5 -4l.5 3l.5 -3l.5 3l.5 -7l.5 6l.5 -3l.5 3l.5 -3l.5 3l.5 -2l.5 3l.5 -4l.5 3l.5 -4l.5 5l.5 -7l.5 6l.5 -3l.5 2l.5 -2l.5 4l.5 -4l.5 4l.5 -8l.5 6l.5 -2l.5 3l.5 -6l.5 5l.5 -3l.5 6l.5 -5l.5 3l.5 -4l.5 3l.5 -4l.5 6l.5 -3l.5 3l.5 -6l.5 5l.5 -2l.5 5l.5 -6l.5 3l.5 -3l.5 4l.5 -3l.5 1l.5 -5l.5 9l.5 -6l.5 3l.5 -7l.5 8l.5 -4l.5 3l.5 -6l.5 6l.5 -4l.5 4l.5 -4l.5 3l.5 -2l.5 2l.5 -1l.5 2l.5 -2l.5 2l.5 -6l.5 6l.5 -3l.5 3l.5 -2l.5 2l.5 -2l.5 2l.5 -2l.5 2l.5 -2l.5 2l.5 -4l.5 4l.5 -2l.5 3l.5 -3l.5 3l.5 -7l.5 6l.5 -2l.5 3l.5 -3l.5 2l.5 -2l.5 2l.5 -4l.5 4l.5 -3l.5 4l.5 -4l.5 2l.5 -3l.5 4l.5 -3l.5 3l.5 -4l.5 4l.5 -5l.5 8l.5 -5l.5 2l.5 -2l.5 3l.5 -3l.5 5l.5 -6l.5 4l.5 -7l.5 8l.5 -4l.5 3l.5 -3l.5 3l.5 -7l.5 7l.5 -4l.5 6l.5 -6l.5 3l.5 -3l.5 3l.5 -4l.5 3l.5 -1l.5 2l.5 -2l.5 2l.5 -2l.5 2l.5 -2l.5 2l.5 -2l.5 1l.5 -2l.5 3l.5 -4l.5 4l.5 -3l.5 3l.5 -2l.5 2l.5 -7l.5 9l.5 -5l.5 2l.5 -3l.5 4l.5 -5l.5 5l.5 -3l.5 2l.5 -1l.5 2l.5 -2l.5 3l.5 -3l.5 2l.5 -2l.5 2l.5 -1l.5 4l.5 -6l.5 3l.5 -2l.5 2l.5 -3l.5 4l.5 -4l.5 3l.5 -3l.5 4l.5 -6l.5 5l.5 -2l.5 2l.5 -6l.5 6l.5 -2l.5 2l.5 -3l.5 5l.5 -4l.5 2l.5 -2l.5 2l.5 -2l.5 3l.5 -5l.5 5l.5 -4l.5 8l.5 -7l.5 2l.5 -1l.5 1l.5 -1l.5 5l.5 -6l.5 4l.5 -4l.5 3l.5 -3l.5 2l.5 -3l.5 3l.5 -2l.5 2l.5 -3l.5 4l.5 -3l.5 2l.5 -2l.5 1l.5 -2l.5 2l.5 -1l.5 2l.5 -6l.5 6l.5 -2l.5 4l.5 -4l.5 3l.5 -3l.5 4l.5 -3l.5 4l.5 -7l.5 5l.5 -3l.5 3l.5 -3l.5 2l.5 -3l.5 3l.5 -2l.5 2l.5 -3l.5 3l.5 -2l.5 3l.5 -4l.5 3l.5 -3l.5 3l.5 -1l.5 1l.5 -1l.5 5l.5 -9l.5 6l.5 -2l.5 3l.5 -5l.5 5l.5 -5l.5 4l.5 -3l.5 3l.5 -7l.5 6l.5 -3l.5 3l.5 -4l.5 5l.5 -3l.5 5l.5 -6l.5 2l.5 -3l.5 3l.5 -3l.5 5l.5 -4l.5 7l.5 -7l.5 2l.5 -2l.5 3l.5 -4l.5 4l.5 -3l.5 2l.5 -2l.5 2l.5 -2l.5 2l.5 -2l.5 3l.5 -6l.5 5l.5 -2l.5 3l.5 -3l.5 4l.5 -5l.5 4l.5 -2l.5 2l.5 -2l.5 1l.5 -2l.5 3l.5 -3l.5 4l.5 -5l.5 4l.5 -3l.5 3l.5 -3l.5 2l.5 -4l.5 8l.5 -6l.5 5l.5 -5M2059.0 1313l.5 -1l.5 2l.5 -2l.5 6l.5 -7l.5 4l.5 -3l.5 2l.5 -3l.5 4l.5 -5l.5 3l.5 -2l.5 3l.5 -3l.5 2l.5 -2l.5 2l.5 -3l.5 5l.5 -4l.5 3l.5 -2l.5 1l.5 -2l.5 3l.5 -3l.5 5l.5 -6l.5 4l.5 -2l.5 4l.5 -4l.5 2l.5 -2l.5 4l.5 -4l.5 3l.5 -3l.5 2l.5 -3l.5 3l.5 -6l.5 7l.5 -3l.5 2l.5 -2l.5 2l.5 -2l.5 2l.5 -2l.5 3l.5 -5l.5 4l.5 -5l.5 6l.5 -3l.5 2l.5 -2l.5 2l.5 -3l.5 3l.5 -2l.5 2l.5 -3l.5 7l.5 -6l.5 3l.5 -3l.5 3l.5 -3l.5 2l.5 -3l.5 3l.5 -2l.5 2l.5 -5l.5 5l.5 -2l.5 2l.5 -2l.5 6l.5 -6l.5 3l.5 -3l.5 2l.5 -2l.5 2l.5 -2l.5 3l.5 -4l.5 5l.5 -3l.5 2l.5 -4l.5 4l.5 -2l.5 2l.5 -2l.5 1l.5 -2l.5 3l.5 -3l.5 3l.5 -3l.5 3l.5 -4l.5 3l.5 -2l.5 1l.5 -2l.5 2l.5 -2l.5 4l.5 -5l.5 4l.5 -3l.5 3l.5 -3l.5 3l.5 -5l.5 5l.5 -3l.5 3l.5 -4l.5 7l.5 -5l.5 2l.5 -1l.5 3l.5 -3l.5 1l.5 -2l.5 3l.5 -2l.5 3l.5 -7l.5 7l.5 -4l.5 2l.5 -6l.5 6l.5 -2l.5 3l.5 -5l.5 6l.5 -4l.5 3l.5 -3l.5 3l.5 -3l.5 3l.5 -3l.5 3l.5 -5l.5 4l.5 -3l.5 3l.5 -3l.5 4l.5 -3l.5 2l.5 -2l.5 2l.5 -3l.5 5l.5 -4l.5 1l.5 -3l.5 3l.5 -1l.5 3l.5 -3l.5 3l.5 -4l.5 3l.5 -3l.5 2l.5 -3l.5 6l.5 -5l.5 3l.5 -4l.5 4l.5 -2l.5 2l.5 -2l.5 2l.5 -6l.5 6l.5 -2l.5 3l.5 -4l.5 3l.5 -2l.5 1l.5 -1l.5 2l.5 -3l.5 3l.5 -4l.5 3l.5 -2l.5 2l.5 -1l.5 3l.5 -4l.5 4l.5 -4l.5 4l.5 -4l.5 4l.5 -4l.5 3l.5 -1l.5 1l.5 -2l.5 3l.5 -3l.5 3l.5 -3l.5 2l.5 -3l.5 4l.5 -7l.5 7l.5 -2l.5 2l.5 -4l.5 5l.5 -5l.5 3l.5 -6l.5 7l.5 -6l.5 5l.5 -2l.5 4l.5 -6l.5 4l.5 -4l.5 4l.5 -4l.5 3l.5 -2l.5 2l.5 -2l.5 3l.5 -2l.5 2l.5 -3l.5 3l.5 -3l.5 4l.5 -4l.5 3l.5 -2l.5 7l.5 -8l.5 4l.5 -2l.5 2l.5 -4l.5 4l.5 -4l.5 4l.5 -2l.5 2l.5 -2l.5 3l.5 -3l.5 3l.5 -3l.5 2l.5 -3l.5 3l.5 -4l.5 3l.5 -1l.5 2l.5 -2l.5 1l.5 -4l.5 5l.5 -4l.5 4l.5 -3l.5 3l.5 -3l.5 3l.5 -3l.5 3l.5 -5l.5 5l.5 -5l.5 4l.5 -2l.5 1l.5 -2l.5 2l.5 -2l.5 3l.5 -4l.5 4l.5 -3l.5 3l.5 -2l.5 3l.5 -3l.5 2l.5 -2l.5 2l.5 -3l.5 4l.5 -4l.5 3l.5 -3l.5 4l.5 -5l.5 5l.5 -3l.5 2l.5 -2l.5 2l.5 -3l.5 7l.5 -8l.5 5l.5 -4l.5 3l.5 -3l.5 3l.5 -3l.5 4l.5 -4l.5 3l.5 -5l.5 4l.5 -2l.5 4l.5 -4l.5 3l.5 -2l.5 2l.5 -2l.5 3l.5 -3l.5 3l.5 -5l.5 5l.5 -3l.5 3l.5 -2l.5 1l.5 -1l.5 2l.5 -6l.5 6l.5 -4l.5 3l.5 -2l.5 2l.5 -2l.5 5l.5 -5l.5 3l.5 -3l.5 4l.5 -3l.5 3l.5 -5l.5 4l.5 -2l.5 3l.5 -7l.5 6l.5 -5l.5 5l.5 -4l.5 4l.5 -2l.5 4l.5 -5l.5 2l.5 -1l.5 2l.5 -2l.5 1l.5 -1l.5 3l.5 -5l.5 3l.5 -2l.5 3l.5 -3l.5 3l.5 -4l.5 3l.5 -5l.5 6l.5 -3l.5 3l.5 -4l.5 3l.5 -3l.5 5l.5 -6l.5 5l.5 -4l.5 3l.5 -3l.5 3l.5 -4l.5 5l.5 -3l.5 3l.5 -4l.5 7l.5 -6l.5 2l.5 -1l.5 4l.5 -4l.5 1l.5 -2l.5 3l.5 -2l.5 2l.5 -5l.5 5l.5 -2l.5 3l.5 -3l.5 2l.5 -3l.5 3l.5 -3l.5 3l.5 -4l.5 6l.5 -4l.5 3l.5 -4l.5 4l.5 -4l.5 2l.5 -4l.5 5l.5 -2l.5 2l.5 -2l.5 2l.5 -5l.5 5l.5 -2l.5 3l.5 -3l.5 2l.5 -2l.5 3l.5 -3l.5 3l.5 -3l.5 4l.5 -7l.5 5l.5 -3l.5 6l.5 -6l.5 3l.5 -3l.5 3M2498.5 1313l.5 -1l.5 2l.5 -2l.5 4l.5 -6l.5 4l.5 -4l.5 4l.5 -2l.5 3l.5 -3l.5 3l.5 -4l.5 3l.5 -3l.5 5l.5 -6l.5 5l.5 -2l.5 3l.5 -4l.5 2l.5 -1l.5 1l.5 -3l.5 3l.5 -2l.5 2l.5 -2l.5 2l.5 -2l.5 3l.5 -3l.5 2l.5 -3l.5 3l.5 -2l.5 3l.5 -5l.5 4l.5 -2l.5 3l.5 -3l.5 1l.5 -1l.5 5l.5 -6l.5 3l.5 -4l.5 3l.5 -2l.5 3l.5 -3l.5 4l.5 -3l.5 2l.5 -4l.5 5l.5 -4l.5 2l.5 -3l.5 5l.5 -4l.5 2l.5 -1l.5 2l.5 -2l.5 1l.5 -2l.5 3l.5 -2l.5 3l.5 -3l.5 2l.5 -2l.5 2l.5 -2l.5 2l.5 -1l.5 6l.5 -9l.5 6l.5 -4l.5 2l.5 -2l.5 2l.5 -1l.5 2l.5 -4l.5 4l.5 -3l.5 6l.5 -6l.5 2l.5 -2l.5 2l.5 -3l.5 3l.5 -3l.5 3l.5 -2l.5 1l.5 -1l.5 5l.5 -6l.5 3l.5 -3l.5 3l.5 -2l.5 2l.5 -2l.5 2l.5 -2l.5 2l.5 -3l.5 5l.5 -4l.5 4l.5 -4l.5 3l.5 -3l.5 2l.5 -2l.5 2l.5 -2l.5 2l.5 -2l.5 3l.5 -3l.5 2l.5 -2l.5 2l.5 -3l.5 4l.5 -3l.5 2l.5 -3l.5 3l.5 -5l.5 6l.5 -3l.5 2l.5 -2l.5 1l.5 -1l.5 4l.5 -4l.5 3l.5 -4l.5 3l.5 -4l.5 4l.5 -3l.5 3l.5 -2M2585.5 1313l.5 -1l.5 2l.5 -2l.5 2l.5 -3" stroke="#7b4597" stroke-width="1.5" fill="none" stroke-linejoin="bevel"/>
<path d="M662.2 1426l.5 -2l.5 10l.5 -10l.5 16l.5 -18l.5 12l.5 -15l.5 16l.5 -12l.5 8l.5 -7l.5 8l.5 -19l.5 16l.5 -7l.5 7l.5 -6l.5 5l.5 -9l.5 20l.5 -16l.5 7l.5 -7l.5 6l.5 -6l.5 10l.5 -10l.5 6l.5 -5l.5 10l.5 -20l.5 16l.5 -10l.5 8l.5 -5l.5 7l.5 -6l.5 7l.5 -6l.5 8l.5 -7l.5 6l.5 -6l.5 6l.5 -6l.5 8l.5 -10l.5 7l.5 -14l.5 18l.5 -21l.5 22l.5 -10l.5 7l.5 -8l.5 8l.5 -7l.5 7l.5 -8l.5 10l.5 -10l.5 10l.5 -10l.5 7l.5 -8l.5 6l.5 -6l.5 6l.5 -12l.5 12l.5 -9l.5 11l.5 -11l.5 9l.5 -5l.5 5l.5 -7l.5 5l.5 -5l.5 10l.5 -12l.5 8l.5 -6l.5 17l.5 -17l.5 11l.5 -10l.5 17l.5 -18l.5 12l.5 -17l.5 12l.5 -6l.5 6l.5 -6l.5 12l.5 -13l.5 11l.5 -14M964.0 1426l.5 -3l.5 9l.5 -10l.5 9l.5 -12l.5 13l.5 -10l.5 9l.5 -9l.5 9l.5 -10l.5 21l.5 -21l.5 10l.5 -7l.5 6l.5 -6l.5 12l.5 -13l.5 7l.5 -8l.5 9l.5 -6l.5 8l.5 -14l.5 13l.5 -16l.5 18l.5 -17l.5 14l.5 -7l.5 7l.5 -7l.5 8l.5 -9l.5 6l.5 -12l.5 11l.5 -15l.5 17l.5 -6l.5 6l.5 -10l.5 12l.5 -9l.5 5l.5 -4l.5 10l.5 -14l.5 19l.5 -20l.5 23l.5 -20l.5 8l.5 -7l.5 7l.5 -5l.5 19l.5 -21l.5 7l.5 -6l.5 11l.5 -17l.5 17l.5 -15l.5 12l.5 -9l.5 12l.5 -24l.5 19l.5 -7l.5 7l.5 -7l.5 7l.5 -10l.5 6l.5 -4l.5 11l.5 -12l.5 8l.5 -10l.5 9l.5 -7l.5 7l.5 -8l.5 11l.5 -9l.5 5l.5 -6l.5 7l.5 -9l.5 9l.5 -7l.5 6l.5 -7l.5 7l.5 -5l.5 6l.5 -10l.5 9l.5 -7l.5 9l.5 -9l.5 7l.5 -6l.5 18l.5 -19l.5 12l.5 -8l.5 10l.5 -16l.5 17l.5 -12l.5 9l.5 -9l.5 7l.5 -9l.5 7l.5 -11l.5 13l.5 -8l.5 8l.5 -10l.5 8l.5 -7l.5 7l.5 -11l.5 12l.5 -10l.5 12l.5 -8l.5 9l.5 -12l.5 14l.5 -12l.5 8l.5 -10l.5 12l.5 -9l.5 11l.5 -10l.5 10l.5 -22l.5 17l.5 -6l.5 7l.5 -7l.5 9l.5 -8l.5 7l.5 -8l.5 5M1043.0 1426l.5 -3l.5 8l.5 -16l.5 15l.5 -8l.5 5l.5 -6l.5 8l.5 -13l.5 12l.5 -9l.5 9l.5 -8M1053.0 1426l.5 -2l.5 14l.5 -20l.5 15l.5 -9l.5 6l.5 -9l.5 8l.5 -13l.5 10l.5 -7l.5 11l.5 -9l.5 16l.5 -14l.5 5l.5 -17l.5 21l.5 -9l.5 6l.5 -11l.5 12l.5 -20l.5 19l.5 -5l.5 6l.5 -6l.5 5l.5 -6l.5 5l.5 -6l.5 7l.5 -8l.5 9l.5 -10l.5 8l.5 -11l.5 11l.5 -10l.5 15l.5 -15l.5 15l.5 -13l.5 11l.5 -10l.5 9l.5 -13l.5 11l.5 -5l.5 7l.5 -10l.5 15l.5 -11l.5 15l.5 -15l.5 5l.5 -8l.5 7l.5 -11l.5 13l.5 -8l.5 10l.5 -9l.5 18l.5 -18l.5 16l.5 -16l.5 8l.5 -8l.5 8l.5 -7l.5 9l.5 -12l.5 10l.5 -8l.5 7l.5 -8l.5 13l.5 -12l.5 6l.5 -8l.5 10l.5 -6l.5 6l.5 -9l.5 9l.5 -6l.5 8l.5 -8l.5 6l.5 -8l.5 17l.5 -16l.5 5l.5 -6l.5 11l.5 -18l.5 14l.5 -7l.5 7l.5 -6l.5 6l.5 -12l.5 11l.5 -6l.5 5l.5 -5l.5 11l.5 -10l.5 16l.5 -24l.5 26l.5 -18l.5 11l.5 -13l.5 10l.5 -7l.5 6l.5 -12l.5 11l.5 -10l.5 10l.5 -8l.5 14l.5 -13l.5 8l.5 -8l.5 10l.5 -11l.5 12l.5 -14l.5 10l.5 -11l.5 18l.5 -13l.5 8l.5 -13l.5 11l.5 -10l.5 12l.5 -10l.5 7l.5 -5l.5 12l.5 -15l.5 11l.5 -7l.5 16l.5 -21l.5 11l.5 -13l.5 13l.5 -9l.5 11l.5 -9l.5 13l.5 -14l.5 8l.5 -9l.5 8l.5 -4l.5 4l.5 -9l.5 9l.5 -7l.5 11l.5 -10l.5 7l.5 -10l.5 10l.5 -10l.5 10l.5 -8l.5 8l.5 -8l.5 13l.5 -12l.5 9l.5 -11l.5 9l.5 -5l.5 5l.5 -9l.5 9l.5 -12l.5 14l.5 -10l.5 10l.5 -11l.5 9l.5 -15l.5 16l.5 -8l.5 5l.5 -8l.5 8l.5 -5l.5 8l.5 -7l.5 6l.5 -8l.5 11l.5 -11l.5 7l.5 -6l.5 8l.5 -7l.5 4M1212.0 1426l.5 -7l.5 11l.5 -7l.5 5l.5 -5l.5 10l.5 -11l.5 11l.5 -11l.5 9l.5 -8l.5 9l.5 -13l.5 13l.5 -9l.5 9l.5 -11l.5 8l.5 -5l.5 7l.5 -8l.5 6M1233.0 1426l.5 -3l.5 6l.5 -9l.5 12l.5 -11l.5 7l.5 -7l.5 13l.5 -12l.5 6l.5 -4l.5 5l.5 -13l.5 19l.5 -11l.5 5M1266.0 1426l.5 -3l.5 8l.5 -11l.5 8l.5 -11l.5 12l.5 -6l.5 6l.5 -8l.5 14l.5 -18l.5 14l.5 -10l.5 14l.5 -12l.5 7l.5 -9l.5 8l.5 -5l.5 10l.5 -10l.5 12l.5 -14l.5 9l.5 -10l.5 6l.5 -5l.5 8l.5 -9l.5 9l.5 -10l.5 7l.5 -5l.5 5l.5 -6l.5 9l.5 -10l.5 7l.5 -15l.5 21l.5 -10l.5 6l.5 -7l.5 8l.5 -12l.5 12l.5 -11l.5 11l.5 -6l.5 14l.5 -13l.5 5l.5 -6l.5 5l.5 -9l.5 9l.5 -6l.5 8l.5 -9l.5 16l.5 -15l.5 6l.5 -5l.5 7l.5 -8l.5 16l.5 -19l.5 7l.5 -5l.5 6l.5 -11l.5 10l.5 -14l.5 16l.5 -8l.5 9l.5 -13l.5 10l.5 -8l.5 7l.5 -5l.5 15l.5 -15l.5 6M1311.5 1426l.5 -6l.5 9l.5 -6l.5 18l.5 -19l.5 10l.5 -9l.5 8M1440.0 1426l.5 -6l.5 13l.5 -13l.5 9l.5 -10l.5 11l.5 -11l.5 11l.5 -10l.5 7l.5 -6l.5 12l.5 -10l.5 5l.5 -8l.5 17l.5 -22l.5 15l.5 -7l.5 8l.5 -9l.5 6l.5 -11l.5 12l.5 -7l.5 7M1486.0 1426l.5 -5l.5 19l.5 -18l.5 8l.5 -6l.5 10l.5 -12l.5 15l.5 -12l.5 11l.5 -11l.5 8l.5 -8l.5 9l.5 -13l.5 14l.5 -15l.5 13l.5 -9l.5 15l.5 -14l.5 5l.5 -8l.5 10l.5 -10l.5 8l.5 -9l.5 11l.5 -9l.5 5l.5 -14l.5 14l.5 -7l.5 13l.5 -14l.5 8l.5 -8l.5 22l.5 -19l.5 10l.5 -14l.5 9l.5 -10l.5 10l.5 -9l.5 9l.5 -7l.5 9l.5 -9l.5 8l.5 -6l.5 8l.5 -12l.5 13l.5 -9l.5 14l.5 -13l.5 8l.5 -12l.5 11l.5 -13l.5 10l.5 -9l.5 19l.5 -22l.5 20l.5 -17l.5 16l.5 -15l.5 10l.5 -11l.5 10l.5 -4l.5 15l.5 -20l.5 14l.5 -10l.5 6l.5 -7l.5 6l.5 -9l.5 8l.5 -6l.5 7l.5 -9l.5 8l.5 -11l.5 15l.5 -17l.5 11l.5 -8l.5 9l.5 -5l.5 9l.5 -15l.5 9l.5 -10l.5 16l.5 -10l.5 10l.5 -13l.5 10l.5 -19l.5 22l.5 -13l.5 15l.5 -12l.5 11l.5 -10l.5 6l.5 -10l.5 12l.5 -10l.5 10l.5 -11l.5 12l.5 -8l.5 6l.5 -6l.5 14l.5 -19l.5 13l.5 -11l.5 10l.5 -6l.5 5l.5 -8l.5 14l.5 -10l.5 9l.5 -13l.5 10l.5 -8l.5 10l.5 -9l.5 7l.5 -10l.5 16l.5 -13l.5 18l.5 -17l.5 5l.5 -8l.5 11l.5 -10l.5 6l.5 -10l.5 13l.5 -11l.5 8l.5 -12l.5 16l.5 -9l.5 8l.5 -8l.5 8l.5 -10l.5 15l.5 -13l.5 9l.5 -16l.5 13l.5 -11l.5 11l.5 -8l.5 7l.5 -6l.5 11l.5 -11l.5 7l.5 -8l.5 15l.5 -19l.5 12l.5 -10l.5 11l.5 -11l.5 13l.5 -11l.5 7l.5 -8l.5 15l.5 -14l.5 7l.5 -7l.5 7l.5 -8l.5 15l.5 -13l.5 6l.5 -5l.5 9l.5 -12l.5 9l.5 -7l.5 7l.5 -11l.5 9l.5 -8l.5 9l.5 -9l.5 16l.5 -15l.5 15l.5 -19l.5 13l.5 -10l.5 9l.5 -7l.5 7l.5 -10l.5 15l.5 -16l.5 13l.5 -12l.5 9l.5 -6l.5 7l.5 -8l.5 9l.5 -11l.5 13M1626.5 1426l.5 -2l.5 5l.5 -7l.5 6l.5 -7l.5 10l.5 -8l.5 4l.5 -6l.5 6l.5 -5l.5 10l.5 -10l.5 7l.5 -15l.5 19l.5 -14l.5 12l.5 -7l.5 7l.5 -7l.5 6l.5 -14l.5 18l.5 -10l.5 14l.5 -16l.5 8l.5 -7l.5 6l.5 -9l.5 8l.5 -4l.5 19l.5 -21l.5 11l.5 -13l.5 10l.5 -6l.5 4l.5 -6l.5 17l.5 -27l.5 21l.5 -10l.5 7l.5 -7M1695.5 1426l.5 -4l.5 6l.5 -7l.5 6l.5 -9l.5 11l.5 -9M1703.0 1426l.5 -15l.5 20l.5 -10l.5 7l.5 -6l.5 7l.5 -6M1713.5 1426l.5 -2l.5 7l.5 -13l.5 12l.5 -9l.5 10l.5 -8l.5 5l.5 -8l.5 12l.5 -9l.5 7l.5 -12l.5 11l.5 -15l.5 16l.5 -15l.5 24l.5 -28l.5 21l.5 -10l.5 7l.5 -4l.5 5l.5 -6l.5 15l.5 -15l.5 10l.5 -12l.5 7l.5 -6l.5 10l.5 -10l.5 13l.5 -12l.5 8l.5 -8l.5 8l.5 -13l.5 9l.5 -4l.5 6l.5 -7l.5 18l.5 -19l.5 7l.5 -6l.5 8l.5 -11l.5 9l.5 -13l.5 17l.5 -14l.5 15l.5 -10l.5 4l.5 -4l.5 12l.5 -19l.5 13l.5 -12l.5 15l.5 -16l.5 21l.5 -16l.5 10l.5 -9l.5 4l.5 -7l.5 20l.5 -20l.5 7l.5 -4l.5 7l.5 -12l.5 10l.5 -6l.5 9l.5 -13l.5 9l.5 -5l.5 7l.5 -11l.5 11l.5 -8l.5 12l.5 -12l.5 8l.5 -8l.5 6l.5 -5l.5 13l.5 -17l.5 10l.5 -9l.5 7l.5 -8l.5 14l.5 -16l.5 11l.5 -5l.5 16l.5 -20l.5 10l.5 -12l.5 19l.5 -10l.5 6l.5 -10l.5 9l.5 -6l.5 8l.5 -7l.5 7l.5 -16l.5 13l.5 -13l.5 16l.5 -11l.5 8l.5 -9l.5 14l.5 -9l.5 14l.5 -15l.5 7l.5 -9l.5 16l.5 -13l.5 5l.5 -10l.5 17l.5 -14l.5 6l.5 -6l.5 7l.5 -11l.5 10l.5 -8l.5 9l.5 -11l.5 12l.5 -8l.5 6l.5 -6l.5 11l.5 -12l.5 8l.5 -20l.5 20l.5 -10l.5 11l.5 -6l.5 9l.5 -14l.5 16l.5 -10l.5 9l.5 -14l.5 10l.5 -8l.5 6l.5 -7l.5 7l.5 -17l.5 20l.5 -11l.5 9l.5 -9l.5 8l.5 -7l.5 8l.5 -8l.5 20l.5 -18l.5 11l.5 -17l.5 9l.5 -6l.5 9l.5 -12l.5 9l.5 -13l.5 20l.5 -16l.5 10l.5 -10l.5 10l.5 -6l.5 15l.5 -15l.5 14l.5 -13l.5 8l.5 -9l.5 8l.5 -17l.5 22l.5 -15l.5 9l.5 -11l.5 11l.5 -7l.5 7l.5 -7l.5 11l.5 -10l.5 8l.5 -6l.5 5l.5 -5l.5 13l.5 -15l.5 12l.5 -16l.5 21l.5 -17l.5 14l.5 -14l.5 6l.5 -5l.5 3l.5 -4l.5 6l.5 -15l.5 16l.5 -10l.5 8l.5 -14l.5 12l.5 -9l.5 13l.5 -12l.5 12l.5 -7l.5 5l.5 -6l.5 8l.5 -9l.5 8l.5 -10l.5 21l.5 -14l.5 12l.5 -16l.5 8l.5 -5l.5 7l.5 -9l.5 6l.5 -8l.5 13l.5 -12l.5 9l.5 -15l.5 13l.5 -9l.5 12l.5 -22l.5 20l.5 -9l.5 8l.5 -6l.5 14l.5 -15l.5 12l.5 -16l.5 13l.5 -11l.5 9l.5 -15l.5 15l.5 -14l.5 14l.5 -8l.5 7l.5 -7l.5 10l.5 -10l.5 10l.5 -9l.5 6l.5 -5l.5 12l.5 -17l.5 15l.5 -8l.5 8l.5 -12l.5 9l.5 -9l.5 7l.5 -10l.5 9l.5 -9l.5 9l.5 -4l.5 4l.5 -7l.5 17l.5 -17l.5 8l.5 -6l.5 8l.5 -12l.5 14l.5 -8l.5 10l.5 -15l.5 10l.5 -7l.5 19l.5 -16l.5 5l.5 -7l.5 8l.5 -10l.5 8l.5 -6l.5 6l.5 -14l.5 13l.5 -10l.5 11l.5 -5l.5 4l.5 -10l.5 9l.5 -7l.5 10l.5 -10l.5 20l.5 -18l.5 9l.5 -15l.5 14l.5 -11l.5 12l.5 -15l.5 15l.5 -6l.5 5l.5 -7l.5 9l.5 -6l.5 6l.5 -6l.5 5l.5 -10l.5 13l.5 -12l.5 7l.5 -6l.5 8l.5 -21l.5 21l.5 -9l.5 14l.5 -19l.5 12l.5 -7l.5 12l.5 -12l.5 6l.5 -19l.5 21l.5 -11l.5 6l.5 -8l.5 12l.5 -9l.5 5l.5 -8l.5 11l.5 -12l.5 10l.5 -9l.5 8l.5 -7l.5 11l.5 -10l.5 8l.5 -8l.5 11l.5 -15l.5 24l.5 -27l.5 19l.5 -12l.5 9l.5 -7l.5 5l.5 -5l.5 6l.5 -5l.5 7l.5 -7l.5 7l.5 -8l.5 12l.5 -16M2059.0 1426l.5 -3l.5 7l.5 -8l.5 11l.5 -16l.5 9l.5 -5l.5 8l.5 -9l.5 10l.5 -15l.5 17l.5 -11l.5 9l.5 -10l.5 8l.5 -8l.5 8l.5 -7l.5 6l.5 -8l.5 9l.5 -6l.5 5l.5 -5l.5 6l.5 -6l.5 7l.5 -9l.5 7l.5 -6l.5 19l.5 -19l.5 19l.5 -23l.5 13l.5 -15l.5 14l.5 -8l.5 6l.5 -5l.5 8l.5 -17l.5 26l.5 -20l.5 12l.5 -7l.5 15l.5 -18l.5 9l.5 -7l.5 21l.5 -25l.5 12l.5 -7l.5 12l.5 -16l.5 12l.5 -6l.5 10l.5 -13l.5 6l.5 -10l.5 13l.5 -9l.5 6l.5 -6l.5 7l.5 -7l.5 7l.5 -8l.5 7l.5 -7l.5 8l.5 -7l.5 11l.5 -15l.5 14l.5 -13l.5 10l.5 -8l.5 7l.5 -4l.5 6l.5 -9l.5 17l.5 -16l.5 7l.5 -5l.5 15l.5 -17l.5 11l.5 -9l.5 7l.5 -9l.5 6l.5 -6l.5 6l.5 -5l.5 7l.5 -10l.5 8l.5 -10l.5 9l.5 -9l.5 9l.5 -5l.5 5l.5 -7l.5 7l.5 -11l.5 10l.5 -9l.5 11l.5 -6l.5 4l.5 -6l.5 8l.5 -21l.5 24l.5 -10l.5 6l.5 -8l.5 8l.5 -5l.5 6l.5 -6l.5 12l.5 -13l.5 7l.5 -10l.5 13l.5 -8l.5 5l.5 -9l.5 11l.5 -11l.5 11l.5 -6l.5 7l.5 -6l.5 8l.5 -14l.5 10l.5 -6l.5 8l.5 -9l.5 8l.5 -6l.5 5l.5 -7l.5 7l.5 -5l.5 8l.5 -9l.5 10l.5 -22l.5 22l.5 -10l.5 6l.5 -11l.5 10l.5 -7l.5 11l.5 -10l.5 10l.5 -14l.5 8l.5 -5l.5 6l.5 -7l.5 5l.5 -4l.5 10l.5 -11l.5 10l.5 -11l.5 10l.5 -10l.5 11l.5 -10l.5 12l.5 -15l.5 13l.5 -7l.5 8l.5 -7l.5 7l.5 -10l.5 7l.5 -19l.5 18l.5 -6l.5 11l.5 -11l.5 11l.5 -12l.5 8l.5 -8l.5 10l.5 -13l.5 11l.5 -5l.5 11l.5 -11l.5 6l.5 -10l.5 11l.5 -7l.5 6l.5 -6l.5 6l.5 -9l.5 6l.5 -5l.5 6l.5 -9l.5 8l.5 -12l.5 13l.5 -11l.5 14l.5 -12l.5 11l.5 -7l.5 7l.5 -9l.5 11l.5 -9l.5 9l.5 -8l.5 4l.5 -4l.5 8l.5 -16l.5 13l.5 -5l.5 6l.5 -12l.5 15l.5 -12l.5 8l.5 -5l.5 4l.5 -5l.5 5l.5 -5l.5 6l.5 -7l.5 9l.5 -7l.5 6l.5 -6l.5 6l.5 -9l.5 10l.5 -7l.5 5l.5 -7l.5 9l.5 -14l.5 15l.5 -15l.5 15l.5 -12l.5 8l.5 -6l.5 7l.5 -17l.5 16l.5 -7l.5 7l.5 -12l.5 17l.5 -9l.5 6l.5 -11l.5 14l.5 -11l.5 8l.5 -8l.5 10l.5 -7l.5 6l.5 -8l.5 6l.5 -7l.5 10l.5 -17l.5 15l.5 -9l.5 16l.5 -18l.5 15l.5 -11l.5 8l.5 -7l.5 5l.5 -13l.5 16l.5 -9l.5 8l.5 -10l.5 10l.5 -8l.5 9l.5 -18l.5 16l.5 -8l.5 9l.5 -13l.5 17l.5 -12l.5 8l.5 -10l.5 13l.5 -13l.5 8l.5 -6l.5 5l.5 -6l.5 7l.5 -9l.5 13l.5 -10l.5 7l.5 -7l.5 4l.5 -5l.5 9l.5 -12l.5 13l.5 -14l.5 10l.5 -6l.5 10l.5 -22l.5 18l.5 -20l.5 30l.5 -23l.5 11l.5 -11l.5 15l.5 -11l.5 9l.5 -6l.5 10l.5 -18l.5 18l.5 -8l.5 7l.5 -20l.5 20l.5 -10l.5 14l.5 -11l.5 10l.5 -13l.5 11l.5 -14l.5 10l.5 -6l.5 8l.5 -10l.5 10l.5 -7l.5 6l.5 -15l.5 17l.5 -7l.5 10l.5 -9l.5 13l.5 -16l.5 8l.5 -5l.5 16l.5 -21l.5 9l.5 -7l.5 9l.5 -12l.5 15l.5 -9l.5 8l.5 -7l.5 7l.5 -8l.5 8l.5 -12l.5 11l.5 -10l.5 9l.5 -6l.5 5l.5 -5l.5 4l.5 -5l.5 13l.5 -18l.5 12l.5 -9l.5 8l.5 -8l.5 7l.5 -16l.5 14l.5 -7l.5 7l.5 -7l.5 8l.5 -11l.5 15l.5 -17l.5 20l.5 -13l.5 8l.5 -8l.5 12l.5 -16l.5 10l.5 -6l.5 8l.5 -10l.5 8l.5 -8l.5 11l.5 -8l.5 8l.5 -9l.5 11l.5 -10l.5 6l.5 -3l.5 5l.5 -9l.5 10l.5 -12l.5 12l.5 -9l.5 11l.5 -14l.5 20l.5 -16l.5 10l.5 -21l.5 22l.5 -16l.5 9l.5 -9l.5 10l.5 -6l.5 5l.5 -6l.5 5l.5 -4l.5 5l.5 -6l.5 8l.5 -18l.5 17l.5 -13l.5 17l.5 -15l.5 11l.5 -9l.5 11l.5 -9l.5 10l.5 -8l.5 6M2498.5 1426l.5 -3l.5 7l.5 -11l.5 10l.5 -12l.5 19l.5 -15l.5 10l.5 -11l.5 9l.5 -9l.5 13l.5 -12l.5 7l.5 -7l.5 9l.5 -13l.5 21l.5 -19l.5 9l.5 -10l.5 19l.5 -17l.5 8l.5 -7l.5 12l.5 -11l.5 5l.5 -8l.5 15l.5 -13l.5 8l.5 -8l.5 9l.5 -11l.5 19l.5 -13l.5 6l.5 -7l.5 7l.5 -13l.5 12l.5 -9l.5 8l.5 -4l.5 6l.5 -7l.5 7l.5 -9l.5 10l.5 -8l.5 8l.5 -10l.5 8l.5 -5l.5 4l.5 -6l.5 12l.5 -18l.5 11l.5 -5l.5 7l.5 -7l.5 5l.5 -5l.5 16l.5 -19l.5 12l.5 -16l.5 15l.5 -11l.5 10l.5 -9l.5 15l.5 -14l.5 9l.5 -12l.5 11l.5 -7l.5 6l.5 -8l.5 11l.5 -8l.5 9l.5 -12l.5 8l.5 -6l.5 9l.5 -8l.5 6l.5 -9l.5 15l.5 -12l.5 7l.5 -13l.5 15l.5 -7l.5 10l.5 -16l.5 16l.5 -15l.5 10l.5 -7l.5 6l.5 -8l.5 10l.5 -11l.5 14l.5 -15l.5 8l.5 -6l.5 12l.5 -13l.5 13l.5 -13l.5 9l.5 -8l.5 7l.5 -8l.5 9l.5 -7l.5 5l.5 -6l.5 8l.5 -20l.5 15l.5 -15l.5 17l.5 -5l.5 7l.5 -9l.5 9l.5 -11l.5 15l.5 -16l.5 15l.5 -14l.5 9l.5 -13l.5 19l.5 -20l.5 17l.5 -11l.5 8l.5 -6l.5 7l.5 -8l.5 6l.5 -6l.5 12l.5 -10l.5 8l.5 -6l.5 9l.5 -12M2585.5 1426l.5 -3l.5 11l.5 -11l.5 9l.5 -8" stroke="#4a9e7c" stroke-width="1.5" fill="none" stroke-linejoin="bevel"/>
<text x="469.6" y="556" font-size="22" fill="#ffffff" font-family='"Liberation Sans", sans-serif' textLength="282.2" lengthAdjust="spacingAndGlyphs" stroke="#ffffff" stroke-width="0.35">F3 -326.962:90.015 (uV)</text>
<text x="469.6" y="640" font-size="22" fill="#ffffff" font-family='"Liberation Sans", sans-serif' textLength="295.9" lengthAdjust="spacingAndGlyphs" stroke="#ffffff" stroke-width="0.35">F4 -307.799:120.819 (uV)</text>
<text x="469.6" y="724" font-size="22" fill="#ffffff" font-family='"Liberation Sans", sans-serif' textLength="283.7" lengthAdjust="spacingAndGlyphs" stroke="#ffffff" stroke-width="0.35">C3 -296.727:233.71 (uV)</text>
<text x="469.6" y="808" font-size="22" fill="#ffffff" font-family='"Liberation Sans", sans-serif' textLength="298.8" lengthAdjust="spacingAndGlyphs" stroke="#ffffff" stroke-width="0.35">C4 -211.556:118.952 (uV)</text>
<text x="469.6" y="892" font-size="22" fill="#ffffff" font-family='"Liberation Sans", sans-serif' textLength="299.1" lengthAdjust="spacingAndGlyphs" stroke="#ffffff" stroke-width="0.35">FCZ -300.538:86.044 (uV)</text>
<text x="469.6" y="976" font-size="22" fill="#ffffff" font-family='"Liberation Sans", sans-serif' textLength="300.0" lengthAdjust="spacingAndGlyphs" stroke="#ffffff" stroke-width="0.35">CZ -228.227:107.588 (uV)</text>
<text x="469.6" y="1060" font-size="22" fill="#ffffff" font-family='"Liberation Sans", sans-serif' textLength="298.2" lengthAdjust="spacingAndGlyphs" stroke="#ffffff" stroke-width="0.35">CPZ -71.891:175.067 (uV)</text>
<text x="469.6" y="1144" font-size="22" fill="#ffffff" font-family='"Liberation Sans", sans-serif' textLength="284.4" lengthAdjust="spacingAndGlyphs" stroke="#ffffff" stroke-width="0.35">PZ -83.057:174.128 (uV)</text>
<text x="469.6" y="1228" font-size="22" fill="#ffffff" font-family='"Liberation Sans", sans-serif' textLength="326.2" lengthAdjust="spacingAndGlyphs" stroke="#ffffff" stroke-width="0.35">POz -3539.503:3651.06 (uV)</text>
<text x="469.6" y="1312" font-size="22" fill="#ffffff" font-family='"Liberation Sans", sans-serif' textLength="300.6" lengthAdjust="spacingAndGlyphs" stroke="#ffffff" stroke-width="0.35">OZ -671.637:169.708 (uV)</text>
<text x="469.6" y="1396" font-size="22" fill="#ffffff" font-family='"Liberation Sans", sans-serif' textLength="310.4" lengthAdjust="spacingAndGlyphs" stroke="#ffffff" stroke-width="0.35">FPZ -262.962:321.229 (uV)</text>
<rect x="2640" y="312" width="60" height="2.2" fill="#e08a2e"/>
<text x="2711" y="322" font-size="24" fill="#2a3f5f" font-family='"Liberation Sans", sans-serif' stroke="#2a3f5f" stroke-width="0.3" >F3</text>
<rect x="2640" y="350" width="60" height="2.2" fill="#ef8274"/>
<text x="2711" y="360" font-size="24" fill="#2a3f5f" font-family='"Liberation Sans", sans-serif' stroke="#2a3f5f" stroke-width="0.3" >F4</text>
<rect x="2640" y="388" width="60" height="2.2" fill="#7b4597"/>
<text x="2711" y="398" font-size="24" fill="#2a3f5f" font-family='"Liberation Sans", sans-serif' stroke="#2a3f5f" stroke-width="0.3" >C3</text>
<rect x="2640" y="426" width="60" height="2.2" fill="#e8b53c"/>
<text x="2711" y="436" font-size="24" fill="#2a3f5f" font-family='"Liberation Sans", sans-serif' stroke="#2a3f5f" stroke-width="0.3" >C4</text>
<rect x="2640" y="464" width="60" height="2.2" fill="#e08a2e"/>
<text x="2711" y="474" font-size="24" fill="#2a3f5f" font-family='"Liberation Sans", sans-serif' stroke="#2a3f5f" stroke-width="0.3" >FCZ</text>
<rect x="2640" y="502" width="60" height="2.2" fill="#3a8c9c"/>
<text x="2711" y="512" font-size="24" fill="#2a3f5f" font-family='"Liberation Sans", sans-serif' stroke="#2a3f5f" stroke-width="0.3" >CZ</text>
<rect x="2640" y="540" width="60" height="2.2" fill="#c63b8f"/>
<text x="2711" y="550" font-size="24" fill="#2a3f5f" font-family='"Liberation Sans", sans-serif' stroke="#2a3f5f" stroke-width="0.3" >CPZ</text>
<rect x="2640" y="578" width="60" height="2.2" fill="#ef8274"/>
<text x="2711" y="588" font-size="24" fill="#2a3f5f" font-family='"Liberation Sans", sans-serif' stroke="#2a3f5f" stroke-width="0.3" >PZ</text>
<rect x="2640" y="616" width="60" height="2.2" fill="#b9bca6"/>
<text x="2711" y="626" font-size="24" fill="#2a3f5f" font-family='"Liberation Sans", sans-serif' stroke="#2a3f5f" stroke-width="0.3" >POz</text>
<rect x="2640" y="654" width="60" height="2.2" fill="#7b4597"/>
<text x="2711" y="664" font-size="24" fill="#2a3f5f" font-family='"Liberation Sans", sans-serif' stroke="#2a3f5f" stroke-width="0.3" >OZ</text>
<rect x="2640" y="692" width="60" height="2.2" fill="#4a9e7c"/>
<text x="2711" y="702" font-size="24" fill="#2a3f5f" font-family='"Liberation Sans", sans-serif' stroke="#2a3f5f" stroke-width="0.3" >FPZ</text>
<rect x="2640" y="726" width="60" height="13" fill="#253141"/><rect x="2640" y="726" width="60" height="2" fill="#8a8a80"/>
<text x="2711" y="740" font-size="24" fill="#2a3f5f" font-family='"Liberation Sans", sans-serif' stroke="#2a3f5f" stroke-width="0.3" >Gap</text>
<rect x="2640" y="764" width="60" height="12.5" fill="#8080f4"/><rect x="2640" y="764" width="60" height="2.3" fill="#0000ff"/>
<text x="2711" y="778" font-size="24" fill="#2a3f5f" font-family='"Liberation Sans", sans-serif' stroke="#2a3f5f" stroke-width="0.3" >N2</text>
</svg></body></html>
